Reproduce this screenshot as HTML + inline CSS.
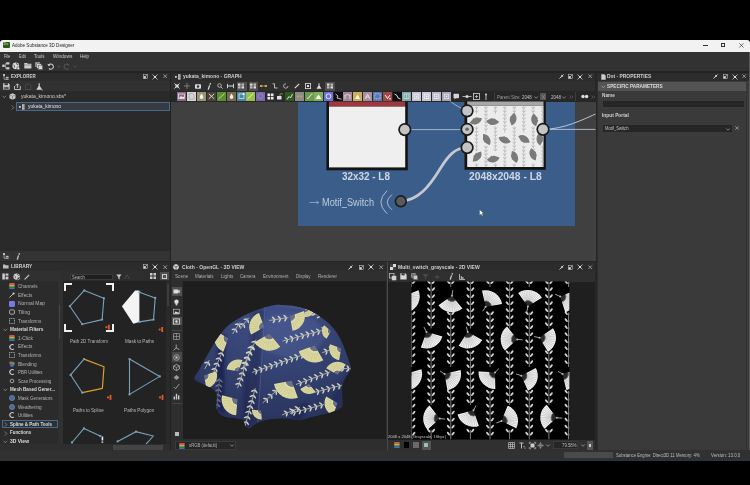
<!DOCTYPE html>
<html><head><meta charset="utf-8">
<style>
*{margin:0;padding:0;box-sizing:border-box}
html,body{width:750px;height:485px;overflow:hidden;background:#000;font-family:"Liberation Sans",sans-serif;color:#c8c8c8}
.a{position:absolute}
.t{position:absolute;white-space:nowrap;line-height:1;}
svg{position:absolute;overflow:visible}
</style></head><body>
<div class="a" style="left:0px;top:39.5px;width:750px;height:12px;background:#f2f2f2;border-radius:3px 3px 0 0"></div>
<div class="a" style="left:2.7px;top:42.2px;width:7.2px;height:6.2px;background:#2f5a1c;border-radius:1px"></div>
<div class="t" style="left:3.6px;top:43.4px;font-size:3.6px;color:#a8d890;font-weight:bold;">Ds</div>
<div class="t" style="left:11.7px;top:43.19px;font-size:5.8px;color:#1c1c1c;transform-origin:0 0;transform:scaleX(0.782);">Adobe Substance 3D Designer</div>
<div class="a" style="left:703px;top:45.3px;width:4.5px;height:0.6px;background:#333;"></div>
<div class="a" style="left:720.5px;top:43.2px;width:4.2px;height:4.2px;background:transparent;border:0.7px solid #333"></div>
<svg style="left:738.5px;top:43.2px" width="5" height="5"><path d="M0.3 0.3L4.5 4.5M4.5 0.3L0.3 4.5" stroke="#333" stroke-width="0.7"/></svg>
<div class="a" style="left:0px;top:51.5px;width:750px;height:409px;background:#2d2d2d;"></div>
<div class="a" style="left:0px;top:51.5px;width:750px;height:19.2px;background:#323232;"></div>
<div class="a" style="left:0px;top:70.7px;width:750px;height:2px;background:#232323;"></div>
<div class="t" style="left:4.3px;top:54.28px;font-size:5.6px;color:#cccccc;transform-origin:0 0;transform:scaleX(0.687);">File</div>
<div class="t" style="left:19.2px;top:54.28px;font-size:5.6px;color:#cccccc;transform-origin:0 0;transform:scaleX(0.705);">Edit</div>
<div class="t" style="left:34px;top:54.28px;font-size:5.6px;color:#cccccc;transform-origin:0 0;transform:scaleX(0.803);">Tools</div>
<div class="t" style="left:52.7px;top:54.28px;font-size:5.6px;color:#cccccc;transform-origin:0 0;transform:scaleX(0.850);">Windows</div>
<div class="t" style="left:79.7px;top:54.28px;font-size:5.6px;color:#cccccc;transform-origin:0 0;transform:scaleX(0.781);">Help</div>
<svg style="left:1.5px;top:62px" width="8" height="8"><rect x="0.3" y="2.6" width="2.4" height="2.4" fill="#d0d0d0"/><rect x="4.2" y="0.3" width="3.2" height="2.2" fill="#d0d0d0"/><rect x="4.2" y="5.2" width="3.2" height="2.2" fill="#d0d0d0"/><path d="M2.7 3.8 H3.6 V1.4 H4.2 M3.6 3.8 V6.3 H4.2" stroke="#d0d0d0" stroke-width="0.6" fill="none"/></svg>
<svg style="left:12px;top:61.8px" width="8" height="8"><circle cx="3.8" cy="3.8" r="3.4" fill="#d8d8d8"/><path d="M1.2 2.5 Q3 3.5 2.5 5.5 M4.5 0.8 Q4 2.5 6.5 3" stroke="#2d2d2d" stroke-width="0.7" fill="none"/><circle cx="6.2" cy="6.2" r="1.5" fill="#d8d8d8" stroke="#323232" stroke-width="0.5"/></svg>
<svg style="left:23.5px;top:62.2px" width="8" height="7"><path d="M0.3 1 H3 L3.8 1.8 H7.4 V6.4 H0.3Z" fill="#cfcfcf"/><path d="M0.3 3 H7.4" stroke="#555" stroke-width="0.5"/></svg>
<svg style="left:34.8px;top:61.8px" width="8" height="8"><rect x="0.3" y="0.3" width="4.6" height="4.6" fill="#bbb"/><rect x="1.8" y="1.8" width="4.6" height="4.6" fill="#ccc" stroke="#323232" stroke-width="0.4"/><rect x="3.2" y="3.2" width="4.4" height="4.4" fill="#d8d8d8" stroke="#323232" stroke-width="0.4"/></svg>
<svg style="left:47px;top:62.5px" width="8" height="7"><path d="M1.5 2.5 A2.6 2.6 0 1 1 2 5.5" fill="none" stroke="#c8c8c8" stroke-width="1.1"/><path d="M0.3 0.8 L1.6 3.2 L3.5 1.8Z" fill="#c8c8c8"/></svg>
<svg style="left:56.5px;top:64.8px" width="4" height="3"><path d="M0.3 0.5 L2 2.3 L3.7 0.5" stroke="#666" stroke-width="0.7" fill="none"/></svg>
<svg style="left:63px;top:62.5px" width="8" height="7"><path d="M6 2.5 A2.6 2.6 0 1 0 5.5 5.5" fill="none" stroke="#555" stroke-width="1.1"/></svg>
<svg style="left:72.5px;top:64.8px" width="4" height="3"><path d="M0.3 0.5 L2 2.3 L3.7 0.5" stroke="#555" stroke-width="0.7" fill="none"/></svg>
<div class="a" style="left:0px;top:72.7px;width:170px;height:8.3px;background:#2c2c2c;"></div>
<svg style="left:3px;top:73.5px" width="6" height="6"><rect x="0" y="0" width="2" height="2" fill="#bbb"/><rect x="2.8" y="2.8" width="2.8" height="1.4" fill="#bbb"/><rect x="2.8" y="4.6" width="2.8" height="1.2" fill="#bbb"/><path d="M1 2 V5.2 H2.8" stroke="#bbb" stroke-width="0.7" fill="none"/></svg>
<div class="t" style="left:11.3px;top:74.17px;font-size:5.4px;color:#cfcfcf;font-weight:bold;transform-origin:0 0;transform:scaleX(0.831);">EXPLORER</div>
<svg style="left:142.9px;top:74.1px" width="5" height="5"><rect x="0.4" y="0.4" width="4.2" height="4.2" fill="none" stroke="#bbb" stroke-width="0.6"/><rect x="0.6" y="2.2" width="2.2" height="2.2" fill="#ddd"/><path d="M2.5 2.5 L4.2 0.8" stroke="#ddd" stroke-width="0.6"/></svg>
<svg style="left:152.2px;top:73.6px" width="6" height="6"><path d="M0.5 0.5L5.5 5.5M5.5 0.5L0.5 5.5" stroke="#ccc" stroke-width="0.8"/><circle cx="3" cy="3" r="1.1" fill="#eee"/></svg>
<svg style="left:163.0px;top:74.39999999999999px" width="5" height="5"><path d="M0.4 0.4L4 4M4 0.4L0.4 4" stroke="#aaa" stroke-width="0.8"/></svg>
<div class="a" style="left:0px;top:81px;width:170px;height:10px;background:#313131;"></div>
<svg style="left:2.5px;top:83px" width="7" height="7"><path d="M0.2 0.2 H5.5 L6.6 1.3 V6.6 H0.2Z" fill="#d4d4d4"/><rect x="1.5" y="0.2" width="3.4" height="2" fill="#333"/><rect x="1.2" y="3.8" width="4.4" height="2.4" fill="#555"/></svg>
<svg style="left:13.5px;top:82.8px" width="7" height="7"><path d="M0.5 3 V6.5 H6.3 V3" stroke="#ccc" stroke-width="0.9" fill="none"/><path d="M3.4 5 V1 M1.8 2.5 L3.4 0.8 L5 2.5" stroke="#ccc" stroke-width="0.9" fill="none"/></svg>
<svg style="left:25.3px;top:83px" width="7" height="7"><path d="M0.5 6.5 V2 L3.2 0.5 L6 2 V6.5Z" fill="none" stroke="#4a4a4a" stroke-width="0.9"/></svg>
<svg style="left:36px;top:82.6px" width="7" height="8"><path d="M2.6 0.3 H3.8 V3 L6.3 6.8 H0.3 L2.6 3Z" fill="#d0d0d0"/><circle cx="6.2" cy="7" r="0.6" fill="#aaa"/></svg>
<div class="a" style="left:0px;top:91px;width:170px;height:159.5px;background:#2a2a2a;"></div>
<svg style="left:2px;top:94.5px" width="5" height="4"><path d="M0.5 0.8 L2.3 2.8 L4.1 0.8" stroke="#999" stroke-width="0.7" fill="none"/></svg>
<svg style="left:9px;top:93.3px" width="7" height="7"><path d="M3.5 0.3 L6.5 1.8 V5.2 L3.5 6.7 L0.5 5.2 V1.8Z" fill="#ccc"/><path d="M0.5 1.8 L3.5 3.3 L6.5 1.8 M3.5 3.3 V6.7" stroke="#555" stroke-width="0.5" fill="none"/></svg>
<div class="t" style="left:21px;top:94.41px;font-size:5.3px;color:#d0d0d0;transform-origin:0 0;transform:scaleX(0.949);">yukata_kimono.sbs*</div>
<div class="a" style="left:16.3px;top:102.2px;width:153.3px;height:9.3px;background:#373b41;border:0.8px solid #4a6a8c"></div>
<svg style="left:10.5px;top:104.5px" width="4" height="5"><path d="M0.8 0.5 L2.8 2.5 L0.8 4.5" stroke="#999" stroke-width="0.7" fill="none"/></svg>
<svg style="left:19px;top:104px" width="6" height="6"><rect x="0" y="2" width="1.8" height="1.8" fill="#ccc"/><rect x="3" y="0.3" width="2.6" height="1.5" fill="#ccc"/><rect x="3" y="2.2" width="2.6" height="1.5" fill="#ccc"/><rect x="3" y="4.1" width="2.6" height="1.5" fill="#ccc"/></svg>
<div class="t" style="left:28px;top:104.41px;font-size:5.3px;color:#e0e0e0;transform-origin:0 0;transform:scaleX(0.929);">yukata_kimono</div>
<div class="a" style="left:0px;top:250.5px;width:170px;height:10.8px;background:#333333;"></div>
<svg style="left:3px;top:252.7px" width="6" height="6"><rect x="0" y="0" width="2" height="2" fill="#bbb"/><rect x="2.8" y="2.8" width="2.8" height="1.4" fill="#bbb"/><rect x="2.8" y="4.6" width="2.8" height="1.2" fill="#bbb"/><path d="M1 2 V5.2 H2.8" stroke="#bbb" stroke-width="0.7" fill="none"/></svg>
<svg style="left:15.5px;top:252.5px" width="5" height="7"><circle cx="3.3" cy="0.9" r="0.8" fill="#ccc"/><path d="M2.6 2.4 L1.2 6.6" stroke="#ccc" stroke-width="1.3"/></svg>
<div class="a" style="left:0px;top:261.3px;width:750px;height:1px;background:#262626;"></div>
<div class="a" style="left:0px;top:262px;width:170px;height:9px;background:#2c2c2c;"></div>
<svg style="left:3px;top:264px" width="6" height="5"><path d="M0 0.5 H2.2 L2.8 1.2 H5.6 V4.6 H0Z" fill="#bbb"/></svg>
<div class="t" style="left:11.2px;top:264.27px;font-size:5.4px;color:#cfcfcf;font-weight:bold;transform-origin:0 0;transform:scaleX(0.895);">LIBRARY</div>
<svg style="left:142.9px;top:264.2px" width="5" height="5"><rect x="0.4" y="0.4" width="4.2" height="4.2" fill="none" stroke="#bbb" stroke-width="0.6"/><rect x="0.6" y="2.2" width="2.2" height="2.2" fill="#ddd"/><path d="M2.5 2.5 L4.2 0.8" stroke="#ddd" stroke-width="0.6"/></svg>
<svg style="left:152.2px;top:263.7px" width="6" height="6"><path d="M0.5 0.5L5.5 5.5M5.5 0.5L0.5 5.5" stroke="#ccc" stroke-width="0.8"/><circle cx="3" cy="3" r="1.1" fill="#eee"/></svg>
<svg style="left:163.0px;top:264.5px" width="5" height="5"><path d="M0.4 0.4L4 4M4 0.4L0.4 4" stroke="#aaa" stroke-width="0.8"/></svg>
<div class="a" style="left:0px;top:271px;width:170px;height:10px;background:#303030;"></div>
<svg style="left:2px;top:273px" width="7" height="7"><rect x="0.3" y="0.5" width="2.6" height="6" fill="#ccc"/><rect x="3.6" y="0.5" width="2.8" height="2.2" fill="#ccc"/><rect x="3.6" y="3.6" width="2.8" height="2.8" fill="#ccc"/></svg>
<svg style="left:12.5px;top:272.8px" width="8" height="8"><circle cx="3.6" cy="3.6" r="3.2" fill="#d0d0d0"/><path d="M1.2 2.4 Q3 3.4 2.4 5.2 M4.4 0.8 Q4 2.4 6.2 2.8" stroke="#303030" stroke-width="0.6" fill="none"/><rect x="4.6" y="4.6" width="3" height="3" fill="#303030"/><path d="M5 7.2 L7.2 5" stroke="#ccc" stroke-width="0.8"/></svg>
<svg style="left:24px;top:273.5px" width="6" height="6"><path d="M0.6 5.4 L5.2 0.8" stroke="#ccc" stroke-width="1.1"/></svg>
<div class="a" style="left:0px;top:281px;width:58px;height:163px;background:#2b2b2b;"></div>
<div class="a" style="left:58px;top:271px;width:4.5px;height:173px;background:#303030;"></div>
<div class="a" style="left:58.7px;top:305px;width:1.6px;height:34px;background:#454545;"></div>
<div class="a" style="left:62.5px;top:271px;width:107.5px;height:10px;background:#2e2e2e;"></div>
<div class="a" style="left:70.3px;top:273.8px;width:43px;height:6.1px;background:#1f1f1f;border:0.5px solid #3a3a3a"></div>
<div class="t" style="left:72px;top:274.55px;font-size:5px;color:#bdbdbd;transform-origin:0 0;transform:scaleX(0.808);">Search</div>
<svg style="left:115.5px;top:273.8px" width="7" height="6"><path d="M0.3 0.5 H5.5 L3.6 3 V5.5 L2.3 4.6 V3Z" fill="#cfcfcf"/></svg>
<svg style="left:123.5px;top:274px" width="6" height="6"><path d="M0.5 5 L3 0.8 L5.5 5" stroke="#4a4a4a" stroke-width="1" fill="none"/></svg>
<svg style="left:149.7px;top:273.4px" width="7" height="7"><rect x="0" y="0" width="2.5" height="2.5" fill="#ccc"/><rect x="3.5" y="0" width="2.5" height="2.5" fill="#ccc"/><rect x="0" y="3.5" width="2.5" height="2.5" fill="#ccc"/><rect x="3.5" y="3.5" width="2.5" height="2.5" fill="#ccc"/></svg>
<div class="a" style="left:159.6px;top:272.3px;width:9.6px;height:8.2px;background:#4e4e4e;"></div>
<div class="a" style="left:162.2px;top:274.4px;width:4.4px;height:4.2px;background:transparent;border:0.7px solid #ccc"></div>
<div class="a" style="left:62.5px;top:281px;width:107.5px;height:163px;background:#232323;"></div>
<div class="a" style="left:166px;top:281px;width:3.5px;height:163px;background:#2a2a2a;"></div>
<div class="a" style="left:166.5px;top:284px;width:2.3px;height:22px;background:#3c3c3c;"></div>
<div class="a" style="left:2px;top:420px;width:55.8px;height:8px;background:#2c3036;border:0.7px solid #4a6a8c"></div>
<svg style="left:9.3px;top:283.3px" width="6" height="6"><rect x="0.2" y="0" width="5.4" height="1.5" fill="#d85050" rx="0.6"/><rect x="0.2" y="1.5" width="5.4" height="1.5" fill="#e0a040"/><rect x="0.2" y="3" width="5.4" height="1.5" fill="#50a050"/><rect x="0.2" y="4.5" width="5.4" height="1.5" fill="#4070c0" rx="0.6"/></svg>
<div class="t" style="left:17.8px;top:284.05px;font-size:5px;color:#b4b4b4;transform-origin:0 0;transform:scaleX(0.923);">Channels</div>
<svg style="left:9.3px;top:292px" width="6" height="6"><path d="M0.5 5.5 L4 2" stroke="#ccc" stroke-width="0.9"/><circle cx="4.6" cy="1.4" r="1" fill="#ddd"/></svg>
<div class="t" style="left:17.8px;top:292.75px;font-size:5px;color:#b4b4b4;transform-origin:0 0;transform:scaleX(0.941);">Effects</div>
<svg style="left:9.3px;top:300.7px" width="6" height="6"><defs><linearGradient id="ng" x1="0" y1="0" x2="1" y2="1"><stop offset="0" stop-color="#a070e0"/><stop offset="1" stop-color="#5080f0"/></linearGradient></defs><rect x="0" y="0" width="6" height="6" rx="1.2" fill="url(#ng)"/></svg>
<div class="t" style="left:17.8px;top:301.45px;font-size:5px;color:#b4b4b4;transform-origin:0 0;transform:scaleX(0.992);">Normal Map</div>
<svg style="left:9.3px;top:309.3px" width="6" height="6"><rect x="0.6" y="0.9" width="4.8" height="4.2" rx="0.8" fill="none" stroke="#bbb" stroke-width="0.9"/></svg>
<div class="t" style="left:17.8px;top:310.05px;font-size:5px;color:#b4b4b4;transform-origin:0 0;transform:scaleX(1.029);">Tiling</div>
<svg style="left:9.3px;top:318px" width="6" height="6"><rect x="0.5" y="0.5" width="5" height="5" fill="none" stroke="#bbb" stroke-width="0.8" stroke-dasharray="1 0.6"/></svg>
<div class="t" style="left:17.8px;top:318.75px;font-size:5px;color:#b4b4b4;transform-origin:0 0;transform:scaleX(0.929);">Transforms</div>
<svg style="left:3px;top:328.1px" width="5" height="4"><path d="M0.5 0.8 L2.3 2.8 L4.1 0.8" stroke="#999" stroke-width="0.7" fill="none"/></svg>
<div class="t" style="left:9.8px;top:327.35px;font-size:5px;color:#dcdcdc;font-weight:bold;transform-origin:0 0;transform:scaleX(0.946);">Material Filters</div>
<svg style="left:9.3px;top:335.1px" width="6" height="6"><rect x="0.2" y="0" width="5.4" height="1.5" fill="#d85050" rx="0.6"/><rect x="0.2" y="1.5" width="5.4" height="1.5" fill="#e0a040"/><rect x="0.2" y="3" width="5.4" height="1.5" fill="#50a050"/><rect x="0.2" y="4.5" width="5.4" height="1.5" fill="#4070c0" rx="0.6"/></svg>
<div class="t" style="left:17.8px;top:335.85px;font-size:5px;color:#b4b4b4;transform-origin:0 0;transform:scaleX(0.975);">1-Click</div>
<svg style="left:9.3px;top:343.5px" width="6" height="6"><path d="M4.8 1.2 A2.4 2.4 0 1 0 4.8 4.8" fill="none" stroke="#ccc" stroke-width="1.1"/></svg>
<div class="t" style="left:17.8px;top:344.25px;font-size:5px;color:#b4b4b4;transform-origin:0 0;transform:scaleX(0.941);">Effects</div>
<svg style="left:9.3px;top:352px" width="6" height="6"><rect x="0.5" y="0.5" width="5" height="5" fill="none" stroke="#bbb" stroke-width="0.8" stroke-dasharray="1 0.6"/></svg>
<div class="t" style="left:17.8px;top:352.75px;font-size:5px;color:#b4b4b4;transform-origin:0 0;transform:scaleX(0.929);">Transforms</div>
<svg style="left:9.3px;top:360.8px" width="6" height="6"><circle cx="2" cy="2" r="1.8" fill="#d05050"/><circle cx="4" cy="2.5" r="1.8" fill="#50a050"/><circle cx="3" cy="4.2" r="1.8" fill="#4070d0"/></svg>
<div class="t" style="left:17.8px;top:361.55px;font-size:5px;color:#b4b4b4;transform-origin:0 0;transform:scaleX(0.956);">Blending</div>
<svg style="left:9.3px;top:369.2px" width="6" height="6"><path d="M4.8 1.2 A2.4 2.4 0 1 0 4.8 4.8" fill="none" stroke="#ccc" stroke-width="1.1"/></svg>
<div class="t" style="left:17.8px;top:369.95px;font-size:5px;color:#b4b4b4;transform-origin:0 0;transform:scaleX(0.882);">PBR Utilities</div>
<svg style="left:9.3px;top:377.8px" width="6" height="6"><circle cx="3" cy="3" r="1.8" fill="none" stroke="#bbb" stroke-width="0.8"/></svg>
<div class="t" style="left:17.8px;top:378.55px;font-size:5px;color:#b4b4b4;transform-origin:0 0;transform:scaleX(0.888);">Scan Processing</div>
<svg style="left:3px;top:388.0px" width="5" height="4"><path d="M0.5 0.8 L2.3 2.8 L4.1 0.8" stroke="#999" stroke-width="0.7" fill="none"/></svg>
<div class="t" style="left:9.8px;top:387.25px;font-size:5px;color:#dcdcdc;font-weight:bold;transform-origin:0 0;transform:scaleX(0.920);">Mesh Based Gener...</div>
<svg style="left:9.3px;top:395.2px" width="6" height="6"><circle cx="3" cy="3" r="2.6" fill="#4a6a9a" stroke="#8aa0c0" stroke-width="0.5"/></svg>
<div class="t" style="left:17.8px;top:395.95px;font-size:5px;color:#b4b4b4;transform-origin:0 0;transform:scaleX(0.900);">Mask Generators</div>
<svg style="left:9.3px;top:403.8px" width="6" height="6"><circle cx="3" cy="3" r="2.6" fill="#4a6a9a" stroke="#8aa0c0" stroke-width="0.5"/></svg>
<div class="t" style="left:17.8px;top:404.55px;font-size:5px;color:#b4b4b4;transform-origin:0 0;transform:scaleX(0.930);">Weathering</div>
<svg style="left:9.3px;top:412.3px" width="6" height="6"><path d="M4.8 1.2 A2.4 2.4 0 1 0 4.8 4.8" fill="none" stroke="#ccc" stroke-width="1.1"/></svg>
<div class="t" style="left:17.8px;top:413.05px;font-size:5px;color:#b4b4b4;transform-origin:0 0;transform:scaleX(0.925);">Utilities</div>
<svg style="left:3.5px;top:421.9px" width="4" height="5"><path d="M0.8 0.5 L2.8 2.5 L0.8 4.5" stroke="#999" stroke-width="0.7" fill="none"/></svg>
<div class="t" style="left:9.8px;top:421.65px;font-size:5px;color:#dcdcdc;font-weight:bold;transform-origin:0 0;transform:scaleX(0.904);">Spline &amp; Path Tools</div>
<svg style="left:3.5px;top:430.5px" width="4" height="5"><path d="M0.8 0.5 L2.8 2.5 L0.8 4.5" stroke="#999" stroke-width="0.7" fill="none"/></svg>
<div class="t" style="left:9.8px;top:430.25px;font-size:5px;color:#dcdcdc;font-weight:bold;transform-origin:0 0;transform:scaleX(0.883);">Functions</div>
<svg style="left:3px;top:439.5px" width="5" height="4"><path d="M0.5 0.8 L2.3 2.8 L4.1 0.8" stroke="#999" stroke-width="0.7" fill="none"/></svg>
<div class="t" style="left:9.8px;top:438.75px;font-size:5px;color:#dcdcdc;font-weight:bold;transform-origin:0 0;transform:scaleX(0.996);">3D View</div>
<div class="a" style="left:63.6px;top:282.5px;width:8px;height:2px;background:#f0f0f0;"></div>
<div class="a" style="left:63.6px;top:282.5px;width:2px;height:8px;background:#f0f0f0;"></div>
<div class="a" style="left:106px;top:282.5px;width:8px;height:2px;background:#f0f0f0;"></div>
<div class="a" style="left:112px;top:282.5px;width:2px;height:8px;background:#f0f0f0;"></div>
<div class="a" style="left:63.6px;top:330.4px;width:8px;height:2px;background:#f0f0f0;"></div>
<div class="a" style="left:63.6px;top:324.4px;width:2px;height:8px;background:#f0f0f0;"></div>
<div class="a" style="left:106px;top:330.4px;width:8px;height:2px;background:#f0f0f0;"></div>
<div class="a" style="left:112px;top:324.4px;width:2px;height:8px;background:#f0f0f0;"></div>
<svg style="left:0;top:0" width="750" height="485"><path d="M84.3 290.4 L103.9 298.3 L102.1 319.6 L82.2 324.2 L69.9 306.2 Z" fill="none" stroke="#7aa2ba" stroke-width="1.1" stroke-linejoin="round"/><circle cx="84.3" cy="290.4" r="1.15" fill="#7aa2ba"/><circle cx="103.9" cy="298.3" r="1.15" fill="#7aa2ba"/><circle cx="102.1" cy="319.6" r="1.15" fill="#7aa2ba"/><circle cx="82.2" cy="324.2" r="1.15" fill="#7aa2ba"/><circle cx="69.9" cy="306.2" r="1.15" fill="#7aa2ba"/><path d="M135.1 290.4 L139.4 290.4 L139.4 321.9 L133.3 323.7 L121.9 306.2Z" fill="#f4f4f4"/><path d="M139.4 292.2 L155.2 297.9 L153.5 319.6 L139.4 321.9" fill="none" stroke="#7aa2ba" stroke-width="1.1" stroke-linejoin="round"/><circle cx="139.4" cy="292.2" r="1.15" fill="#7aa2ba"/><circle cx="155.2" cy="297.9" r="1.15" fill="#7aa2ba"/><circle cx="153.5" cy="319.6" r="1.15" fill="#7aa2ba"/><circle cx="139.4" cy="321.9" r="1.15" fill="#7aa2ba"/><path d="M84 359.1 L70.6 374.9 L82.3 392.7" fill="none" stroke="#7aa2ba" stroke-width="1.1"/><path d="M84 359.1 L104 366.7 L102.4 388.3 L82.3 392.7" fill="none" stroke="#d9a02e" stroke-width="1.2" stroke-linejoin="round"/><circle cx="84" cy="359.1" r="1.15" fill="#7aa2ba"/><circle cx="70.6" cy="374.9" r="1.15" fill="#7aa2ba"/><circle cx="82.3" cy="392.7" r="1.15" fill="#7aa2ba"/><path d="M129.5 359.1 L159.8 376.4 L129.5 394.4 Z" fill="none" stroke="#7aa2ba" stroke-width="1.1" stroke-linejoin="round"/><circle cx="129.5" cy="359.1" r="1.15" fill="#7aa2ba"/><circle cx="159.8" cy="376.4" r="1.15" fill="#7aa2ba"/><circle cx="129.5" cy="394.4" r="1.15" fill="#7aa2ba"/><path d="M72 442.5 L84 428.4 L100.3 436" fill="none" stroke="#7aa2ba" stroke-width="1.1" stroke-linejoin="round"/><circle cx="72" cy="442.5" r="1.15" fill="#7aa2ba"/><circle cx="84" cy="428.4" r="1.15" fill="#7aa2ba"/><circle cx="100.3" cy="436" r="1.15" fill="#7aa2ba"/><path d="M117.6 441.4 L136 431.7 L153.3 436 Q150 440 146 444" fill="none" stroke="#7aa2ba" stroke-width="1.1"/><circle cx="117.6" cy="441.4" r="1.15" fill="#7aa2ba"/><circle cx="136" cy="431.7" r="1.15" fill="#7aa2ba"/><rect x="101.6" y="436.5" width="1.6" height="4" fill="#eee"/><rect x="101.6" y="441.5" width="1.6" height="1.3" fill="#eee"/><circle cx="106.4" cy="327.2" r="1.1" fill="#e05a2a"/><rect x="108" y="324.7" width="1.8" height="5" fill="#e05a2a"/><circle cx="159.70000000000002" cy="329.5" r="1.1" fill="#e05a2a"/><rect x="161.3" y="327.0" width="1.8" height="5" fill="#e05a2a"/><circle cx="108.0" cy="397.4" r="1.1" fill="#e05a2a"/><rect x="109.6" y="394.9" width="1.8" height="5" fill="#e05a2a"/><circle cx="160.0" cy="397.4" r="1.1" fill="#e05a2a"/><rect x="161.6" y="394.9" width="1.8" height="5" fill="#e05a2a"/></svg>
<div class="t" style="left:69.9px;top:339.45px;font-size:5px;color:#b8b8b8;transform-origin:0 0;transform:scaleX(0.906);">Path 2D Transform</div>
<div class="t" style="left:124.9px;top:339.45px;font-size:5px;color:#b8b8b8;transform-origin:0 0;transform:scaleX(0.919);">Mask to Paths</div>
<div class="t" style="left:73.2px;top:408.15px;font-size:5px;color:#b8b8b8;transform-origin:0 0;transform:scaleX(0.913);">Paths to Spline</div>
<div class="t" style="left:124.1px;top:408.15px;font-size:5px;color:#b8b8b8;transform-origin:0 0;transform:scaleX(0.940);">Paths Polygon</div>
<div class="a" style="left:0px;top:444px;width:170px;height:6.5px;background:#2e2e2e;"></div>
<div class="a" style="left:113.3px;top:444.5px;width:49.7px;height:5.5px;background:#444;"></div>
<div class="a" style="left:170px;top:72.7px;width:1px;height:378px;background:#222;"></div>
<div class="a" style="left:171px;top:72.7px;width:424.5px;height:8.3px;background:#2c2c2c;"></div>
<svg style="left:174.5px;top:74.2px" width="6" height="6"><rect x="0" y="2" width="1.8" height="1.8" fill="#ccc"/><rect x="3" y="0.3" width="2.6" height="1.5" fill="#ccc"/><rect x="3" y="2.2" width="2.6" height="1.5" fill="#ccc"/><rect x="3" y="4.1" width="2.6" height="1.5" fill="#ccc"/></svg>
<div class="t" style="left:182.7px;top:74.31px;font-size:5.3px;color:#cfcfcf;font-weight:bold;transform-origin:0 0;transform:scaleX(0.939);">yukata_kimono - GRAPH</div>
<svg style="left:558.5px;top:74.1px" width="5" height="5"><path d="M4.5 0.5 L2 3 L0.5 4.5" stroke="#ccc" stroke-width="1"/><path d="M2.5 0.8 L4.2 2.5 L2.5 3.2 L1.8 2.5Z" fill="#ccc"/></svg>
<svg style="left:568.0px;top:74.1px" width="5" height="5"><rect x="0.4" y="0.4" width="4.2" height="4.2" fill="none" stroke="#bbb" stroke-width="0.6"/><rect x="0.6" y="2.2" width="2.2" height="2.2" fill="#ddd"/><path d="M2.5 2.5 L4.2 0.8" stroke="#ddd" stroke-width="0.6"/></svg>
<svg style="left:577px;top:73.6px" width="6" height="6"><path d="M0.5 0.5L5.5 5.5M5.5 0.5L0.5 5.5" stroke="#ccc" stroke-width="0.8"/><circle cx="3" cy="3" r="1.1" fill="#eee"/></svg>
<svg style="left:587.8px;top:74.39999999999999px" width="5" height="5"><path d="M0.4 0.4L4 4M4 0.4L0.4 4" stroke="#aaa" stroke-width="0.8"/></svg>
<div class="a" style="left:171px;top:81px;width:424.5px;height:10.2px;background:#2f2f2f;"></div>
<div class="a" style="left:171px;top:91.2px;width:424.5px;height:10.4px;background:#272727;"></div>
<div class="a" style="left:237.2px;top:82px;width:9.6px;height:8.6px;background:#505050;"></div>
<div class="a" style="left:248.6px;top:82px;width:9px;height:8.6px;background:#505050;"></div>
<div class="a" style="left:325.2px;top:82px;width:10.2px;height:8.6px;background:#505050;"></div>
<svg style="left:173.6px;top:83.4px" width="6" height="6"><path d="M0.5 0.5 L2 2 M5.5 0.5 L4 2 M0.5 5.5 L2 4 M5.5 5.5 L4 4" stroke="#ddd" stroke-width="1"/><rect x="1.5" y="1.5" width="3" height="3" fill="#ddd"/></svg>
<svg style="left:183.8px;top:83.4px" width="6" height="6"><path d="M3 0 V6 M0 3 H6" stroke="#999" stroke-width="0.7"/></svg>
<svg style="left:195.2px;top:83.4px" width="6" height="6"><rect x="0" y="1.2" width="6" height="4.5" rx="0.8" fill="#ddd"/><circle cx="3" cy="3.5" r="1.3" fill="#333"/></svg>
<svg style="left:206.5px;top:82.9px" width="5" height="7"><circle cx="3.3" cy="0.9" r="0.8" fill="#ddd"/><path d="M2.6 2.4 L1.2 6.6" stroke="#ddd" stroke-width="1.3"/></svg>
<svg style="left:216.8px;top:83.4px" width="6" height="6"><circle cx="2.5" cy="2.5" r="1.8" fill="none" stroke="#ccc" stroke-width="0.8"/><path d="M3.8 3.8 L5.6 5.6" stroke="#ccc" stroke-width="0.9"/></svg>
<svg style="left:227.1px;top:83.4px" width="7" height="6"><path d="M0.5 3 H6.5" stroke="#ddd" stroke-width="1"/><path d="M0.5 0.8 V5.2 M6.5 0.8 V5.2" stroke="#ddd" stroke-width="0.9"/></svg>
<svg style="left:238.4px;top:83.4px" width="6" height="6"><rect x="0" y="0.5" width="2.5" height="2.2" fill="#ddd"/><rect x="3.5" y="0.5" width="2.5" height="2.2" fill="#bbb"/><rect x="0" y="3.3" width="2.5" height="2.2" fill="#bbb"/><rect x="3.5" y="3.3" width="2.5" height="2.2" fill="#ddd"/></svg>
<svg style="left:249.8px;top:83.4px" width="6" height="6"><rect x="0" y="0.5" width="2.5" height="2.2" fill="#ddd"/><rect x="3.5" y="0.5" width="2.5" height="2.2" fill="#bbb"/><rect x="0" y="3.3" width="2.5" height="2.2" fill="#bbb"/><rect x="3.5" y="3.3" width="2.5" height="2.2" fill="#ddd"/></svg>
<svg style="left:259.9px;top:84.4px" width="7" height="4"><rect x="0" y="1" width="2.5" height="2" fill="#d9a030"/><rect x="4.5" y="1" width="2.5" height="2" fill="#d9a030"/><path d="M2.5 2 H4.5" stroke="#aaa" stroke-width="0.5"/></svg>
<svg style="left:272.4px;top:83.4px" width="6" height="6"><path d="M0.5 0.8 H2.5 V5 H5.5" fill="none" stroke="#ccc" stroke-width="0.9"/></svg>
<svg style="left:283.2px;top:83.4px" width="6" height="6"><path d="M5 3 A2.2 2.2 0 1 1 3 0.8" fill="none" stroke="#bbb" stroke-width="0.9"/></svg>
<svg style="left:294px;top:83.4px" width="6" height="6"><path d="M0.8 5.2 L5.2 0.8" stroke="#ddd" stroke-width="1.2"/></svg>
<svg style="left:304.8px;top:83.4px" width="6" height="6"><rect x="0.4" y="0.4" width="5.2" height="5.2" fill="none" stroke="#ddd" stroke-width="0.8"/><rect x="2" y="2" width="2" height="2" fill="#ddd"/></svg>
<svg style="left:315.6px;top:83.4px" width="6" height="6"><path d="M2.5 0.3 H3.5 V2.5 L5.5 5.7 H0.5 L2.5 2.5Z" fill="#ddd"/></svg>
<svg style="left:327px;top:83.4px" width="6" height="6"><rect x="0" y="0.5" width="2.5" height="2.2" fill="#ddd"/><rect x="3.5" y="0.5" width="2.5" height="2.2" fill="#bbb"/><rect x="0" y="3.3" width="2.5" height="2.2" fill="#bbb"/><rect x="3.5" y="3.3" width="2.5" height="2.2" fill="#ddd"/></svg>
<div class="a" style="left:177.2px;top:92px;width:9px;height:8.6px;background:#8c6a88;"></div>
<div class="a" style="left:187.3px;top:92px;width:9px;height:8.6px;background:#d6d6d6;"></div>
<div class="a" style="left:197px;top:92px;width:9px;height:8.6px;background:#9a9478;"></div>
<div class="a" style="left:207.2px;top:92px;width:9px;height:8.6px;background:#4a4238;"></div>
<div class="a" style="left:217.4px;top:92px;width:9px;height:8.6px;background:#5a9030;"></div>
<div class="a" style="left:227px;top:92px;width:9px;height:8.6px;background:#7a6a50;"></div>
<div class="a" style="left:236.6px;top:92px;width:9px;height:8.6px;background:#4a88a0;"></div>
<div class="a" style="left:246.2px;top:92px;width:9px;height:8.6px;background:#98c050;"></div>
<div class="a" style="left:256px;top:92px;width:9px;height:8.6px;background:#7a68a8;"></div>
<div class="a" style="left:266.4px;top:92px;width:9px;height:8.6px;background:#2a2a2a;"></div>
<div class="a" style="left:275.4px;top:92px;width:9px;height:8.6px;background:#2a2a2a;"></div>
<div class="a" style="left:285px;top:92px;width:9px;height:8.6px;background:#2d5a20;"></div>
<div class="a" style="left:295.2px;top:92px;width:9px;height:8.6px;background:#8a8a8a;"></div>
<div class="a" style="left:304.8px;top:92px;width:9px;height:8.6px;background:#6a9a50;"></div>
<div class="a" style="left:314.4px;top:92px;width:9px;height:8.6px;background:#80b060;"></div>
<div class="a" style="left:324px;top:92px;width:9px;height:8.6px;background:#6a70e0;"></div>
<div class="a" style="left:334.2px;top:92px;width:9px;height:8.6px;background:#0e0e0e;"></div>
<div class="a" style="left:343px;top:92px;width:9px;height:8.6px;background:#a08898;"></div>
<div class="a" style="left:353.2px;top:92px;width:9px;height:8.6px;background:#c8b060;"></div>
<div class="a" style="left:362.8px;top:92px;width:9px;height:8.6px;background:#a890a0;"></div>
<div class="a" style="left:373px;top:92px;width:9px;height:8.6px;background:#5878b0;"></div>
<div class="a" style="left:382.6px;top:92px;width:9px;height:8.6px;background:#a04848;"></div>
<div class="a" style="left:392.8px;top:92px;width:9px;height:8.6px;background:#101010;"></div>
<div class="a" style="left:401.8px;top:92px;width:9px;height:8.6px;background:#80a8a8;"></div>
<div class="a" style="left:412px;top:92px;width:9px;height:8.6px;background:#c4c4d4;"></div>
<div class="a" style="left:422.4px;top:92px;width:9px;height:8.6px;background:#c8c8d8;"></div>
<div class="a" style="left:432px;top:92px;width:9px;height:8.6px;background:#b8b8c8;"></div>
<div class="a" style="left:441.6px;top:92px;width:9px;height:8.6px;background:#a4a4bc;"></div>
<svg style="left:177.2px;top:92px" width="9" height="8.6"><rect x="1.6" y="2" width="5.8" height="4.6" fill="none" stroke="#f0f0f0" stroke-width="0.7"/><path d="M2 6.3 L4 4 L5.5 5.3 L7 4.5 V6.3Z" fill="#f0f0f0"/></svg>
<svg style="left:187.3px;top:92px" width="9" height="8.6"><path d="M2.2 1.5 H5.5 L7 3 V7.2 H2.2Z" fill="none" stroke="#999" stroke-width="0.6"/></svg>
<svg style="left:197px;top:92px" width="9" height="8.6"><path d="M4.5 1.5 Q7 5 6 6.3 Q4.5 7.8 3 6.3 Q2 5 4.5 1.5Z" fill="#f4f4e0"/></svg>
<svg style="left:207.2px;top:92px" width="9" height="8.6"><path d="M1.8 1.8 L7.2 6.8 M7.2 1.8 L1.8 6.8" stroke="#e8e8e8" stroke-width="0.9"/></svg>
<svg style="left:217.4px;top:92px" width="9" height="8.6"><path d="M1.5 7 L7.5 1.5" stroke="#d8f0b0" stroke-width="0.8"/></svg>
<svg style="left:227px;top:92px" width="9" height="8.6"><path d="M4.5 1.5 Q7 5 6 6.3 Q4.5 7.8 3 6.3 Q2 5 4.5 1.5Z" fill="#f4f0e0"/></svg>
<svg style="left:236.6px;top:92px" width="9" height="8.6"><rect x="2" y="2" width="5" height="4.6" fill="none" stroke="#e0f0f8" stroke-width="0.7"/><circle cx="6.5" cy="2" r="1" fill="#fff"/></svg>
<svg style="left:246.2px;top:92px" width="9" height="8.6"><path d="M1.5 7 L7.5 1.5" stroke="#f0ffe0" stroke-width="0.8"/></svg>
<svg style="left:256px;top:92px" width="9" height="8.6"><circle cx="4.5" cy="4.3" r="2.5" fill="none" stroke="#9a90d0" stroke-width="0.8"/></svg>
<svg style="left:266.4px;top:92px" width="9" height="8.6"><rect x="1.5" y="1.5" width="2.6" height="2.6" fill="#eee"/><rect x="4.9" y="1.5" width="2.6" height="2.6" fill="#eee"/><rect x="1.5" y="4.9" width="2.6" height="2.6" fill="#eee"/><rect x="4.9" y="4.9" width="2.6" height="2.6" fill="#eee"/></svg>
<svg style="left:275.4px;top:92px" width="9" height="8.6"><rect x="2" y="4" width="4.5" height="3.5" fill="#e0e0e0"/><path d="M5 4 V2.5 A1.3 1.3 0 0 1 7.5 2.5" stroke="#8c6" stroke-width="0.7" fill="none"/></svg>
<svg style="left:285px;top:92px" width="9" height="8.6"><path d="M2 7.5 L4 4.5 L5.5 6 L7.5 2" stroke="#e0f0d0" stroke-width="0.9" fill="none"/></svg>
<svg style="left:295.2px;top:92px" width="9" height="8.6"><circle cx="3" cy="4.3" r="1" fill="#e8a040"/><circle cx="6" cy="4.3" r="1" fill="#e8a040"/></svg>
<svg style="left:304.8px;top:92px" width="9" height="8.6"><path d="M2 6.5 Q4 6.5 5 4 Q6 2 7.5 2" stroke="#f0f8e8" stroke-width="0.9" fill="none"/></svg>
<svg style="left:314.4px;top:92px" width="9" height="8.6"><path d="M1.5 7 L4.5 2.5 L7.5 7Z" fill="#f0f8e8"/></svg>
<svg style="left:324px;top:92px" width="9" height="8.6"><circle cx="4.5" cy="4.3" r="2.4" fill="none" stroke="#f0e8ff" stroke-width="1"/></svg>
<svg style="left:334.2px;top:92px" width="9" height="8.6"><path d="M1.5 2 L4 4 L3 6 L7.5 7.2" stroke="#eee" stroke-width="0.8" fill="none"/></svg>
<svg style="left:343px;top:92px" width="9" height="8.6"><path d="M1.5 3.5 Q4.5 1.5 7.5 3.5 M2 3.5 V7 M7 3.5 V7" stroke="#f4f4f4" stroke-width="0.7" fill="none"/></svg>
<svg style="left:353.2px;top:92px" width="9" height="8.6"><path d="M2 7 L4.5 2.5 L7 7Z" fill="#fff8e0"/></svg>
<svg style="left:362.8px;top:92px" width="9" height="8.6"><path d="M2 7 L4.5 2 L7 7 M3.2 5 H5.8" stroke="#f8f0f8" stroke-width="0.8" fill="none"/></svg>
<svg style="left:373px;top:92px" width="9" height="8.6"><rect x="1.8" y="1.8" width="5.4" height="5" fill="none" stroke="#e0e8ff" stroke-width="0.7" stroke-dasharray="1 0.7"/></svg>
<svg style="left:382.6px;top:92px" width="9" height="8.6"><path d="M2 3 L4.5 6.5 L7 3" stroke="#fff" stroke-width="1" fill="none"/><circle cx="7" cy="6.8" r="0.8" fill="#fff"/></svg>
<svg style="left:392.8px;top:92px" width="9" height="8.6"><path d="M1.5 2 L4 3.5 L5 6 L7.5 7" stroke="#eee" stroke-width="0.9" fill="none"/></svg>
<svg style="left:401.8px;top:92px" width="9" height="8.6"><rect x="2" y="2" width="5" height="4.6" fill="none" stroke="#e0f0f0" stroke-width="0.6"/><path d="M4.5 2 V6.6" stroke="#e0f0f0" stroke-width="0.5"/></svg>
<svg style="left:412px;top:92px" width="9" height="8.6"><rect x="2.2" y="2.2" width="4.6" height="4.2" fill="none" stroke="#f4f4f4" stroke-width="0.7"/><circle cx="4.5" cy="4.3" r="0.9" fill="#f4f4f4"/></svg>
<svg style="left:422.4px;top:92px" width="9" height="8.6"><rect x="2.2" y="2.2" width="4.6" height="4.2" fill="none" stroke="#f4f4f4" stroke-width="0.7"/><circle cx="4.5" cy="4.3" r="0.9" fill="#f4f4f4"/></svg>
<svg style="left:432px;top:92px" width="9" height="8.6"><rect x="2.2" y="2.2" width="4.6" height="4.2" fill="none" stroke="#f4f4f4" stroke-width="0.7"/><circle cx="4.5" cy="4.3" r="0.9" fill="#f4f4f4"/></svg>
<svg style="left:441.6px;top:92px" width="9" height="8.6"><rect x="2.2" y="2.2" width="4.6" height="4.2" fill="none" stroke="#f4f4f4" stroke-width="0.7"/><circle cx="4.5" cy="4.3" r="0.9" fill="#f4f4f4"/></svg>
<svg style="left:452.5px;top:92.8px" width="7" height="7"><rect x="0.5" y="0.8" width="5.5" height="4.4" rx="0.6" fill="#d4d4d4"/><path d="M1.5 5.2 L1.5 6.5 L3 5.2" fill="#d4d4d4"/></svg>
<svg style="left:461.5px;top:93px" width="10" height="7"><path d="M0.5 3.5 H9.5" stroke="#d4d4d4" stroke-width="0.8"/><circle cx="5" cy="3.5" r="1.6" fill="#d4d4d4"/></svg>
<svg style="left:472.5px;top:92.8px" width="7" height="7"><rect x="0.5" y="0.5" width="6" height="6" fill="none" stroke="#d4d4d4" stroke-width="0.8"/><path d="M2 3.5 H5 M3.5 2 V5" stroke="#d4d4d4" stroke-width="0.7"/></svg>
<svg style="left:483.5px;top:92.5px" width="4" height="8"><path d="M2 0.8 V7" stroke="#c8c8c8" stroke-width="0.9"/><circle cx="2" cy="1.5" r="1" fill="#c8c8c8"/></svg>
<div class="a" style="left:493.8px;top:92px;width:0.8px;height:8.6px;background:#3c3c3c;"></div>
<div class="t" style="left:496.5px;top:94.55px;font-size:5px;color:#9c9c9c;transform-origin:0 0;transform:scaleX(0.863);">Parent Size:</div>
<div class="t" style="left:522px;top:94.55px;font-size:5px;color:#c4c4c4;transform-origin:0 0;transform:scaleX(0.872);">2048</div>
<svg style="left:533.5px;top:95.6px" width="4" height="3"><path d="M0.3 0.5 L2 2.3 L3.7 0.5" stroke="#aaa" stroke-width="0.7" fill="none"/></svg>
<div class="a" style="left:539.8px;top:92.5px;width:6.3px;height:7.6px;background:#555;"></div>
<svg style="left:540.5px;top:93.5px" width="5" height="6"><path d="M1 1 L4 5 M4 1 L1 5" stroke="#999" stroke-width="0.6"/></svg>
<div class="t" style="left:550.5px;top:94.55px;font-size:5px;color:#c4c4c4;transform-origin:0 0;transform:scaleX(0.899);">2048</div>
<svg style="left:562px;top:95.6px" width="4" height="3"><path d="M0.3 0.5 L2 2.3 L3.7 0.5" stroke="#aaa" stroke-width="0.7" fill="none"/></svg>
<svg style="left:568.5px;top:95px" width="5" height="4"><path d="M0.5 0.5 L2 2 L0.5 3.5 M2.5 0.5 L4 2 L2.5 3.5" stroke="#666" stroke-width="0.6" fill="none"/></svg>
<div class="a" style="left:575.3px;top:92px;width:0.8px;height:8.6px;background:#3c3c3c;"></div>
<svg style="left:580.5px;top:93.5px" width="8" height="5"><circle cx="2" cy="2.5" r="1.7" fill="#ddd"/><circle cx="5.6" cy="2.5" r="1.7" fill="#ddd"/></svg>
<svg style="left:590.5px;top:95px" width="5" height="4"><path d="M0.5 0.5 L2 2 L0.5 3.5 M2.5 0.5 L4 2 L2.5 3.5" stroke="#666" stroke-width="0.6" fill="none"/></svg>
<div class="a" style="left:595px;top:72.7px;width:2px;height:378px;background:#262626;"></div>
<div class="a" style="left:171px;top:101.6px;width:424.5px;height:159.7px;background:#404040;"></div>
<div class="a" style="left:297.5px;top:101.6px;width:277px;height:124.5px;background:#3a5d8a;"></div>
<svg style="left:0;top:0" width="750" height="485"><defs><clipPath id="gclip"><rect x="171" y="101.6" width="424.5" height="159.7"/></clipPath></defs><g clip-path="url(#gclip)"><rect x="326.4" y="96" width="81.4" height="74.3" fill="#141414"/><rect x="329" y="106.4" width="76.2" height="61" fill="#efefef"/><rect x="329" y="98" width="76.2" height="8.4" fill="#9a3a40"/><rect x="464.5" y="96" width="81.3" height="73.8" fill="#141414"/><rect x="467.2" y="105.5" width="76.3" height="61.5" fill="#ececec"/><rect x="467.2" y="98" width="76.3" height="7.5" fill="#a8a8a8"/><clipPath id="nclip"><rect x="467.2" y="105.5" width="76.3" height="61.5"/></clipPath><g clip-path="url(#nclip)"><line x1="476.5" y1="105.5" x2="476.5" y2="114" stroke="#b4b4b4" stroke-width="0.6"/><path d="M474.70 107.00 L476.5 108.50 L478.30 107.00" stroke="#a8a8a8" stroke-width="0.7" fill="none"/><path d="M474.70 110.60 L476.5 112.10 L478.30 110.60" stroke="#a8a8a8" stroke-width="0.7" fill="none"/><line x1="476.5" y1="126" x2="476.5" y2="151" stroke="#b4b4b4" stroke-width="0.6"/><path d="M474.70 127.50 L476.5 129.00 L478.30 127.50" stroke="#a8a8a8" stroke-width="0.7" fill="none"/><path d="M474.70 131.10 L476.5 132.60 L478.30 131.10" stroke="#a8a8a8" stroke-width="0.7" fill="none"/><path d="M474.70 134.70 L476.5 136.20 L478.30 134.70" stroke="#a8a8a8" stroke-width="0.7" fill="none"/><path d="M474.70 138.30 L476.5 139.80 L478.30 138.30" stroke="#a8a8a8" stroke-width="0.7" fill="none"/><path d="M474.70 141.90 L476.5 143.40 L478.30 141.90" stroke="#a8a8a8" stroke-width="0.7" fill="none"/><path d="M474.70 145.50 L476.5 147.00 L478.30 145.50" stroke="#a8a8a8" stroke-width="0.7" fill="none"/><path d="M474.70 149.10 L476.5 150.60 L478.30 149.10" stroke="#a8a8a8" stroke-width="0.7" fill="none"/><line x1="476.5" y1="163" x2="476.5" y2="167" stroke="#b4b4b4" stroke-width="0.6"/><path d="M474.70 164.50 L476.5 166.00 L478.30 164.50" stroke="#a8a8a8" stroke-width="0.7" fill="none"/><line x1="485.95" y1="105.5" x2="485.95" y2="133" stroke="#b4b4b4" stroke-width="0.6"/><path d="M484.15 107.00 L485.95 108.50 L487.75 107.00" stroke="#a8a8a8" stroke-width="0.7" fill="none"/><path d="M484.15 110.60 L485.95 112.10 L487.75 110.60" stroke="#a8a8a8" stroke-width="0.7" fill="none"/><path d="M484.15 114.20 L485.95 115.70 L487.75 114.20" stroke="#a8a8a8" stroke-width="0.7" fill="none"/><path d="M484.15 117.80 L485.95 119.30 L487.75 117.80" stroke="#a8a8a8" stroke-width="0.7" fill="none"/><path d="M484.15 121.40 L485.95 122.90 L487.75 121.40" stroke="#a8a8a8" stroke-width="0.7" fill="none"/><path d="M484.15 125.00 L485.95 126.50 L487.75 125.00" stroke="#a8a8a8" stroke-width="0.7" fill="none"/><path d="M484.15 128.60 L485.95 130.10 L487.75 128.60" stroke="#a8a8a8" stroke-width="0.7" fill="none"/><line x1="485.95" y1="145" x2="485.95" y2="167" stroke="#b4b4b4" stroke-width="0.6"/><path d="M484.15 146.50 L485.95 148.00 L487.75 146.50" stroke="#a8a8a8" stroke-width="0.7" fill="none"/><path d="M484.15 150.10 L485.95 151.60 L487.75 150.10" stroke="#a8a8a8" stroke-width="0.7" fill="none"/><path d="M484.15 153.70 L485.95 155.20 L487.75 153.70" stroke="#a8a8a8" stroke-width="0.7" fill="none"/><path d="M484.15 157.30 L485.95 158.80 L487.75 157.30" stroke="#a8a8a8" stroke-width="0.7" fill="none"/><path d="M484.15 160.90 L485.95 162.40 L487.75 160.90" stroke="#a8a8a8" stroke-width="0.7" fill="none"/><path d="M484.15 164.50 L485.95 166.00 L487.75 164.50" stroke="#a8a8a8" stroke-width="0.7" fill="none"/><line x1="495.4" y1="105.5" x2="495.4" y2="114" stroke="#b4b4b4" stroke-width="0.6"/><path d="M493.60 107.00 L495.4 108.50 L497.20 107.00" stroke="#a8a8a8" stroke-width="0.7" fill="none"/><path d="M493.60 110.60 L495.4 112.10 L497.20 110.60" stroke="#a8a8a8" stroke-width="0.7" fill="none"/><line x1="495.4" y1="126" x2="495.4" y2="151" stroke="#b4b4b4" stroke-width="0.6"/><path d="M493.60 127.50 L495.4 129.00 L497.20 127.50" stroke="#a8a8a8" stroke-width="0.7" fill="none"/><path d="M493.60 131.10 L495.4 132.60 L497.20 131.10" stroke="#a8a8a8" stroke-width="0.7" fill="none"/><path d="M493.60 134.70 L495.4 136.20 L497.20 134.70" stroke="#a8a8a8" stroke-width="0.7" fill="none"/><path d="M493.60 138.30 L495.4 139.80 L497.20 138.30" stroke="#a8a8a8" stroke-width="0.7" fill="none"/><path d="M493.60 141.90 L495.4 143.40 L497.20 141.90" stroke="#a8a8a8" stroke-width="0.7" fill="none"/><path d="M493.60 145.50 L495.4 147.00 L497.20 145.50" stroke="#a8a8a8" stroke-width="0.7" fill="none"/><path d="M493.60 149.10 L495.4 150.60 L497.20 149.10" stroke="#a8a8a8" stroke-width="0.7" fill="none"/><line x1="495.4" y1="163" x2="495.4" y2="167" stroke="#b4b4b4" stroke-width="0.6"/><path d="M493.60 164.50 L495.4 166.00 L497.20 164.50" stroke="#a8a8a8" stroke-width="0.7" fill="none"/><line x1="504.85" y1="105.5" x2="504.85" y2="133" stroke="#b4b4b4" stroke-width="0.6"/><path d="M503.05 107.00 L504.85 108.50 L506.65 107.00" stroke="#a8a8a8" stroke-width="0.7" fill="none"/><path d="M503.05 110.60 L504.85 112.10 L506.65 110.60" stroke="#a8a8a8" stroke-width="0.7" fill="none"/><path d="M503.05 114.20 L504.85 115.70 L506.65 114.20" stroke="#a8a8a8" stroke-width="0.7" fill="none"/><path d="M503.05 117.80 L504.85 119.30 L506.65 117.80" stroke="#a8a8a8" stroke-width="0.7" fill="none"/><path d="M503.05 121.40 L504.85 122.90 L506.65 121.40" stroke="#a8a8a8" stroke-width="0.7" fill="none"/><path d="M503.05 125.00 L504.85 126.50 L506.65 125.00" stroke="#a8a8a8" stroke-width="0.7" fill="none"/><path d="M503.05 128.60 L504.85 130.10 L506.65 128.60" stroke="#a8a8a8" stroke-width="0.7" fill="none"/><line x1="504.85" y1="145" x2="504.85" y2="167" stroke="#b4b4b4" stroke-width="0.6"/><path d="M503.05 146.50 L504.85 148.00 L506.65 146.50" stroke="#a8a8a8" stroke-width="0.7" fill="none"/><path d="M503.05 150.10 L504.85 151.60 L506.65 150.10" stroke="#a8a8a8" stroke-width="0.7" fill="none"/><path d="M503.05 153.70 L504.85 155.20 L506.65 153.70" stroke="#a8a8a8" stroke-width="0.7" fill="none"/><path d="M503.05 157.30 L504.85 158.80 L506.65 157.30" stroke="#a8a8a8" stroke-width="0.7" fill="none"/><path d="M503.05 160.90 L504.85 162.40 L506.65 160.90" stroke="#a8a8a8" stroke-width="0.7" fill="none"/><path d="M503.05 164.50 L504.85 166.00 L506.65 164.50" stroke="#a8a8a8" stroke-width="0.7" fill="none"/><line x1="514.3" y1="105.5" x2="514.3" y2="114" stroke="#b4b4b4" stroke-width="0.6"/><path d="M512.50 107.00 L514.3 108.50 L516.10 107.00" stroke="#a8a8a8" stroke-width="0.7" fill="none"/><path d="M512.50 110.60 L514.3 112.10 L516.10 110.60" stroke="#a8a8a8" stroke-width="0.7" fill="none"/><line x1="514.3" y1="126" x2="514.3" y2="151" stroke="#b4b4b4" stroke-width="0.6"/><path d="M512.50 127.50 L514.3 129.00 L516.10 127.50" stroke="#a8a8a8" stroke-width="0.7" fill="none"/><path d="M512.50 131.10 L514.3 132.60 L516.10 131.10" stroke="#a8a8a8" stroke-width="0.7" fill="none"/><path d="M512.50 134.70 L514.3 136.20 L516.10 134.70" stroke="#a8a8a8" stroke-width="0.7" fill="none"/><path d="M512.50 138.30 L514.3 139.80 L516.10 138.30" stroke="#a8a8a8" stroke-width="0.7" fill="none"/><path d="M512.50 141.90 L514.3 143.40 L516.10 141.90" stroke="#a8a8a8" stroke-width="0.7" fill="none"/><path d="M512.50 145.50 L514.3 147.00 L516.10 145.50" stroke="#a8a8a8" stroke-width="0.7" fill="none"/><path d="M512.50 149.10 L514.3 150.60 L516.10 149.10" stroke="#a8a8a8" stroke-width="0.7" fill="none"/><line x1="514.3" y1="163" x2="514.3" y2="167" stroke="#b4b4b4" stroke-width="0.6"/><path d="M512.50 164.50 L514.3 166.00 L516.10 164.50" stroke="#a8a8a8" stroke-width="0.7" fill="none"/><line x1="523.75" y1="105.5" x2="523.75" y2="133" stroke="#b4b4b4" stroke-width="0.6"/><path d="M521.95 107.00 L523.75 108.50 L525.55 107.00" stroke="#a8a8a8" stroke-width="0.7" fill="none"/><path d="M521.95 110.60 L523.75 112.10 L525.55 110.60" stroke="#a8a8a8" stroke-width="0.7" fill="none"/><path d="M521.95 114.20 L523.75 115.70 L525.55 114.20" stroke="#a8a8a8" stroke-width="0.7" fill="none"/><path d="M521.95 117.80 L523.75 119.30 L525.55 117.80" stroke="#a8a8a8" stroke-width="0.7" fill="none"/><path d="M521.95 121.40 L523.75 122.90 L525.55 121.40" stroke="#a8a8a8" stroke-width="0.7" fill="none"/><path d="M521.95 125.00 L523.75 126.50 L525.55 125.00" stroke="#a8a8a8" stroke-width="0.7" fill="none"/><path d="M521.95 128.60 L523.75 130.10 L525.55 128.60" stroke="#a8a8a8" stroke-width="0.7" fill="none"/><line x1="523.75" y1="145" x2="523.75" y2="167" stroke="#b4b4b4" stroke-width="0.6"/><path d="M521.95 146.50 L523.75 148.00 L525.55 146.50" stroke="#a8a8a8" stroke-width="0.7" fill="none"/><path d="M521.95 150.10 L523.75 151.60 L525.55 150.10" stroke="#a8a8a8" stroke-width="0.7" fill="none"/><path d="M521.95 153.70 L523.75 155.20 L525.55 153.70" stroke="#a8a8a8" stroke-width="0.7" fill="none"/><path d="M521.95 157.30 L523.75 158.80 L525.55 157.30" stroke="#a8a8a8" stroke-width="0.7" fill="none"/><path d="M521.95 160.90 L523.75 162.40 L525.55 160.90" stroke="#a8a8a8" stroke-width="0.7" fill="none"/><path d="M521.95 164.50 L523.75 166.00 L525.55 164.50" stroke="#a8a8a8" stroke-width="0.7" fill="none"/><line x1="533.2" y1="105.5" x2="533.2" y2="114" stroke="#b4b4b4" stroke-width="0.6"/><path d="M531.40 107.00 L533.2 108.50 L535.00 107.00" stroke="#a8a8a8" stroke-width="0.7" fill="none"/><path d="M531.40 110.60 L533.2 112.10 L535.00 110.60" stroke="#a8a8a8" stroke-width="0.7" fill="none"/><line x1="533.2" y1="126" x2="533.2" y2="151" stroke="#b4b4b4" stroke-width="0.6"/><path d="M531.40 127.50 L533.2 129.00 L535.00 127.50" stroke="#a8a8a8" stroke-width="0.7" fill="none"/><path d="M531.40 131.10 L533.2 132.60 L535.00 131.10" stroke="#a8a8a8" stroke-width="0.7" fill="none"/><path d="M531.40 134.70 L533.2 136.20 L535.00 134.70" stroke="#a8a8a8" stroke-width="0.7" fill="none"/><path d="M531.40 138.30 L533.2 139.80 L535.00 138.30" stroke="#a8a8a8" stroke-width="0.7" fill="none"/><path d="M531.40 141.90 L533.2 143.40 L535.00 141.90" stroke="#a8a8a8" stroke-width="0.7" fill="none"/><path d="M531.40 145.50 L533.2 147.00 L535.00 145.50" stroke="#a8a8a8" stroke-width="0.7" fill="none"/><path d="M531.40 149.10 L533.2 150.60 L535.00 149.10" stroke="#a8a8a8" stroke-width="0.7" fill="none"/><line x1="533.2" y1="163" x2="533.2" y2="167" stroke="#b4b4b4" stroke-width="0.6"/><path d="M531.40 164.50 L533.2 166.00 L535.00 164.50" stroke="#a8a8a8" stroke-width="0.7" fill="none"/><line x1="542.65" y1="105.5" x2="542.65" y2="133" stroke="#b4b4b4" stroke-width="0.6"/><path d="M540.85 107.00 L542.65 108.50 L544.45 107.00" stroke="#a8a8a8" stroke-width="0.7" fill="none"/><path d="M540.85 110.60 L542.65 112.10 L544.45 110.60" stroke="#a8a8a8" stroke-width="0.7" fill="none"/><path d="M540.85 114.20 L542.65 115.70 L544.45 114.20" stroke="#a8a8a8" stroke-width="0.7" fill="none"/><path d="M540.85 117.80 L542.65 119.30 L544.45 117.80" stroke="#a8a8a8" stroke-width="0.7" fill="none"/><path d="M540.85 121.40 L542.65 122.90 L544.45 121.40" stroke="#a8a8a8" stroke-width="0.7" fill="none"/><path d="M540.85 125.00 L542.65 126.50 L544.45 125.00" stroke="#a8a8a8" stroke-width="0.7" fill="none"/><path d="M540.85 128.60 L542.65 130.10 L544.45 128.60" stroke="#a8a8a8" stroke-width="0.7" fill="none"/><line x1="542.65" y1="145" x2="542.65" y2="167" stroke="#b4b4b4" stroke-width="0.6"/><path d="M540.85 146.50 L542.65 148.00 L544.45 146.50" stroke="#a8a8a8" stroke-width="0.7" fill="none"/><path d="M540.85 150.10 L542.65 151.60 L544.45 150.10" stroke="#a8a8a8" stroke-width="0.7" fill="none"/><path d="M540.85 153.70 L542.65 155.20 L544.45 153.70" stroke="#a8a8a8" stroke-width="0.7" fill="none"/><path d="M540.85 157.30 L542.65 158.80 L544.45 157.30" stroke="#a8a8a8" stroke-width="0.7" fill="none"/><path d="M540.85 160.90 L542.65 162.40 L544.45 160.90" stroke="#a8a8a8" stroke-width="0.7" fill="none"/><path d="M540.85 164.50 L542.65 166.00 L544.45 164.50" stroke="#a8a8a8" stroke-width="0.7" fill="none"/><path d="M475.68 117.21 L481.89 118.30 A7.5 7.5 0 0 1 469.68 122.75 L473.73 117.92 A1.2 1.2 0 0 0 475.68 117.21Z" fill="#7a7a7a"/><path d="M493.98 118.19 L499.14 121.80 A7.5 7.5 0 0 1 486.20 120.67 L491.91 118.01 A1.2 1.2 0 0 0 493.98 118.19Z" fill="#7a7a7a"/><path d="M509.77 117.58 L513.82 112.75 A7.5 7.5 0 0 1 511.57 125.55 L509.41 119.63 A1.2 1.2 0 0 0 509.77 117.58Z" fill="#7a7a7a"/><path d="M538.29 120.33 L536.13 126.25 A7.5 7.5 0 0 1 533.88 113.45 L537.93 118.28 A1.2 1.2 0 0 0 538.29 120.33Z" fill="#7a7a7a"/><path d="M483.00 140.30 L483.00 134.00 A7.5 7.5 0 0 1 489.50 145.25 L484.04 142.10 A1.2 1.2 0 0 0 483.00 140.30Z" fill="#7a7a7a"/><path d="M506.77 136.92 L510.82 141.75 A7.5 7.5 0 0 1 498.61 137.30 L504.82 136.21 A1.2 1.2 0 0 0 506.77 136.92Z" fill="#7a7a7a"/><path d="M521.40 141.66 L518.25 136.20 A7.5 7.5 0 0 1 529.50 142.70 L523.20 142.70 A1.2 1.2 0 0 0 521.40 141.66Z" fill="#7a7a7a"/><path d="M543.40 140.04 L540.25 145.50 A7.5 7.5 0 0 1 540.25 132.50 L543.40 137.96 A1.2 1.2 0 0 0 543.40 140.04Z" fill="#7a7a7a"/><path d="M475.13 153.59 L481.05 151.43 A7.5 7.5 0 0 1 472.70 161.39 L473.79 155.18 A1.2 1.2 0 0 0 475.13 153.59Z" fill="#7a7a7a"/><path d="M493.63 155.41 L499.55 157.57 A7.5 7.5 0 0 1 486.75 159.82 L491.58 155.77 A1.2 1.2 0 0 0 493.63 155.41Z" fill="#7a7a7a"/><path d="M510.81 157.12 L511.90 150.91 A7.5 7.5 0 0 1 516.35 163.12 L511.52 159.07 A1.2 1.2 0 0 0 510.81 157.12Z" fill="#7a7a7a"/><path d="M536.79 154.18 L535.70 160.39 A7.5 7.5 0 0 1 531.25 148.18 L536.08 152.23 A1.2 1.2 0 0 0 536.79 154.18Z" fill="#7a7a7a"/></g><path d="M405 129.6 L467.1 129.6" stroke="#a8bcd4" stroke-width="0.9"/><path d="M467.1 110.8 C455 106 448 100 440 92" stroke="#a8bcd4" stroke-width="0.9" fill="none"/><path d="M543 129.6 C565 128.5 580 121 600 112" stroke="#c8d4e0" stroke-width="0.9" fill="none"/><path d="M543 129.4 L600 129.4" stroke="#c8d4e0" stroke-width="0.8"/><path d="M400.8 201.3 C418 200.5 429 187 440 169 C448 156 455 147.5 467.1 147.5" stroke="#c4c8d0" stroke-width="2.7" fill="none"/><circle cx="404.8" cy="129.6" r="6.6" fill="#1a1a1a"/><circle cx="404.8" cy="129.6" r="4.9" fill="#c4c4c4"/><circle cx="467.1" cy="110.8" r="6.6" fill="#1a1a1a"/><circle cx="467.1" cy="110.8" r="4.9" fill="#c4c4c4"/><circle cx="467.1" cy="129.3" r="6.6" fill="#1a1a1a"/><circle cx="467.1" cy="129.3" r="4.9" fill="#c4c4c4"/><circle cx="467.1" cy="129.3" r="1.8" fill="#6a6a6a"/><circle cx="467.1" cy="147.5" r="6.6" fill="#1a1a1a"/><circle cx="467.1" cy="147.5" r="4.9" fill="#c4c4c4"/><circle cx="543" cy="129.3" r="6.6" fill="#1a1a1a"/><circle cx="543" cy="129.3" r="4.9" fill="#c4c4c4"/><circle cx="400.8" cy="201.3" r="6.2" fill="#1c1c1c"/><circle cx="400.8" cy="201.3" r="4.5" fill="#5a5a5a"/><path d="M387.2 190.6 Q374.5 202.2 387.2 213.8" stroke="#c8d0dc" stroke-width="0.8" fill="none"/><path d="M392 194.6 Q382.5 202.2 392 209.8" stroke="#c8d0dc" stroke-width="0.8" fill="none"/><path d="M479.5 209.5 L479.5 215.5 L481 214 L482.3 216.5 L483 216 L482 213.5 L484 213.5Z" fill="#fff" stroke="#222" stroke-width="0.3"/></g></svg>
<div class="t" style="left:342.4px;top:172.32px;font-size:10.4px;color:#ccd6e4;font-weight:bold;transform-origin:0 0;transform:scaleX(0.954);">32x32 - L8</div>
<div class="t" style="left:469px;top:172.32px;font-size:10.4px;color:#ccd6e4;font-weight:bold;transform-origin:0 0;transform:scaleX(0.991);">2048x2048 - L8</div>
<svg style="left:309px;top:199.5px" width="11" height="5"><path d="M0.5 2.5 H9.5 M7.5 1 L9.6 2.5 L7.5 4" stroke="#b8c6d8" stroke-width="0.6" fill="none"/></svg>
<div class="t" style="left:321.6px;top:197.50px;font-size:10px;color:#c0ccdc;transform-origin:0 0;transform:scaleX(0.917);">Motif_Switch</div>
<div class="a" style="left:171px;top:262px;width:216px;height:9px;background:#2c2c2c;"></div>
<svg style="left:173px;top:264.2px" width="6" height="6"><circle cx="3" cy="3" r="2.8" fill="#ddd"/><path d="M3 3 L3 5.8 M3 3 L0.6 1.6 M3 3 L5.4 1.6" stroke="#2c2c2c" stroke-width="0.7"/></svg>
<div class="t" style="left:182px;top:265.17px;font-size:5.4px;color:#cfcfcf;font-weight:bold;transform-origin:0 0;transform:scaleX(0.934);">Cloth - OpenGL - 3D VIEW</div>
<svg style="left:348.1px;top:264.5px" width="5" height="5"><path d="M4.5 0.5 L2 3 L0.5 4.5" stroke="#ccc" stroke-width="1"/><path d="M2.5 0.8 L4.2 2.5 L2.5 3.2 L1.8 2.5Z" fill="#ccc"/></svg>
<svg style="left:358.5px;top:264.5px" width="5" height="5"><rect x="0.4" y="0.4" width="4.2" height="4.2" fill="none" stroke="#bbb" stroke-width="0.6"/><rect x="0.6" y="2.2" width="2.2" height="2.2" fill="#ddd"/><path d="M2.5 2.5 L4.2 0.8" stroke="#ddd" stroke-width="0.6"/></svg>
<svg style="left:367.7px;top:264px" width="6" height="6"><path d="M0.5 0.5L5.5 5.5M5.5 0.5L0.5 5.5" stroke="#ccc" stroke-width="0.8"/><circle cx="3" cy="3" r="1.1" fill="#eee"/></svg>
<svg style="left:378.6px;top:264.8px" width="5" height="5"><path d="M0.4 0.4L4 4M4 0.4L0.4 4" stroke="#aaa" stroke-width="0.8"/></svg>
<div class="a" style="left:171px;top:271px;width:216px;height:10px;background:#2f2f2f;"></div>
<div class="t" style="left:175.3px;top:274.25px;font-size:5px;color:#b0b0b0;transform-origin:0 0;transform:scaleX(0.931);">Scene</div>
<div class="t" style="left:194.7px;top:274.25px;font-size:5px;color:#b0b0b0;transform-origin:0 0;transform:scaleX(0.912);">Materials</div>
<div class="t" style="left:220.6px;top:274.25px;font-size:5px;color:#b0b0b0;transform-origin:0 0;transform:scaleX(0.929);">Lights</div>
<div class="t" style="left:240.4px;top:274.25px;font-size:5px;color:#b0b0b0;transform-origin:0 0;transform:scaleX(0.860);">Camera</div>
<div class="t" style="left:263.1px;top:274.25px;font-size:5px;color:#b0b0b0;transform-origin:0 0;transform:scaleX(0.912);">Environment</div>
<div class="t" style="left:296px;top:274.25px;font-size:5px;color:#b0b0b0;transform-origin:0 0;transform:scaleX(0.884);">Display</div>
<div class="t" style="left:318.3px;top:274.25px;font-size:5px;color:#b0b0b0;transform-origin:0 0;transform:scaleX(0.912);">Renderer</div>
<div class="a" style="left:171px;top:281px;width:216px;height:169.5px;background:#2e2e2e;"></div>
<div class="a" style="left:182.7px;top:281.2px;width:203px;height:158px;background:#1e1e1e;"></div>
<div class="a" style="left:171.5px;top:287.2px;width:10.5px;height:9.2px;background:#505050;"></div>
<div class="a" style="left:171.5px;top:316.7px;width:10.5px;height:8.3px;background:#505050;"></div>
<div class="a" style="left:171.5px;top:352.2px;width:10.5px;height:9.9px;background:#474747;"></div>
<div class="a" style="left:172px;top:330px;width:10px;height:0.6px;background:#444;"></div>
<div class="a" style="left:172px;top:402.6px;width:10px;height:0.6px;background:#444;"></div>
<svg style="left:173.3px;top:288.3px" width="7" height="7"><rect x="0.5" y="1.5" width="4.5" height="4" fill="#ddd"/><path d="M5 2.8 L6.7 1.8 V5.2 L5 4.2Z" fill="#ddd"/></svg>
<svg style="left:173.3px;top:298.5px" width="7" height="7"><circle cx="3.5" cy="2.8" r="2.2" fill="#ddd"/><rect x="2.6" y="4.6" width="1.8" height="1.8" fill="#ccc"/></svg>
<svg style="left:173.3px;top:307.5px" width="7" height="7"><rect x="0.5" y="1.2" width="6" height="4.8" fill="none" stroke="#ccc" stroke-width="0.6"/><path d="M0.8 5.8 L2.8 3.2 L4.3 4.6 L5.2 3.8 L6.3 5.8Z" fill="#ddd"/></svg>
<svg style="left:173.3px;top:317.5px" width="7" height="7"><rect x="0.6" y="0.9" width="5.8" height="5.2" fill="none" stroke="#ddd" stroke-width="0.8"/><circle cx="3.5" cy="3.5" r="1.2" fill="#ddd"/></svg>
<svg style="left:173.3px;top:333.0px" width="7" height="7"><rect x="0.7" y="0.7" width="5.6" height="5.6" fill="none" stroke="#bbb" stroke-width="0.6"/><path d="M3.5 0.7 V6.3 M0.7 3.5 H6.3" stroke="#bbb" stroke-width="0.5"/></svg>
<svg style="left:173.3px;top:343.8px" width="7" height="7"><path d="M3.2 0.5 V4 L0.6 6.2 M3.2 4 L6.4 5.6" stroke="#bbb" stroke-width="0.8" fill="none"/></svg>
<svg style="left:173.3px;top:353.7px" width="7" height="7"><circle cx="3.5" cy="3.5" r="2.8" fill="none" stroke="#bbb" stroke-width="0.7"/><circle cx="3.5" cy="3.5" r="1.2" fill="#bbb"/></svg>
<svg style="left:173.3px;top:363.5px" width="7" height="7"><path d="M3.5 0.4 L6.4 2 V5 L3.5 6.6 L0.6 5 V2Z" fill="none" stroke="#ccc" stroke-width="0.7"/><path d="M0.6 2 L3.5 3.6 L6.4 2 M3.5 3.6 V6.6" stroke="#ccc" stroke-width="0.5" fill="none"/></svg>
<svg style="left:173.3px;top:374.3px" width="7" height="7"><path d="M3.5 1 L6.5 3.5 L3.5 6 L0.5 3.5Z" fill="#999"/></svg>
<svg style="left:173.3px;top:383.4px" width="7" height="7"><path d="M0.8 4 L2.6 5.8 L6.2 1" stroke="#aaa" stroke-width="0.8" fill="none"/></svg>
<svg style="left:173.3px;top:393.3px" width="7" height="7"><rect x="0.6" y="3.5" width="1.4" height="3" fill="#ccc"/><rect x="2.8" y="0.8" width="1.4" height="5.7" fill="#ccc"/><rect x="5" y="2.4" width="1.4" height="4.1" fill="#ccc"/></svg>
<div class="a" style="left:174.5px;top:432px;width:4px;height:4px;background:#bbb;"></div>
<div class="a" style="left:175.4px;top:441.3px;width:60.6px;height:8.3px;background:#262626;border:0.5px solid #3a3a3a"></div>
<svg style="left:178.5px;top:442.8px" width="6" height="6"><rect x="0.2" y="0" width="5.4" height="1.5" fill="#d85050"/><rect x="0.2" y="1.5" width="5.4" height="1.5" fill="#e0a040"/><rect x="0.2" y="3" width="5.4" height="1.5" fill="#50a050"/><rect x="0.2" y="4.5" width="5.4" height="1.5" fill="#4070c0"/></svg>
<div class="t" style="left:188.7px;top:442.75px;font-size:5px;color:#b4b4b4;transform-origin:0 0;transform:scaleX(0.850);">sRGB (default)</div>
<svg style="left:229.8px;top:444.3px" width="4" height="3"><path d="M0.3 0.5 L2 2.3 L3.7 0.5" stroke="#aaa" stroke-width="0.7" fill="none"/></svg>
<div class="a" style="left:387px;top:262px;width:1.2px;height:188.5px;background:#4a4a4a;"></div>
<svg style="left:0;top:0" width="750" height="485"><defs>
<radialGradient id="cg" cx="0.5" cy="0.15" r="0.95"><stop offset="0" stop-color="#40508a"/><stop offset="0.5" stop-color="#323f6c"/><stop offset="1" stop-color="#242d55"/></radialGradient>
<clipPath id="cloth"><path d="M275 305.1 C278.10 304.62 278.00 304.87 281.5 305.1 C285.00 305.33 291.18 305.53 296 306.5 C300.82 307.47 306.08 308.97 310.4 310.9 C314.72 312.83 318.30 315.47 321.9 318.1 C325.50 320.73 329.12 323.58 332 326.7 C334.88 329.82 337.03 332.95 339.2 336.8 C341.37 340.65 343.32 345.60 345 349.8 C346.68 354.00 348.33 358.80 349.3 362 C350.27 365.20 351.35 366.50 350.8 369 C350.25 371.50 347.37 374.42 346 377 C344.63 379.58 343.28 381.90 342.6 384.5 C341.92 387.10 341.90 389.27 341.9 392.6 C341.90 395.93 343.08 401.78 342.6 404.5 C342.12 407.22 341.60 407.42 339 408.9 C336.40 410.38 331.22 412.15 327 413.4 C322.78 414.65 318.20 415.30 313.7 416.4 C309.20 417.50 304.62 419.65 300 420 C295.38 420.35 290.67 418.67 286 418.5 C281.33 418.33 276.62 418.35 272 419 C267.38 419.65 262.07 420.85 258.3 422.4 C254.53 423.95 251.63 427.82 249.4 428.3 C247.17 428.78 246.13 426.78 244.9 425.3 C243.67 423.82 245.47 420.88 242 419.4 C238.53 417.92 228.32 418.13 224.1 416.4 C219.88 414.67 218.02 412.98 216.7 409 C215.38 405.02 218.15 396.50 216.2 392.5 C214.25 388.50 208.62 387.20 205 385 C201.38 382.80 195.50 381.80 194.5 379.3 C193.50 376.80 197.33 373.22 199 370 C200.67 366.78 202.67 363.25 204.5 360 C206.33 356.75 207.97 353.92 210 350.5 C212.03 347.08 214.13 343.22 216.7 339.5 C219.27 335.78 222.03 331.53 225.4 328.2 C228.77 324.87 232.58 322.15 236.9 319.5 C241.22 316.85 246.97 314.22 251.3 312.3 C255.63 310.38 258.95 309.20 262.9 308 C266.85 306.80 271.90 305.58 275 305.1Z"/></clipPath>
<filter id="bl" x="-20%" y="-20%" width="140%" height="140%"><feGaussianBlur stdDeviation="1.8"/></filter>
</defs><g clip-path="url(#cloth)"><rect x="190" y="300" width="170" height="135" fill="url(#cg)"/><g filter="url(#bl)"><path d="M192 378 L218 392 L216 412 L226 420 L240 422 L200 430Z" fill="#1c2450" opacity="0.6"/><path d="M218 336 C217 360 216 385 217 410 L225 414 C224 388 224 360 226 334Z" fill="#1a2250" opacity="0.85"/><path d="M244 372 C242 395 242 410 244 424 L250 428 C249 410 249 390 250 370Z" fill="#1c2450" opacity="0.6"/><path d="M350 370 L343 386 L342 405 L336 410 L330 405 L338 385Z" fill="#1a2250" opacity="0.45"/><path d="M300 404 C296 410 292 416 290 422 L300 423 C303 415 306 410 309 402Z" fill="#1c2450" opacity="0.7"/><path d="M200 310 C240 300 300 300 330 320 L320 312 C290 300 240 300 205 315Z" fill="#8a96b8" opacity="0.5"/><ellipse cx="290" cy="335" rx="34" ry="22" fill="#4e5e94" opacity="0.45"/></g><g filter="url(#bl)"><path d="M252 312 C250 350 248 390 246 424 L258 422 C259 390 261 350 264 309Z" fill="#1e2650" opacity="0.55"/></g><path d="M265 307 C263 345 260 385 258 422" stroke="#56669a" stroke-width="0.9" fill="none" opacity="0.7"/><line x1="282.5" y1="341.1" x2="326.5" y2="329.3" stroke="#b4b6a6" stroke-width="0.9"/><ellipse cx="286.87" cy="341.67" rx="2.1" ry="0.8" transform="rotate(115.0 286.87 341.67)" fill="#d0d2c2"/><ellipse cx="286.00" cy="338.42" rx="2.1" ry="0.8" transform="rotate(215.0 286.00 338.42)" fill="#d0d2c2"/><ellipse cx="292.17" cy="340.25" rx="2.1" ry="0.8" transform="rotate(115.0 292.17 340.25)" fill="#d0d2c2"/><ellipse cx="291.30" cy="337.00" rx="2.1" ry="0.8" transform="rotate(215.0 291.30 337.00)" fill="#d0d2c2"/><ellipse cx="297.47" cy="338.83" rx="2.1" ry="0.8" transform="rotate(115.0 297.47 338.83)" fill="#d0d2c2"/><ellipse cx="296.60" cy="335.57" rx="2.1" ry="0.8" transform="rotate(215.0 296.60 335.57)" fill="#d0d2c2"/><ellipse cx="302.78" cy="337.41" rx="2.1" ry="0.8" transform="rotate(115.0 302.78 337.41)" fill="#d0d2c2"/><ellipse cx="301.90" cy="334.15" rx="2.1" ry="0.8" transform="rotate(215.0 301.90 334.15)" fill="#d0d2c2"/><ellipse cx="308.08" cy="335.99" rx="2.1" ry="0.8" transform="rotate(115.0 308.08 335.99)" fill="#d0d2c2"/><ellipse cx="307.20" cy="332.73" rx="2.1" ry="0.8" transform="rotate(215.0 307.20 332.73)" fill="#d0d2c2"/><ellipse cx="313.38" cy="334.56" rx="2.1" ry="0.8" transform="rotate(115.0 313.38 334.56)" fill="#d0d2c2"/><ellipse cx="312.50" cy="331.31" rx="2.1" ry="0.8" transform="rotate(215.0 312.50 331.31)" fill="#d0d2c2"/><ellipse cx="318.68" cy="333.14" rx="2.1" ry="0.8" transform="rotate(115.0 318.68 333.14)" fill="#d0d2c2"/><ellipse cx="317.81" cy="329.89" rx="2.1" ry="0.8" transform="rotate(215.0 317.81 329.89)" fill="#d0d2c2"/><ellipse cx="323.98" cy="331.72" rx="2.1" ry="0.8" transform="rotate(115.0 323.98 331.72)" fill="#d0d2c2"/><ellipse cx="323.11" cy="328.47" rx="2.1" ry="0.8" transform="rotate(215.0 323.11 328.47)" fill="#d0d2c2"/><line x1="269.3" y1="320.5" x2="288.4" y2="317.6" stroke="#b4b6a6" stroke-width="0.9"/><ellipse cx="273.94" cy="321.50" rx="2.1" ry="0.8" transform="rotate(121.4 273.94 321.50)" fill="#d0d2c2"/><ellipse cx="273.44" cy="318.17" rx="2.1" ry="0.8" transform="rotate(221.4 273.44 318.17)" fill="#d0d2c2"/><ellipse cx="279.73" cy="320.62" rx="2.1" ry="0.8" transform="rotate(121.4 279.73 320.62)" fill="#d0d2c2"/><ellipse cx="279.22" cy="317.29" rx="2.1" ry="0.8" transform="rotate(221.4 279.22 317.29)" fill="#d0d2c2"/><ellipse cx="285.52" cy="319.74" rx="2.1" ry="0.8" transform="rotate(121.4 285.52 319.74)" fill="#d0d2c2"/><ellipse cx="285.01" cy="316.41" rx="2.1" ry="0.8" transform="rotate(221.4 285.01 316.41)" fill="#d0d2c2"/><line x1="252" y1="372.5" x2="304.5" y2="354.3" stroke="#b4b6a6" stroke-width="0.9"/><ellipse cx="256.31" cy="372.79" rx="2.1" ry="0.8" transform="rotate(110.9 256.31 372.79)" fill="#d0d2c2"/><ellipse cx="255.21" cy="369.60" rx="2.1" ry="0.8" transform="rotate(210.9 255.21 369.60)" fill="#d0d2c2"/><ellipse cx="261.41" cy="371.02" rx="2.1" ry="0.8" transform="rotate(110.9 261.41 371.02)" fill="#d0d2c2"/><ellipse cx="260.31" cy="367.84" rx="2.1" ry="0.8" transform="rotate(210.9 260.31 367.84)" fill="#d0d2c2"/><ellipse cx="266.51" cy="369.25" rx="2.1" ry="0.8" transform="rotate(110.9 266.51 369.25)" fill="#d0d2c2"/><ellipse cx="265.40" cy="366.07" rx="2.1" ry="0.8" transform="rotate(210.9 265.40 366.07)" fill="#d0d2c2"/><ellipse cx="271.60" cy="367.49" rx="2.1" ry="0.8" transform="rotate(110.9 271.60 367.49)" fill="#d0d2c2"/><ellipse cx="270.50" cy="364.30" rx="2.1" ry="0.8" transform="rotate(210.9 270.50 364.30)" fill="#d0d2c2"/><ellipse cx="276.70" cy="365.72" rx="2.1" ry="0.8" transform="rotate(110.9 276.70 365.72)" fill="#d0d2c2"/><ellipse cx="275.60" cy="362.54" rx="2.1" ry="0.8" transform="rotate(210.9 275.60 362.54)" fill="#d0d2c2"/><ellipse cx="281.80" cy="363.95" rx="2.1" ry="0.8" transform="rotate(110.9 281.80 363.95)" fill="#d0d2c2"/><ellipse cx="280.69" cy="360.77" rx="2.1" ry="0.8" transform="rotate(210.9 280.69 360.77)" fill="#d0d2c2"/><ellipse cx="286.90" cy="362.19" rx="2.1" ry="0.8" transform="rotate(110.9 286.90 362.19)" fill="#d0d2c2"/><ellipse cx="285.79" cy="359.00" rx="2.1" ry="0.8" transform="rotate(210.9 285.79 359.00)" fill="#d0d2c2"/><ellipse cx="291.99" cy="360.42" rx="2.1" ry="0.8" transform="rotate(110.9 291.99 360.42)" fill="#d0d2c2"/><ellipse cx="290.89" cy="357.23" rx="2.1" ry="0.8" transform="rotate(210.9 290.89 357.23)" fill="#d0d2c2"/><ellipse cx="297.09" cy="358.65" rx="2.1" ry="0.8" transform="rotate(110.9 297.09 358.65)" fill="#d0d2c2"/><ellipse cx="295.99" cy="355.47" rx="2.1" ry="0.8" transform="rotate(210.9 295.99 355.47)" fill="#d0d2c2"/><ellipse cx="302.19" cy="356.89" rx="2.1" ry="0.8" transform="rotate(110.9 302.19 356.89)" fill="#d0d2c2"/><ellipse cx="301.08" cy="353.70" rx="2.1" ry="0.8" transform="rotate(210.9 301.08 353.70)" fill="#d0d2c2"/><line x1="242.9" y1="367.5" x2="256.1" y2="339.6" stroke="#b4b6a6" stroke-width="0.9"/><ellipse cx="246.31" cy="364.23" rx="2.1" ry="0.8" transform="rotate(65.3 246.31 364.23)" fill="#d0d2c2"/><ellipse cx="243.26" cy="362.79" rx="2.1" ry="0.8" transform="rotate(165.3 243.26 362.79)" fill="#d0d2c2"/><ellipse cx="248.80" cy="358.97" rx="2.1" ry="0.8" transform="rotate(65.3 248.80 358.97)" fill="#d0d2c2"/><ellipse cx="245.75" cy="357.53" rx="2.1" ry="0.8" transform="rotate(165.3 245.75 357.53)" fill="#d0d2c2"/><ellipse cx="251.29" cy="353.71" rx="2.1" ry="0.8" transform="rotate(65.3 251.29 353.71)" fill="#d0d2c2"/><ellipse cx="248.24" cy="352.27" rx="2.1" ry="0.8" transform="rotate(165.3 248.24 352.27)" fill="#d0d2c2"/><ellipse cx="253.78" cy="348.44" rx="2.1" ry="0.8" transform="rotate(65.3 253.78 348.44)" fill="#d0d2c2"/><ellipse cx="250.73" cy="347.00" rx="2.1" ry="0.8" transform="rotate(165.3 250.73 347.00)" fill="#d0d2c2"/><ellipse cx="256.27" cy="343.18" rx="2.1" ry="0.8" transform="rotate(65.3 256.27 343.18)" fill="#d0d2c2"/><ellipse cx="253.22" cy="341.74" rx="2.1" ry="0.8" transform="rotate(165.3 253.22 341.74)" fill="#d0d2c2"/><line x1="322.1" y1="352.8" x2="333.9" y2="348.4" stroke="#b4b6a6" stroke-width="0.9"/><ellipse cx="326.49" cy="352.96" rx="2.1" ry="0.8" transform="rotate(109.6 326.49 352.96)" fill="#d0d2c2"/><ellipse cx="325.32" cy="349.80" rx="2.1" ry="0.8" transform="rotate(209.6 325.32 349.80)" fill="#d0d2c2"/><ellipse cx="331.62" cy="351.05" rx="2.1" ry="0.8" transform="rotate(109.6 331.62 351.05)" fill="#d0d2c2"/><ellipse cx="330.45" cy="347.89" rx="2.1" ry="0.8" transform="rotate(209.6 330.45 347.89)" fill="#d0d2c2"/><line x1="240" y1="329" x2="248.8" y2="317.6" stroke="#b4b6a6" stroke-width="0.9"/><ellipse cx="244.30" cy="326.19" rx="2.1" ry="0.8" transform="rotate(77.7 244.30 326.19)" fill="#d0d2c2"/><ellipse cx="241.63" cy="324.13" rx="2.1" ry="0.8" transform="rotate(177.7 241.63 324.13)" fill="#d0d2c2"/><ellipse cx="248.12" cy="321.24" rx="2.1" ry="0.8" transform="rotate(77.7 248.12 321.24)" fill="#d0d2c2"/><ellipse cx="245.45" cy="319.18" rx="2.1" ry="0.8" transform="rotate(177.7 245.45 319.18)" fill="#d0d2c2"/><line x1="237.5" y1="388.2" x2="252" y2="345" stroke="#b4b6a6" stroke-width="0.9"/><ellipse cx="240.39" cy="384.87" rx="2.1" ry="0.8" transform="rotate(58.6 240.39 384.87)" fill="#d0d2c2"/><ellipse cx="237.20" cy="383.80" rx="2.1" ry="0.8" transform="rotate(158.6 237.20 383.80)" fill="#d0d2c2"/><ellipse cx="242.14" cy="379.67" rx="2.1" ry="0.8" transform="rotate(58.6 242.14 379.67)" fill="#d0d2c2"/><ellipse cx="238.95" cy="378.59" rx="2.1" ry="0.8" transform="rotate(158.6 238.95 378.59)" fill="#d0d2c2"/><ellipse cx="243.89" cy="374.46" rx="2.1" ry="0.8" transform="rotate(58.6 243.89 374.46)" fill="#d0d2c2"/><ellipse cx="240.69" cy="373.39" rx="2.1" ry="0.8" transform="rotate(158.6 240.69 373.39)" fill="#d0d2c2"/><ellipse cx="245.64" cy="369.26" rx="2.1" ry="0.8" transform="rotate(58.6 245.64 369.26)" fill="#d0d2c2"/><ellipse cx="242.44" cy="368.19" rx="2.1" ry="0.8" transform="rotate(158.6 242.44 368.19)" fill="#d0d2c2"/><ellipse cx="247.38" cy="364.05" rx="2.1" ry="0.8" transform="rotate(58.6 247.38 364.05)" fill="#d0d2c2"/><ellipse cx="244.19" cy="362.98" rx="2.1" ry="0.8" transform="rotate(158.6 244.19 362.98)" fill="#d0d2c2"/><ellipse cx="249.13" cy="358.85" rx="2.1" ry="0.8" transform="rotate(58.6 249.13 358.85)" fill="#d0d2c2"/><ellipse cx="245.93" cy="357.78" rx="2.1" ry="0.8" transform="rotate(158.6 245.93 357.78)" fill="#d0d2c2"/><ellipse cx="250.88" cy="353.64" rx="2.1" ry="0.8" transform="rotate(58.6 250.88 353.64)" fill="#d0d2c2"/><ellipse cx="247.68" cy="352.57" rx="2.1" ry="0.8" transform="rotate(158.6 247.68 352.57)" fill="#d0d2c2"/><ellipse cx="252.62" cy="348.44" rx="2.1" ry="0.8" transform="rotate(58.6 252.62 348.44)" fill="#d0d2c2"/><ellipse cx="249.43" cy="347.37" rx="2.1" ry="0.8" transform="rotate(158.6 249.43 347.37)" fill="#d0d2c2"/><line x1="244.9" y1="426.8" x2="255.3" y2="388.2" stroke="#b4b6a6" stroke-width="0.9"/><ellipse cx="247.58" cy="423.32" rx="2.1" ry="0.8" transform="rotate(55.1 247.58 423.32)" fill="#d0d2c2"/><ellipse cx="244.33" cy="422.44" rx="2.1" ry="0.8" transform="rotate(155.1 244.33 422.44)" fill="#d0d2c2"/><ellipse cx="249.01" cy="418.03" rx="2.1" ry="0.8" transform="rotate(55.1 249.01 418.03)" fill="#d0d2c2"/><ellipse cx="245.75" cy="417.15" rx="2.1" ry="0.8" transform="rotate(155.1 245.75 417.15)" fill="#d0d2c2"/><ellipse cx="250.43" cy="412.74" rx="2.1" ry="0.8" transform="rotate(55.1 250.43 412.74)" fill="#d0d2c2"/><ellipse cx="247.18" cy="411.86" rx="2.1" ry="0.8" transform="rotate(155.1 247.18 411.86)" fill="#d0d2c2"/><ellipse cx="251.86" cy="407.45" rx="2.1" ry="0.8" transform="rotate(55.1 251.86 407.45)" fill="#d0d2c2"/><ellipse cx="248.60" cy="406.58" rx="2.1" ry="0.8" transform="rotate(155.1 248.60 406.58)" fill="#d0d2c2"/><ellipse cx="253.28" cy="402.17" rx="2.1" ry="0.8" transform="rotate(55.1 253.28 402.17)" fill="#d0d2c2"/><ellipse cx="250.03" cy="401.29" rx="2.1" ry="0.8" transform="rotate(155.1 250.03 401.29)" fill="#d0d2c2"/><ellipse cx="254.71" cy="396.88" rx="2.1" ry="0.8" transform="rotate(55.1 254.71 396.88)" fill="#d0d2c2"/><ellipse cx="251.45" cy="396.00" rx="2.1" ry="0.8" transform="rotate(155.1 251.45 396.00)" fill="#d0d2c2"/><ellipse cx="256.13" cy="391.59" rx="2.1" ry="0.8" transform="rotate(55.1 256.13 391.59)" fill="#d0d2c2"/><ellipse cx="252.88" cy="390.71" rx="2.1" ry="0.8" transform="rotate(155.1 252.88 390.71)" fill="#d0d2c2"/><line x1="262.7" y1="403" x2="277.6" y2="389.7" stroke="#b4b6a6" stroke-width="0.9"/><ellipse cx="267.28" cy="401.17" rx="2.1" ry="0.8" transform="rotate(88.2 267.28 401.17)" fill="#d0d2c2"/><ellipse cx="265.04" cy="398.65" rx="2.1" ry="0.8" transform="rotate(188.2 265.04 398.65)" fill="#d0d2c2"/><ellipse cx="271.80" cy="397.14" rx="2.1" ry="0.8" transform="rotate(88.2 271.80 397.14)" fill="#d0d2c2"/><ellipse cx="269.55" cy="394.62" rx="2.1" ry="0.8" transform="rotate(188.2 269.55 394.62)" fill="#d0d2c2"/><ellipse cx="276.31" cy="393.11" rx="2.1" ry="0.8" transform="rotate(88.2 276.31 393.11)" fill="#d0d2c2"/><ellipse cx="274.07" cy="390.59" rx="2.1" ry="0.8" transform="rotate(188.2 274.07 390.59)" fill="#d0d2c2"/><line x1="282" y1="415" x2="300" y2="407.5" stroke="#b4b6a6" stroke-width="0.9"/><ellipse cx="286.80" cy="414.83" rx="2.1" ry="0.8" transform="rotate(107.4 286.80 414.83)" fill="#d0d2c2"/><ellipse cx="285.50" cy="411.72" rx="2.1" ry="0.8" transform="rotate(207.4 285.50 411.72)" fill="#d0d2c2"/><ellipse cx="292.25" cy="412.55" rx="2.1" ry="0.8" transform="rotate(107.4 292.25 412.55)" fill="#d0d2c2"/><ellipse cx="290.96" cy="409.44" rx="2.1" ry="0.8" transform="rotate(207.4 290.96 409.44)" fill="#d0d2c2"/><ellipse cx="297.71" cy="410.28" rx="2.1" ry="0.8" transform="rotate(107.4 297.71 410.28)" fill="#d0d2c2"/><ellipse cx="296.41" cy="407.17" rx="2.1" ry="0.8" transform="rotate(207.4 296.41 407.17)" fill="#d0d2c2"/><line x1="204.8" y1="368.9" x2="209.3" y2="360" stroke="#b4b6a6" stroke-width="0.9"/><ellipse cx="209.13" cy="364.08" rx="2.1" ry="0.8" transform="rotate(66.8 209.13 364.08)" fill="#d0d2c2"/><ellipse cx="206.12" cy="362.56" rx="2.1" ry="0.8" transform="rotate(166.8 206.12 362.56)" fill="#d0d2c2"/><line x1="296" y1="384.5" x2="330" y2="371.9" stroke="#b4b6a6" stroke-width="0.9"/><ellipse cx="300.66" cy="384.57" rx="2.1" ry="0.8" transform="rotate(109.7 300.66 384.57)" fill="#d0d2c2"/><ellipse cx="299.49" cy="381.41" rx="2.1" ry="0.8" transform="rotate(209.7 299.49 381.41)" fill="#d0d2c2"/><ellipse cx="306.05" cy="382.57" rx="2.1" ry="0.8" transform="rotate(109.7 306.05 382.57)" fill="#d0d2c2"/><ellipse cx="304.88" cy="379.41" rx="2.1" ry="0.8" transform="rotate(209.7 304.88 379.41)" fill="#d0d2c2"/><ellipse cx="311.45" cy="380.57" rx="2.1" ry="0.8" transform="rotate(109.7 311.45 380.57)" fill="#d0d2c2"/><ellipse cx="310.28" cy="377.41" rx="2.1" ry="0.8" transform="rotate(209.7 310.28 377.41)" fill="#d0d2c2"/><ellipse cx="316.85" cy="378.57" rx="2.1" ry="0.8" transform="rotate(109.7 316.85 378.57)" fill="#d0d2c2"/><ellipse cx="315.68" cy="375.41" rx="2.1" ry="0.8" transform="rotate(209.7 315.68 375.41)" fill="#d0d2c2"/><ellipse cx="322.24" cy="376.57" rx="2.1" ry="0.8" transform="rotate(109.7 322.24 376.57)" fill="#d0d2c2"/><ellipse cx="321.07" cy="373.41" rx="2.1" ry="0.8" transform="rotate(209.7 321.07 373.41)" fill="#d0d2c2"/><ellipse cx="327.64" cy="374.57" rx="2.1" ry="0.8" transform="rotate(109.7 327.64 374.57)" fill="#d0d2c2"/><ellipse cx="326.47" cy="371.41" rx="2.1" ry="0.8" transform="rotate(209.7 326.47 371.41)" fill="#d0d2c2"/><line x1="313.7" y1="392.6" x2="341.9" y2="385.2" stroke="#b4b6a6" stroke-width="0.9"/><ellipse cx="318.08" cy="393.19" rx="2.1" ry="0.8" transform="rotate(115.3 318.08 393.19)" fill="#d0d2c2"/><ellipse cx="317.23" cy="389.93" rx="2.1" ry="0.8" transform="rotate(215.3 317.23 389.93)" fill="#d0d2c2"/><ellipse cx="323.40" cy="391.80" rx="2.1" ry="0.8" transform="rotate(115.3 323.40 391.80)" fill="#d0d2c2"/><ellipse cx="322.55" cy="388.54" rx="2.1" ry="0.8" transform="rotate(215.3 322.55 388.54)" fill="#d0d2c2"/><ellipse cx="328.72" cy="390.40" rx="2.1" ry="0.8" transform="rotate(115.3 328.72 390.40)" fill="#d0d2c2"/><ellipse cx="327.87" cy="387.14" rx="2.1" ry="0.8" transform="rotate(215.3 327.87 387.14)" fill="#d0d2c2"/><ellipse cx="334.04" cy="389.00" rx="2.1" ry="0.8" transform="rotate(115.3 334.04 389.00)" fill="#d0d2c2"/><ellipse cx="333.19" cy="385.74" rx="2.1" ry="0.8" transform="rotate(215.3 333.19 385.74)" fill="#d0d2c2"/><ellipse cx="339.36" cy="387.61" rx="2.1" ry="0.8" transform="rotate(115.3 339.36 387.61)" fill="#d0d2c2"/><ellipse cx="338.51" cy="384.35" rx="2.1" ry="0.8" transform="rotate(215.3 338.51 384.35)" fill="#d0d2c2"/><line x1="290" y1="413.4" x2="324.1" y2="404.5" stroke="#b4b6a6" stroke-width="0.9"/><ellipse cx="294.47" cy="413.98" rx="2.1" ry="0.8" transform="rotate(115.4 294.47 413.98)" fill="#d0d2c2"/><ellipse cx="293.62" cy="410.71" rx="2.1" ry="0.8" transform="rotate(215.4 293.62 410.71)" fill="#d0d2c2"/><ellipse cx="299.88" cy="412.56" rx="2.1" ry="0.8" transform="rotate(115.4 299.88 412.56)" fill="#d0d2c2"/><ellipse cx="299.03" cy="409.30" rx="2.1" ry="0.8" transform="rotate(215.4 299.03 409.30)" fill="#d0d2c2"/><ellipse cx="305.30" cy="411.15" rx="2.1" ry="0.8" transform="rotate(115.4 305.30 411.15)" fill="#d0d2c2"/><ellipse cx="304.44" cy="407.89" rx="2.1" ry="0.8" transform="rotate(215.4 304.44 407.89)" fill="#d0d2c2"/><ellipse cx="310.71" cy="409.74" rx="2.1" ry="0.8" transform="rotate(115.4 310.71 409.74)" fill="#d0d2c2"/><ellipse cx="309.86" cy="406.48" rx="2.1" ry="0.8" transform="rotate(215.4 309.86 406.48)" fill="#d0d2c2"/><ellipse cx="316.12" cy="408.32" rx="2.1" ry="0.8" transform="rotate(115.4 316.12 408.32)" fill="#d0d2c2"/><ellipse cx="315.27" cy="405.06" rx="2.1" ry="0.8" transform="rotate(215.4 315.27 405.06)" fill="#d0d2c2"/><ellipse cx="321.53" cy="406.91" rx="2.1" ry="0.8" transform="rotate(115.4 321.53 406.91)" fill="#d0d2c2"/><ellipse cx="320.68" cy="403.65" rx="2.1" ry="0.8" transform="rotate(215.4 320.68 403.65)" fill="#d0d2c2"/><line x1="339" y1="368.2" x2="350.8" y2="368.9" stroke="#b4b6a6" stroke-width="0.9"/><ellipse cx="342.62" cy="370.10" rx="2.1" ry="0.8" transform="rotate(133.4 342.62 370.10)" fill="#d0d2c2"/><ellipse cx="342.82" cy="366.74" rx="2.1" ry="0.8" transform="rotate(233.4 342.82 366.74)" fill="#d0d2c2"/><ellipse cx="347.75" cy="370.41" rx="2.1" ry="0.8" transform="rotate(133.4 347.75 370.41)" fill="#d0d2c2"/><ellipse cx="347.95" cy="367.04" rx="2.1" ry="0.8" transform="rotate(233.4 347.95 367.04)" fill="#d0d2c2"/><line x1="211" y1="378.6" x2="222.5" y2="351.2" stroke="#b4b6a6" stroke-width="0.9"/><ellipse cx="214.18" cy="375.39" rx="2.1" ry="0.8" transform="rotate(62.8 214.18 375.39)" fill="#d0d2c2"/><ellipse cx="211.07" cy="374.08" rx="2.1" ry="0.8" transform="rotate(162.8 211.07 374.08)" fill="#d0d2c2"/><ellipse cx="216.35" cy="370.22" rx="2.1" ry="0.8" transform="rotate(62.8 216.35 370.22)" fill="#d0d2c2"/><ellipse cx="213.24" cy="368.91" rx="2.1" ry="0.8" transform="rotate(162.8 213.24 368.91)" fill="#d0d2c2"/><ellipse cx="218.52" cy="365.05" rx="2.1" ry="0.8" transform="rotate(62.8 218.52 365.05)" fill="#d0d2c2"/><ellipse cx="215.41" cy="363.74" rx="2.1" ry="0.8" transform="rotate(162.8 215.41 363.74)" fill="#d0d2c2"/><ellipse cx="220.69" cy="359.88" rx="2.1" ry="0.8" transform="rotate(62.8 220.69 359.88)" fill="#d0d2c2"/><ellipse cx="217.58" cy="358.57" rx="2.1" ry="0.8" transform="rotate(162.8 217.58 358.57)" fill="#d0d2c2"/><ellipse cx="222.86" cy="354.71" rx="2.1" ry="0.8" transform="rotate(62.8 222.86 354.71)" fill="#d0d2c2"/><ellipse cx="219.75" cy="353.40" rx="2.1" ry="0.8" transform="rotate(162.8 219.75 353.40)" fill="#d0d2c2"/><line x1="232.6" y1="334" x2="239.8" y2="322.4" stroke="#b4b6a6" stroke-width="0.9"/><ellipse cx="236.42" cy="331.05" rx="2.1" ry="0.8" transform="rotate(71.8 236.42 331.05)" fill="#d0d2c2"/><ellipse cx="233.55" cy="329.27" rx="2.1" ry="0.8" transform="rotate(171.8 233.55 329.27)" fill="#d0d2c2"/><ellipse cx="239.55" cy="326.00" rx="2.1" ry="0.8" transform="rotate(71.8 239.55 326.00)" fill="#d0d2c2"/><ellipse cx="236.68" cy="324.23" rx="2.1" ry="0.8" transform="rotate(171.8 236.68 324.23)" fill="#d0d2c2"/><line x1="305" y1="309" x2="322" y2="317" stroke="#b4b6a6" stroke-width="0.9"/><ellipse cx="308.15" cy="312.35" rx="2.1" ry="0.8" transform="rotate(155.2 308.15 312.35)" fill="#d0d2c2"/><ellipse cx="309.59" cy="309.30" rx="2.1" ry="0.8" transform="rotate(255.2 309.59 309.30)" fill="#d0d2c2"/><ellipse cx="313.31" cy="314.77" rx="2.1" ry="0.8" transform="rotate(155.2 313.31 314.77)" fill="#d0d2c2"/><ellipse cx="314.74" cy="311.72" rx="2.1" ry="0.8" transform="rotate(255.2 314.74 311.72)" fill="#d0d2c2"/><ellipse cx="318.46" cy="317.20" rx="2.1" ry="0.8" transform="rotate(155.2 318.46 317.20)" fill="#d0d2c2"/><ellipse cx="319.89" cy="314.15" rx="2.1" ry="0.8" transform="rotate(255.2 319.89 314.15)" fill="#d0d2c2"/><g opacity="0.45"><line x1="216.7" y1="409" x2="219.7" y2="377.8" stroke="#b4b6a6" stroke-width="0.9"/><ellipse cx="218.72" cy="405.62" rx="2.1" ry="0.8" transform="rotate(45.5 218.72 405.62)" fill="#d0d2c2"/><ellipse cx="215.36" cy="405.29" rx="2.1" ry="0.8" transform="rotate(145.5 215.36 405.29)" fill="#d0d2c2"/><ellipse cx="219.19" cy="400.66" rx="2.1" ry="0.8" transform="rotate(45.5 219.19 400.66)" fill="#d0d2c2"/><ellipse cx="215.84" cy="400.34" rx="2.1" ry="0.8" transform="rotate(145.5 215.84 400.34)" fill="#d0d2c2"/><ellipse cx="219.67" cy="395.71" rx="2.1" ry="0.8" transform="rotate(45.5 219.67 395.71)" fill="#d0d2c2"/><ellipse cx="216.32" cy="395.39" rx="2.1" ry="0.8" transform="rotate(145.5 216.32 395.39)" fill="#d0d2c2"/><ellipse cx="220.15" cy="390.76" rx="2.1" ry="0.8" transform="rotate(45.5 220.15 390.76)" fill="#d0d2c2"/><ellipse cx="216.79" cy="390.44" rx="2.1" ry="0.8" transform="rotate(145.5 216.79 390.44)" fill="#d0d2c2"/><ellipse cx="220.62" cy="385.81" rx="2.1" ry="0.8" transform="rotate(45.5 220.62 385.81)" fill="#d0d2c2"/><ellipse cx="217.27" cy="385.48" rx="2.1" ry="0.8" transform="rotate(145.5 217.27 385.48)" fill="#d0d2c2"/><ellipse cx="221.10" cy="380.85" rx="2.1" ry="0.8" transform="rotate(45.5 221.10 380.85)" fill="#d0d2c2"/><ellipse cx="217.74" cy="380.53" rx="2.1" ry="0.8" transform="rotate(145.5 217.74 380.53)" fill="#d0d2c2"/></g><path d="M260.04 329.50 L251.21 334.60 A15 15 0 0 1 259.07 313.00 L262.56 322.59 A4.8 4.8 0 0 0 260.04 329.50Z" fill="#dcd9a0"/><line x1="257.81" y1="329.29" x2="250.43" y2="331.81" stroke="#b8b488" stroke-width="0.4"/><line x1="257.51" y1="328.01" x2="249.78" y2="329.07" stroke="#b8b488" stroke-width="0.4"/><line x1="257.46" y1="326.71" x2="249.67" y2="326.25" stroke="#b8b488" stroke-width="0.4"/><line x1="257.66" y1="325.42" x2="250.11" y2="323.47" stroke="#b8b488" stroke-width="0.4"/><line x1="258.11" y1="324.19" x2="251.07" y2="320.82" stroke="#b8b488" stroke-width="0.4"/><line x1="258.79" y1="323.07" x2="252.53" y2="318.41" stroke="#b8b488" stroke-width="0.4"/><line x1="259.66" y1="322.10" x2="254.42" y2="316.33" stroke="#b8b488" stroke-width="0.4"/><line x1="260.71" y1="321.32" x2="256.68" y2="314.64" stroke="#b8b488" stroke-width="0.4"/><path d="M264.20 327.10 L260.04 329.50 A4.8 4.8 0 0 1 262.56 322.59Z" fill="#6a7088"/><path d="M294.41 314.46 L304.00 310.97 A15 15 0 0 1 292.50 330.87 L290.73 320.83 A4.8 4.8 0 0 0 294.41 314.46Z" fill="#dcd9a0"/><line x1="296.57" y1="315.06" x2="304.28" y2="313.85" stroke="#b8b488" stroke-width="0.4"/><line x1="296.64" y1="316.36" x2="304.44" y2="316.66" stroke="#b8b488" stroke-width="0.4"/><line x1="296.47" y1="317.66" x2="304.06" y2="319.46" stroke="#b8b488" stroke-width="0.4"/><line x1="296.04" y1="318.89" x2="303.15" y2="322.12" stroke="#b8b488" stroke-width="0.4"/><line x1="295.39" y1="320.03" x2="301.74" y2="324.56" stroke="#b8b488" stroke-width="0.4"/><line x1="294.53" y1="321.01" x2="299.88" y2="326.68" stroke="#b8b488" stroke-width="0.4"/><line x1="293.50" y1="321.81" x2="297.66" y2="328.41" stroke="#b8b488" stroke-width="0.4"/><line x1="292.33" y1="322.40" x2="295.14" y2="329.67" stroke="#b8b488" stroke-width="0.4"/><path d="M289.90 316.10 L294.41 314.46 A4.8 4.8 0 0 1 290.73 320.83Z" fill="#6a7088"/><path d="M272.80 337.87 L280.23 346.72 A17 17 0 0 1 254.58 342.20 L264.59 336.42 A5.44 5.44 0 0 0 272.80 337.87Z" fill="#dcd9a0"/><line x1="273.00" y1="340.40" x2="277.27" y2="348.14" stroke="#b8b488" stroke-width="0.4"/><line x1="271.64" y1="340.98" x2="274.33" y2="349.40" stroke="#b8b488" stroke-width="0.4"/><line x1="270.19" y1="341.30" x2="271.21" y2="350.08" stroke="#b8b488" stroke-width="0.4"/><line x1="268.71" y1="341.33" x2="268.02" y2="350.14" stroke="#b8b488" stroke-width="0.4"/><line x1="267.25" y1="341.07" x2="264.88" y2="349.59" stroke="#b8b488" stroke-width="0.4"/><line x1="265.87" y1="340.54" x2="261.90" y2="348.44" stroke="#b8b488" stroke-width="0.4"/><line x1="264.61" y1="339.75" x2="259.20" y2="346.73" stroke="#b8b488" stroke-width="0.4"/><line x1="263.54" y1="338.73" x2="256.88" y2="344.54" stroke="#b8b488" stroke-width="0.4"/><path d="M269.30 333.70 L272.80 337.87 A5.44 5.44 0 0 1 264.59 336.42Z" fill="#6a7088"/><path d="M317.52 350.21 L323.30 360.22 A17 17 0 0 1 298.83 351.31 L309.69 347.36 A5.44 5.44 0 0 0 317.52 350.21Z" fill="#dcd9a0"/><line x1="317.28" y1="352.74" x2="320.14" y2="361.10" stroke="#b8b488" stroke-width="0.4"/><line x1="315.84" y1="353.08" x2="317.03" y2="361.84" stroke="#b8b488" stroke-width="0.4"/><line x1="314.36" y1="353.14" x2="313.84" y2="361.96" stroke="#b8b488" stroke-width="0.4"/><line x1="312.89" y1="352.91" x2="310.69" y2="361.47" stroke="#b8b488" stroke-width="0.4"/><line x1="311.50" y1="352.40" x2="307.69" y2="360.38" stroke="#b8b488" stroke-width="0.4"/><line x1="310.23" y1="351.64" x2="304.95" y2="358.73" stroke="#b8b488" stroke-width="0.4"/><line x1="309.13" y1="350.64" x2="302.59" y2="356.58" stroke="#b8b488" stroke-width="0.4"/><line x1="308.25" y1="349.45" x2="300.68" y2="354.02" stroke="#b8b488" stroke-width="0.4"/><path d="M314.80 345.50 L317.52 350.21 A5.44 5.44 0 0 1 309.69 347.36Z" fill="#6a7088"/><path d="M340.53 352.18 L339.12 360.22 A12 12 0 0 1 329.92 344.30 L337.59 347.09 A3.84 3.84 0 0 0 340.53 352.18Z" fill="#dcd9a0"/><line x1="339.26" y1="353.44" x2="337.01" y2="359.26" stroke="#b8b488" stroke-width="0.4"/><line x1="338.32" y1="352.97" x2="334.99" y2="358.25" stroke="#b8b488" stroke-width="0.4"/><line x1="337.49" y1="352.33" x2="333.21" y2="356.87" stroke="#b8b488" stroke-width="0.4"/><line x1="336.81" y1="351.54" x2="331.73" y2="355.17" stroke="#b8b488" stroke-width="0.4"/><line x1="336.28" y1="350.63" x2="330.60" y2="353.22" stroke="#b8b488" stroke-width="0.4"/><line x1="335.95" y1="349.65" x2="329.87" y2="351.08" stroke="#b8b488" stroke-width="0.4"/><line x1="335.80" y1="348.61" x2="329.57" y2="348.85" stroke="#b8b488" stroke-width="0.4"/><line x1="335.86" y1="347.57" x2="329.70" y2="346.60" stroke="#b8b488" stroke-width="0.4"/><path d="M341.20 348.40 L340.53 352.18 A3.84 3.84 0 0 1 337.59 347.09Z" fill="#6a7088"/><path d="M329.56 333.49 L326.50 338.79 A9 9 0 0 1 324.11 325.21 L328.79 329.15 A2.88 2.88 0 0 0 329.56 333.49Z" fill="#dcd9a0"/><line x1="328.34" y1="334.05" x2="325.26" y2="337.58" stroke="#b8b488" stroke-width="0.4"/><line x1="327.80" y1="333.48" x2="324.10" y2="336.35" stroke="#b8b488" stroke-width="0.4"/><line x1="327.38" y1="332.82" x2="323.20" y2="334.92" stroke="#b8b488" stroke-width="0.4"/><line x1="327.10" y1="332.09" x2="322.59" y2="333.34" stroke="#b8b488" stroke-width="0.4"/><line x1="326.96" y1="331.31" x2="322.30" y2="331.68" stroke="#b8b488" stroke-width="0.4"/><line x1="326.98" y1="330.53" x2="322.33" y2="329.99" stroke="#b8b488" stroke-width="0.4"/><line x1="327.14" y1="329.76" x2="322.69" y2="328.33" stroke="#b8b488" stroke-width="0.4"/><line x1="327.45" y1="329.04" x2="323.36" y2="326.78" stroke="#b8b488" stroke-width="0.4"/><path d="M331.00 331.00 L329.56 333.49 A2.88 2.88 0 0 1 328.79 329.15Z" fill="#6a7088"/><path d="M333.90 372.72 L326.24 368.30 A13 13 0 0 1 345.86 364.84 L340.17 371.61 A4.16 4.16 0 0 0 333.90 372.72Z" fill="#dcd9a0"/><line x1="333.09" y1="370.95" x2="328.00" y2="366.51" stroke="#b8b488" stroke-width="0.4"/><line x1="333.92" y1="370.18" x2="329.78" y2="364.83" stroke="#b8b488" stroke-width="0.4"/><line x1="334.87" y1="369.57" x2="331.84" y2="363.53" stroke="#b8b488" stroke-width="0.4"/><line x1="335.93" y1="369.16" x2="334.12" y2="362.65" stroke="#b8b488" stroke-width="0.4"/><line x1="337.05" y1="368.97" x2="336.52" y2="362.23" stroke="#b8b488" stroke-width="0.4"/><line x1="338.18" y1="368.99" x2="338.96" y2="362.28" stroke="#b8b488" stroke-width="0.4"/><line x1="339.29" y1="369.23" x2="341.35" y2="362.79" stroke="#b8b488" stroke-width="0.4"/><line x1="340.33" y1="369.68" x2="343.59" y2="363.76" stroke="#b8b488" stroke-width="0.4"/><path d="M337.50 374.80 L333.90 372.72 A4.16 4.16 0 0 1 340.17 371.61Z" fill="#6a7088"/><path d="M226.77 342.51 L223.51 351.46 A14 14 0 0 1 216.18 331.30 L224.42 336.06 A4.48 4.48 0 0 0 226.77 342.51Z" fill="#dcd9a0"/><line x1="225.04" y1="343.69" x2="221.28" y2="349.93" stroke="#b8b488" stroke-width="0.4"/><line x1="224.07" y1="342.97" x2="219.17" y2="348.36" stroke="#b8b488" stroke-width="0.4"/><line x1="223.25" y1="342.06" x2="217.41" y2="346.41" stroke="#b8b488" stroke-width="0.4"/><line x1="222.62" y1="341.02" x2="216.05" y2="344.16" stroke="#b8b488" stroke-width="0.4"/><line x1="222.20" y1="339.87" x2="215.15" y2="341.69" stroke="#b8b488" stroke-width="0.4"/><line x1="222.01" y1="338.67" x2="214.74" y2="339.09" stroke="#b8b488" stroke-width="0.4"/><line x1="222.06" y1="337.45" x2="214.84" y2="336.46" stroke="#b8b488" stroke-width="0.4"/><line x1="222.34" y1="336.26" x2="215.45" y2="333.90" stroke="#b8b488" stroke-width="0.4"/><path d="M228.30 338.30 L226.77 342.51 A4.48 4.48 0 0 1 224.42 336.06Z" fill="#6a7088"/><path d="M234.62 370.73 L226.58 369.32 A12 12 0 0 1 242.50 360.12 L239.71 367.79 A3.84 3.84 0 0 0 234.62 370.73Z" fill="#dcd9a0"/><line x1="233.36" y1="369.46" x2="227.54" y2="367.21" stroke="#b8b488" stroke-width="0.4"/><line x1="233.83" y1="368.52" x2="228.55" y2="365.19" stroke="#b8b488" stroke-width="0.4"/><line x1="234.47" y1="367.69" x2="229.93" y2="363.41" stroke="#b8b488" stroke-width="0.4"/><line x1="235.26" y1="367.01" x2="231.63" y2="361.93" stroke="#b8b488" stroke-width="0.4"/><line x1="236.17" y1="366.48" x2="233.58" y2="360.80" stroke="#b8b488" stroke-width="0.4"/><line x1="237.15" y1="366.15" x2="235.72" y2="360.07" stroke="#b8b488" stroke-width="0.4"/><line x1="238.19" y1="366.00" x2="237.95" y2="359.77" stroke="#b8b488" stroke-width="0.4"/><line x1="239.23" y1="366.06" x2="240.20" y2="359.90" stroke="#b8b488" stroke-width="0.4"/><path d="M238.40 371.40 L234.62 370.73 A3.84 3.84 0 0 1 239.71 367.79Z" fill="#6a7088"/><path d="M208.01 374.18 L216.32 371.15 A13 13 0 0 1 206.36 388.40 L204.82 379.70 A4.16 4.16 0 0 0 208.01 374.18Z" fill="#dcd9a0"/><line x1="209.88" y1="374.70" x2="216.56" y2="373.65" stroke="#b8b488" stroke-width="0.4"/><line x1="209.95" y1="375.83" x2="216.70" y2="376.09" stroke="#b8b488" stroke-width="0.4"/><line x1="209.79" y1="376.95" x2="216.37" y2="378.51" stroke="#b8b488" stroke-width="0.4"/><line x1="209.43" y1="378.02" x2="215.58" y2="380.82" stroke="#b8b488" stroke-width="0.4"/><line x1="208.86" y1="379.00" x2="214.36" y2="382.93" stroke="#b8b488" stroke-width="0.4"/><line x1="208.11" y1="379.86" x2="212.75" y2="384.77" stroke="#b8b488" stroke-width="0.4"/><line x1="207.22" y1="380.55" x2="210.82" y2="386.27" stroke="#b8b488" stroke-width="0.4"/><line x1="206.21" y1="381.06" x2="208.64" y2="387.36" stroke="#b8b488" stroke-width="0.4"/><path d="M204.10 375.60 L208.01 374.18 A4.16 4.16 0 0 1 204.82 379.70Z" fill="#6a7088"/><path d="M237.05 404.40 L236.11 415.24 A16 16 0 0 1 222.05 395.16 L232.55 397.97 A5.12 5.12 0 0 0 237.05 404.40Z" fill="#dcd9a0"/><line x1="235.50" y1="406.22" x2="233.19" y2="414.21" stroke="#b8b488" stroke-width="0.4"/><line x1="234.21" y1="405.70" x2="230.40" y2="413.10" stroke="#b8b488" stroke-width="0.4"/><line x1="233.03" y1="404.95" x2="227.87" y2="411.47" stroke="#b8b488" stroke-width="0.4"/><line x1="232.03" y1="403.98" x2="225.71" y2="409.39" stroke="#b8b488" stroke-width="0.4"/><line x1="231.23" y1="402.84" x2="223.98" y2="406.93" stroke="#b8b488" stroke-width="0.4"/><line x1="230.67" y1="401.56" x2="222.77" y2="404.18" stroke="#b8b488" stroke-width="0.4"/><line x1="230.36" y1="400.21" x2="222.10" y2="401.25" stroke="#b8b488" stroke-width="0.4"/><line x1="230.32" y1="398.81" x2="222.02" y2="398.25" stroke="#b8b488" stroke-width="0.4"/><path d="M237.50 399.30 L237.05 404.40 A5.12 5.12 0 0 1 232.55 397.97Z" fill="#6a7088"/><path d="M261.25 413.37 L261.78 419.47 A9 9 0 0 1 252.03 409.72 L258.13 410.25 A2.88 2.88 0 0 0 261.25 413.37Z" fill="#dcd9a0"/><line x1="260.57" y1="414.53" x2="260.07" y2="419.18" stroke="#b8b488" stroke-width="0.4"/><line x1="259.80" y1="414.37" x2="258.42" y2="418.84" stroke="#b8b488" stroke-width="0.4"/><line x1="259.08" y1="414.06" x2="256.86" y2="418.18" stroke="#b8b488" stroke-width="0.4"/><line x1="258.43" y1="413.63" x2="255.45" y2="417.24" stroke="#b8b488" stroke-width="0.4"/><line x1="257.87" y1="413.07" x2="254.26" y2="416.05" stroke="#b8b488" stroke-width="0.4"/><line x1="257.44" y1="412.42" x2="253.32" y2="414.64" stroke="#b8b488" stroke-width="0.4"/><line x1="257.13" y1="411.70" x2="252.66" y2="413.08" stroke="#b8b488" stroke-width="0.4"/><line x1="256.97" y1="410.93" x2="252.32" y2="411.43" stroke="#b8b488" stroke-width="0.4"/><path d="M261.00 410.50 L261.25 413.37 A2.88 2.88 0 0 1 258.13 410.25Z" fill="#6a7088"/><path d="M293.67 386.21 L297.86 397.71 A18 18 0 0 1 273.97 383.93 L286.03 381.80 A5.76 5.76 0 0 0 293.67 386.21Z" fill="#dcd9a0"/><line x1="292.95" y1="388.80" x2="294.40" y2="398.05" stroke="#b8b488" stroke-width="0.4"/><line x1="291.39" y1="388.89" x2="291.02" y2="398.25" stroke="#b8b488" stroke-width="0.4"/><line x1="289.83" y1="388.68" x2="287.67" y2="397.79" stroke="#b8b488" stroke-width="0.4"/><line x1="288.35" y1="388.17" x2="284.47" y2="396.69" stroke="#b8b488" stroke-width="0.4"/><line x1="286.99" y1="387.39" x2="281.55" y2="395.00" stroke="#b8b488" stroke-width="0.4"/><line x1="285.81" y1="386.36" x2="279.00" y2="392.78" stroke="#b8b488" stroke-width="0.4"/><line x1="284.85" y1="385.12" x2="276.93" y2="390.11" stroke="#b8b488" stroke-width="0.4"/><line x1="284.14" y1="383.72" x2="275.41" y2="387.09" stroke="#b8b488" stroke-width="0.4"/><path d="M291.70 380.80 L293.67 386.21 A5.76 5.76 0 0 1 286.03 381.80Z" fill="#6a7088"/><path d="M336.08 406.91 L333.05 415.22 A13 13 0 0 1 326.24 396.50 L333.90 400.92 A4.16 4.16 0 0 0 336.08 406.91Z" fill="#dcd9a0"/><line x1="334.48" y1="408.01" x2="330.98" y2="413.80" stroke="#b8b488" stroke-width="0.4"/><line x1="333.57" y1="407.33" x2="329.03" y2="412.34" stroke="#b8b488" stroke-width="0.4"/><line x1="332.81" y1="406.49" x2="327.39" y2="410.53" stroke="#b8b488" stroke-width="0.4"/><line x1="332.22" y1="405.52" x2="326.12" y2="408.44" stroke="#b8b488" stroke-width="0.4"/><line x1="331.83" y1="404.46" x2="325.29" y2="406.15" stroke="#b8b488" stroke-width="0.4"/><line x1="331.66" y1="403.34" x2="324.91" y2="403.73" stroke="#b8b488" stroke-width="0.4"/><line x1="331.70" y1="402.21" x2="325.01" y2="401.29" stroke="#b8b488" stroke-width="0.4"/><line x1="331.97" y1="401.11" x2="325.57" y2="398.92" stroke="#b8b488" stroke-width="0.4"/><path d="M337.50 403.00 L336.08 406.91 A4.16 4.16 0 0 1 333.90 400.92Z" fill="#6a7088"/><path d="M311.06 386.45 L315.43 391.66 A10 10 0 0 1 300.34 389.00 L306.23 385.60 A3.2 3.2 0 0 0 311.06 386.45Z" fill="#dcd9a0"/><line x1="311.17" y1="387.94" x2="313.69" y2="392.49" stroke="#b8b488" stroke-width="0.4"/><line x1="310.37" y1="388.29" x2="311.96" y2="393.24" stroke="#b8b488" stroke-width="0.4"/><line x1="309.52" y1="388.47" x2="310.13" y2="393.63" stroke="#b8b488" stroke-width="0.4"/><line x1="308.65" y1="388.49" x2="308.25" y2="393.67" stroke="#b8b488" stroke-width="0.4"/><line x1="307.79" y1="388.34" x2="306.40" y2="393.34" stroke="#b8b488" stroke-width="0.4"/><line x1="306.98" y1="388.02" x2="304.65" y2="392.67" stroke="#b8b488" stroke-width="0.4"/><line x1="306.24" y1="387.56" x2="303.06" y2="391.67" stroke="#b8b488" stroke-width="0.4"/><line x1="305.61" y1="386.96" x2="301.69" y2="390.38" stroke="#b8b488" stroke-width="0.4"/><path d="M309.00 384.00 L311.06 386.45 A3.2 3.2 0 0 1 306.23 385.60Z" fill="#6a7088"/><path d="M308.52 309.44 L313.88 310.39 A8 8 0 0 1 303.26 316.52 L305.12 311.41 A2.56 2.56 0 0 0 308.52 309.44Z" fill="#dcd9a0"/><line x1="309.36" y1="310.30" x2="313.24" y2="311.79" stroke="#b8b488" stroke-width="0.4"/><line x1="309.05" y1="310.92" x2="312.56" y2="313.14" stroke="#b8b488" stroke-width="0.4"/><line x1="308.62" y1="311.47" x2="311.64" y2="314.33" stroke="#b8b488" stroke-width="0.4"/><line x1="308.09" y1="311.93" x2="310.51" y2="315.31" stroke="#b8b488" stroke-width="0.4"/><line x1="307.49" y1="312.28" x2="309.21" y2="316.06" stroke="#b8b488" stroke-width="0.4"/><line x1="306.83" y1="312.50" x2="307.79" y2="316.55" stroke="#b8b488" stroke-width="0.4"/><line x1="306.14" y1="312.60" x2="306.30" y2="316.75" stroke="#b8b488" stroke-width="0.4"/><line x1="305.44" y1="312.56" x2="304.80" y2="316.67" stroke="#b8b488" stroke-width="0.4"/><path d="M306.00 309.00 L308.52 309.44 A2.56 2.56 0 0 1 305.12 311.41Z" fill="#6a7088"/></g></svg>
<div class="a" style="left:388.2px;top:262px;width:207.3px;height:9px;background:#2c2c2c;"></div>
<svg style="left:389.5px;top:264px" width="6" height="6"><rect x="0" y="0" width="6" height="6" fill="#ddd"/><rect x="0" y="0" width="3" height="3" fill="#444"/><rect x="3" y="3" width="3" height="3" fill="#444"/></svg>
<div class="t" style="left:398.2px;top:264.87px;font-size:5.4px;color:#cfcfcf;font-weight:bold;transform-origin:0 0;transform:scaleX(0.937);">Multi_switch_grayscale - 2D VIEW</div>
<svg style="left:558.5px;top:264.5px" width="5" height="5"><path d="M4.5 0.5 L2 3 L0.5 4.5" stroke="#ccc" stroke-width="1"/><path d="M2.5 0.8 L4.2 2.5 L2.5 3.2 L1.8 2.5Z" fill="#ccc"/></svg>
<svg style="left:568.0px;top:264.5px" width="5" height="5"><rect x="0.4" y="0.4" width="4.2" height="4.2" fill="none" stroke="#bbb" stroke-width="0.6"/><rect x="0.6" y="2.2" width="2.2" height="2.2" fill="#ddd"/><path d="M2.5 2.5 L4.2 0.8" stroke="#ddd" stroke-width="0.6"/></svg>
<svg style="left:577px;top:264px" width="6" height="6"><path d="M0.5 0.5L5.5 5.5M5.5 0.5L0.5 5.5" stroke="#ccc" stroke-width="0.8"/><circle cx="3" cy="3" r="1.1" fill="#eee"/></svg>
<svg style="left:587.8px;top:264.8px" width="5" height="5"><path d="M0.4 0.4L4 4M4 0.4L0.4 4" stroke="#aaa" stroke-width="0.8"/></svg>
<div class="a" style="left:388.2px;top:271px;width:207.3px;height:10.5px;background:#2f2f2f;"></div>
<svg style="left:389px;top:273px" width="8" height="8"><rect x="0.5" y="0.5" width="4.5" height="4.5" fill="none" stroke="#ccc" stroke-width="0.7"/><rect x="2.8" y="2.8" width="4.5" height="4.5" fill="#d0d0d0"/></svg>
<svg style="left:400px;top:273px" width="7" height="7"><path d="M0.3 0.3 H5.3 L6.6 1.6 V6.6 H0.3Z" fill="#d8d8d8"/><rect x="1.5" y="0.3" width="3.2" height="2" fill="#333"/></svg>
<svg style="left:411.3px;top:273px" width="7" height="7"><rect x="0.3" y="0.3" width="4.4" height="4.4" fill="#aaa"/><rect x="1.6" y="1.6" width="4.4" height="4.4" fill="#bbb" stroke="#2f2f2f" stroke-width="0.4"/><rect x="2.5" y="2.5" width="4.2" height="4.2" fill="#ccc" stroke="#2f2f2f" stroke-width="0.4"/></svg>
<svg style="left:422.3px;top:273px" width="7" height="7"><path d="M0.5 1 H6.5 L4 4 V6.5 L3 5.8 V4Z" fill="#4a4a4a"/></svg>
<svg style="left:432.5px;top:273.5px" width="8" height="6"><path d="M0.5 3 H7.5" stroke="#4a4a4a" stroke-width="0.8"/><circle cx="4" cy="3" r="1.4" fill="#4a4a4a"/></svg>
<svg style="left:448.5px;top:273px" width="5" height="7"><circle cx="3.3" cy="0.9" r="0.8" fill="#ccc"/><path d="M2.6 2.4 L1.2 6.6" stroke="#ccc" stroke-width="1.3"/></svg>
<svg style="left:459px;top:273.5px" width="6" height="6"><path d="M0.5 0 V5.5 H6" stroke="#ccc" stroke-width="0.8" fill="none"/><rect x="1.8" y="2" width="1" height="3" fill="#ccc"/><rect x="3.4" y="3" width="1" height="2" fill="#ccc"/></svg>
<div class="a" style="left:388.2px;top:281.5px;width:207.3px;height:158px;background:#1f1f1f;"></div>
<svg style="left:0;top:0" width="750" height="485"><defs><clipPath id="img2"><rect x="411.5" y="281.5" width="157.8" height="157.8"/></clipPath></defs><rect x="411.5" y="281.5" width="157.8" height="157.8" fill="#000"/><g clip-path="url(#img2)"><line x1="411.50" y1="281.5" x2="411.50" y2="287" stroke="#8a8a8a" stroke-width="0.9"/><ellipse cx="409.20" cy="282.20" rx="0.95" ry="2.2" transform="rotate(-40 409.20 282.20)" fill="#d4d4d4"/><ellipse cx="413.80" cy="282.20" rx="0.95" ry="2.2" transform="rotate(40 413.80 282.20)" fill="#d4d4d4"/><line x1="411.50" y1="312.5" x2="411.50" y2="367" stroke="#8a8a8a" stroke-width="0.9"/><ellipse cx="409.20" cy="313.20" rx="0.95" ry="2.2" transform="rotate(-40 409.20 313.20)" fill="#d4d4d4"/><ellipse cx="413.80" cy="313.20" rx="0.95" ry="2.2" transform="rotate(40 413.80 313.20)" fill="#d4d4d4"/><ellipse cx="409.20" cy="320.20" rx="0.95" ry="2.2" transform="rotate(-40 409.20 320.20)" fill="#d4d4d4"/><ellipse cx="413.80" cy="320.20" rx="0.95" ry="2.2" transform="rotate(40 413.80 320.20)" fill="#d4d4d4"/><ellipse cx="409.20" cy="327.20" rx="0.95" ry="2.2" transform="rotate(-40 409.20 327.20)" fill="#d4d4d4"/><ellipse cx="413.80" cy="327.20" rx="0.95" ry="2.2" transform="rotate(40 413.80 327.20)" fill="#d4d4d4"/><ellipse cx="409.20" cy="334.20" rx="0.95" ry="2.2" transform="rotate(-40 409.20 334.20)" fill="#d4d4d4"/><ellipse cx="413.80" cy="334.20" rx="0.95" ry="2.2" transform="rotate(40 413.80 334.20)" fill="#d4d4d4"/><ellipse cx="409.20" cy="341.20" rx="0.95" ry="2.2" transform="rotate(-40 409.20 341.20)" fill="#d4d4d4"/><ellipse cx="413.80" cy="341.20" rx="0.95" ry="2.2" transform="rotate(40 413.80 341.20)" fill="#d4d4d4"/><ellipse cx="409.20" cy="348.20" rx="0.95" ry="2.2" transform="rotate(-40 409.20 348.20)" fill="#d4d4d4"/><ellipse cx="413.80" cy="348.20" rx="0.95" ry="2.2" transform="rotate(40 413.80 348.20)" fill="#d4d4d4"/><ellipse cx="409.20" cy="355.20" rx="0.95" ry="2.2" transform="rotate(-40 409.20 355.20)" fill="#d4d4d4"/><ellipse cx="413.80" cy="355.20" rx="0.95" ry="2.2" transform="rotate(40 413.80 355.20)" fill="#d4d4d4"/><ellipse cx="409.20" cy="362.20" rx="0.95" ry="2.2" transform="rotate(-40 409.20 362.20)" fill="#d4d4d4"/><ellipse cx="413.80" cy="362.20" rx="0.95" ry="2.2" transform="rotate(40 413.80 362.20)" fill="#d4d4d4"/><line x1="411.50" y1="391" x2="411.50" y2="440" stroke="#8a8a8a" stroke-width="0.9"/><ellipse cx="409.20" cy="391.70" rx="0.95" ry="2.2" transform="rotate(-40 409.20 391.70)" fill="#d4d4d4"/><ellipse cx="413.80" cy="391.70" rx="0.95" ry="2.2" transform="rotate(40 413.80 391.70)" fill="#d4d4d4"/><ellipse cx="409.20" cy="398.70" rx="0.95" ry="2.2" transform="rotate(-40 409.20 398.70)" fill="#d4d4d4"/><ellipse cx="413.80" cy="398.70" rx="0.95" ry="2.2" transform="rotate(40 413.80 398.70)" fill="#d4d4d4"/><ellipse cx="409.20" cy="405.70" rx="0.95" ry="2.2" transform="rotate(-40 409.20 405.70)" fill="#d4d4d4"/><ellipse cx="413.80" cy="405.70" rx="0.95" ry="2.2" transform="rotate(40 413.80 405.70)" fill="#d4d4d4"/><ellipse cx="409.20" cy="412.70" rx="0.95" ry="2.2" transform="rotate(-40 409.20 412.70)" fill="#d4d4d4"/><ellipse cx="413.80" cy="412.70" rx="0.95" ry="2.2" transform="rotate(40 413.80 412.70)" fill="#d4d4d4"/><ellipse cx="409.20" cy="419.70" rx="0.95" ry="2.2" transform="rotate(-40 409.20 419.70)" fill="#d4d4d4"/><ellipse cx="413.80" cy="419.70" rx="0.95" ry="2.2" transform="rotate(40 413.80 419.70)" fill="#d4d4d4"/><ellipse cx="409.20" cy="426.70" rx="0.95" ry="2.2" transform="rotate(-40 409.20 426.70)" fill="#d4d4d4"/><ellipse cx="413.80" cy="426.70" rx="0.95" ry="2.2" transform="rotate(40 413.80 426.70)" fill="#d4d4d4"/><ellipse cx="409.20" cy="433.70" rx="0.95" ry="2.2" transform="rotate(-40 409.20 433.70)" fill="#d4d4d4"/><ellipse cx="413.80" cy="433.70" rx="0.95" ry="2.2" transform="rotate(40 413.80 433.70)" fill="#d4d4d4"/><line x1="431.12" y1="281.5" x2="431.12" y2="328.5" stroke="#8a8a8a" stroke-width="0.9"/><ellipse cx="428.82" cy="282.20" rx="0.95" ry="2.2" transform="rotate(-40 428.82 282.20)" fill="#d4d4d4"/><ellipse cx="433.43" cy="282.20" rx="0.95" ry="2.2" transform="rotate(40 433.43 282.20)" fill="#d4d4d4"/><ellipse cx="428.82" cy="289.20" rx="0.95" ry="2.2" transform="rotate(-40 428.82 289.20)" fill="#d4d4d4"/><ellipse cx="433.43" cy="289.20" rx="0.95" ry="2.2" transform="rotate(40 433.43 289.20)" fill="#d4d4d4"/><ellipse cx="428.82" cy="296.20" rx="0.95" ry="2.2" transform="rotate(-40 428.82 296.20)" fill="#d4d4d4"/><ellipse cx="433.43" cy="296.20" rx="0.95" ry="2.2" transform="rotate(40 433.43 296.20)" fill="#d4d4d4"/><ellipse cx="428.82" cy="303.20" rx="0.95" ry="2.2" transform="rotate(-40 428.82 303.20)" fill="#d4d4d4"/><ellipse cx="433.43" cy="303.20" rx="0.95" ry="2.2" transform="rotate(40 433.43 303.20)" fill="#d4d4d4"/><ellipse cx="428.82" cy="310.20" rx="0.95" ry="2.2" transform="rotate(-40 428.82 310.20)" fill="#d4d4d4"/><ellipse cx="433.43" cy="310.20" rx="0.95" ry="2.2" transform="rotate(40 433.43 310.20)" fill="#d4d4d4"/><ellipse cx="428.82" cy="317.20" rx="0.95" ry="2.2" transform="rotate(-40 428.82 317.20)" fill="#d4d4d4"/><ellipse cx="433.43" cy="317.20" rx="0.95" ry="2.2" transform="rotate(40 433.43 317.20)" fill="#d4d4d4"/><ellipse cx="428.82" cy="324.20" rx="0.95" ry="2.2" transform="rotate(-40 428.82 324.20)" fill="#d4d4d4"/><ellipse cx="433.43" cy="324.20" rx="0.95" ry="2.2" transform="rotate(40 433.43 324.20)" fill="#d4d4d4"/><line x1="431.12" y1="351.5" x2="431.12" y2="405" stroke="#8a8a8a" stroke-width="0.9"/><ellipse cx="428.82" cy="352.20" rx="0.95" ry="2.2" transform="rotate(-40 428.82 352.20)" fill="#d4d4d4"/><ellipse cx="433.43" cy="352.20" rx="0.95" ry="2.2" transform="rotate(40 433.43 352.20)" fill="#d4d4d4"/><ellipse cx="428.82" cy="359.20" rx="0.95" ry="2.2" transform="rotate(-40 428.82 359.20)" fill="#d4d4d4"/><ellipse cx="433.43" cy="359.20" rx="0.95" ry="2.2" transform="rotate(40 433.43 359.20)" fill="#d4d4d4"/><ellipse cx="428.82" cy="366.20" rx="0.95" ry="2.2" transform="rotate(-40 428.82 366.20)" fill="#d4d4d4"/><ellipse cx="433.43" cy="366.20" rx="0.95" ry="2.2" transform="rotate(40 433.43 366.20)" fill="#d4d4d4"/><ellipse cx="428.82" cy="373.20" rx="0.95" ry="2.2" transform="rotate(-40 428.82 373.20)" fill="#d4d4d4"/><ellipse cx="433.43" cy="373.20" rx="0.95" ry="2.2" transform="rotate(40 433.43 373.20)" fill="#d4d4d4"/><ellipse cx="428.82" cy="380.20" rx="0.95" ry="2.2" transform="rotate(-40 428.82 380.20)" fill="#d4d4d4"/><ellipse cx="433.43" cy="380.20" rx="0.95" ry="2.2" transform="rotate(40 433.43 380.20)" fill="#d4d4d4"/><ellipse cx="428.82" cy="387.20" rx="0.95" ry="2.2" transform="rotate(-40 428.82 387.20)" fill="#d4d4d4"/><ellipse cx="433.43" cy="387.20" rx="0.95" ry="2.2" transform="rotate(40 433.43 387.20)" fill="#d4d4d4"/><ellipse cx="428.82" cy="394.20" rx="0.95" ry="2.2" transform="rotate(-40 428.82 394.20)" fill="#d4d4d4"/><ellipse cx="433.43" cy="394.20" rx="0.95" ry="2.2" transform="rotate(40 433.43 394.20)" fill="#d4d4d4"/><ellipse cx="428.82" cy="401.20" rx="0.95" ry="2.2" transform="rotate(-40 428.82 401.20)" fill="#d4d4d4"/><ellipse cx="433.43" cy="401.20" rx="0.95" ry="2.2" transform="rotate(40 433.43 401.20)" fill="#d4d4d4"/><line x1="431.12" y1="430" x2="431.12" y2="440" stroke="#8a8a8a" stroke-width="0.9"/><ellipse cx="428.82" cy="430.70" rx="0.95" ry="2.2" transform="rotate(-40 428.82 430.70)" fill="#d4d4d4"/><ellipse cx="433.43" cy="430.70" rx="0.95" ry="2.2" transform="rotate(40 433.43 430.70)" fill="#d4d4d4"/><line x1="450.75" y1="281.5" x2="450.75" y2="287" stroke="#8a8a8a" stroke-width="0.9"/><ellipse cx="448.45" cy="282.20" rx="0.95" ry="2.2" transform="rotate(-40 448.45 282.20)" fill="#d4d4d4"/><ellipse cx="453.05" cy="282.20" rx="0.95" ry="2.2" transform="rotate(40 453.05 282.20)" fill="#d4d4d4"/><line x1="450.75" y1="312.5" x2="450.75" y2="367" stroke="#8a8a8a" stroke-width="0.9"/><ellipse cx="448.45" cy="313.20" rx="0.95" ry="2.2" transform="rotate(-40 448.45 313.20)" fill="#d4d4d4"/><ellipse cx="453.05" cy="313.20" rx="0.95" ry="2.2" transform="rotate(40 453.05 313.20)" fill="#d4d4d4"/><ellipse cx="448.45" cy="320.20" rx="0.95" ry="2.2" transform="rotate(-40 448.45 320.20)" fill="#d4d4d4"/><ellipse cx="453.05" cy="320.20" rx="0.95" ry="2.2" transform="rotate(40 453.05 320.20)" fill="#d4d4d4"/><ellipse cx="448.45" cy="327.20" rx="0.95" ry="2.2" transform="rotate(-40 448.45 327.20)" fill="#d4d4d4"/><ellipse cx="453.05" cy="327.20" rx="0.95" ry="2.2" transform="rotate(40 453.05 327.20)" fill="#d4d4d4"/><ellipse cx="448.45" cy="334.20" rx="0.95" ry="2.2" transform="rotate(-40 448.45 334.20)" fill="#d4d4d4"/><ellipse cx="453.05" cy="334.20" rx="0.95" ry="2.2" transform="rotate(40 453.05 334.20)" fill="#d4d4d4"/><ellipse cx="448.45" cy="341.20" rx="0.95" ry="2.2" transform="rotate(-40 448.45 341.20)" fill="#d4d4d4"/><ellipse cx="453.05" cy="341.20" rx="0.95" ry="2.2" transform="rotate(40 453.05 341.20)" fill="#d4d4d4"/><ellipse cx="448.45" cy="348.20" rx="0.95" ry="2.2" transform="rotate(-40 448.45 348.20)" fill="#d4d4d4"/><ellipse cx="453.05" cy="348.20" rx="0.95" ry="2.2" transform="rotate(40 453.05 348.20)" fill="#d4d4d4"/><ellipse cx="448.45" cy="355.20" rx="0.95" ry="2.2" transform="rotate(-40 448.45 355.20)" fill="#d4d4d4"/><ellipse cx="453.05" cy="355.20" rx="0.95" ry="2.2" transform="rotate(40 453.05 355.20)" fill="#d4d4d4"/><ellipse cx="448.45" cy="362.20" rx="0.95" ry="2.2" transform="rotate(-40 448.45 362.20)" fill="#d4d4d4"/><ellipse cx="453.05" cy="362.20" rx="0.95" ry="2.2" transform="rotate(40 453.05 362.20)" fill="#d4d4d4"/><line x1="450.75" y1="391" x2="450.75" y2="440" stroke="#8a8a8a" stroke-width="0.9"/><ellipse cx="448.45" cy="391.70" rx="0.95" ry="2.2" transform="rotate(-40 448.45 391.70)" fill="#d4d4d4"/><ellipse cx="453.05" cy="391.70" rx="0.95" ry="2.2" transform="rotate(40 453.05 391.70)" fill="#d4d4d4"/><ellipse cx="448.45" cy="398.70" rx="0.95" ry="2.2" transform="rotate(-40 448.45 398.70)" fill="#d4d4d4"/><ellipse cx="453.05" cy="398.70" rx="0.95" ry="2.2" transform="rotate(40 453.05 398.70)" fill="#d4d4d4"/><ellipse cx="448.45" cy="405.70" rx="0.95" ry="2.2" transform="rotate(-40 448.45 405.70)" fill="#d4d4d4"/><ellipse cx="453.05" cy="405.70" rx="0.95" ry="2.2" transform="rotate(40 453.05 405.70)" fill="#d4d4d4"/><ellipse cx="448.45" cy="412.70" rx="0.95" ry="2.2" transform="rotate(-40 448.45 412.70)" fill="#d4d4d4"/><ellipse cx="453.05" cy="412.70" rx="0.95" ry="2.2" transform="rotate(40 453.05 412.70)" fill="#d4d4d4"/><ellipse cx="448.45" cy="419.70" rx="0.95" ry="2.2" transform="rotate(-40 448.45 419.70)" fill="#d4d4d4"/><ellipse cx="453.05" cy="419.70" rx="0.95" ry="2.2" transform="rotate(40 453.05 419.70)" fill="#d4d4d4"/><ellipse cx="448.45" cy="426.70" rx="0.95" ry="2.2" transform="rotate(-40 448.45 426.70)" fill="#d4d4d4"/><ellipse cx="453.05" cy="426.70" rx="0.95" ry="2.2" transform="rotate(40 453.05 426.70)" fill="#d4d4d4"/><ellipse cx="448.45" cy="433.70" rx="0.95" ry="2.2" transform="rotate(-40 448.45 433.70)" fill="#d4d4d4"/><ellipse cx="453.05" cy="433.70" rx="0.95" ry="2.2" transform="rotate(40 453.05 433.70)" fill="#d4d4d4"/><line x1="470.38" y1="281.5" x2="470.38" y2="328.5" stroke="#8a8a8a" stroke-width="0.9"/><ellipse cx="468.07" cy="282.20" rx="0.95" ry="2.2" transform="rotate(-40 468.07 282.20)" fill="#d4d4d4"/><ellipse cx="472.68" cy="282.20" rx="0.95" ry="2.2" transform="rotate(40 472.68 282.20)" fill="#d4d4d4"/><ellipse cx="468.07" cy="289.20" rx="0.95" ry="2.2" transform="rotate(-40 468.07 289.20)" fill="#d4d4d4"/><ellipse cx="472.68" cy="289.20" rx="0.95" ry="2.2" transform="rotate(40 472.68 289.20)" fill="#d4d4d4"/><ellipse cx="468.07" cy="296.20" rx="0.95" ry="2.2" transform="rotate(-40 468.07 296.20)" fill="#d4d4d4"/><ellipse cx="472.68" cy="296.20" rx="0.95" ry="2.2" transform="rotate(40 472.68 296.20)" fill="#d4d4d4"/><ellipse cx="468.07" cy="303.20" rx="0.95" ry="2.2" transform="rotate(-40 468.07 303.20)" fill="#d4d4d4"/><ellipse cx="472.68" cy="303.20" rx="0.95" ry="2.2" transform="rotate(40 472.68 303.20)" fill="#d4d4d4"/><ellipse cx="468.07" cy="310.20" rx="0.95" ry="2.2" transform="rotate(-40 468.07 310.20)" fill="#d4d4d4"/><ellipse cx="472.68" cy="310.20" rx="0.95" ry="2.2" transform="rotate(40 472.68 310.20)" fill="#d4d4d4"/><ellipse cx="468.07" cy="317.20" rx="0.95" ry="2.2" transform="rotate(-40 468.07 317.20)" fill="#d4d4d4"/><ellipse cx="472.68" cy="317.20" rx="0.95" ry="2.2" transform="rotate(40 472.68 317.20)" fill="#d4d4d4"/><ellipse cx="468.07" cy="324.20" rx="0.95" ry="2.2" transform="rotate(-40 468.07 324.20)" fill="#d4d4d4"/><ellipse cx="472.68" cy="324.20" rx="0.95" ry="2.2" transform="rotate(40 472.68 324.20)" fill="#d4d4d4"/><line x1="470.38" y1="351.5" x2="470.38" y2="405" stroke="#8a8a8a" stroke-width="0.9"/><ellipse cx="468.07" cy="352.20" rx="0.95" ry="2.2" transform="rotate(-40 468.07 352.20)" fill="#d4d4d4"/><ellipse cx="472.68" cy="352.20" rx="0.95" ry="2.2" transform="rotate(40 472.68 352.20)" fill="#d4d4d4"/><ellipse cx="468.07" cy="359.20" rx="0.95" ry="2.2" transform="rotate(-40 468.07 359.20)" fill="#d4d4d4"/><ellipse cx="472.68" cy="359.20" rx="0.95" ry="2.2" transform="rotate(40 472.68 359.20)" fill="#d4d4d4"/><ellipse cx="468.07" cy="366.20" rx="0.95" ry="2.2" transform="rotate(-40 468.07 366.20)" fill="#d4d4d4"/><ellipse cx="472.68" cy="366.20" rx="0.95" ry="2.2" transform="rotate(40 472.68 366.20)" fill="#d4d4d4"/><ellipse cx="468.07" cy="373.20" rx="0.95" ry="2.2" transform="rotate(-40 468.07 373.20)" fill="#d4d4d4"/><ellipse cx="472.68" cy="373.20" rx="0.95" ry="2.2" transform="rotate(40 472.68 373.20)" fill="#d4d4d4"/><ellipse cx="468.07" cy="380.20" rx="0.95" ry="2.2" transform="rotate(-40 468.07 380.20)" fill="#d4d4d4"/><ellipse cx="472.68" cy="380.20" rx="0.95" ry="2.2" transform="rotate(40 472.68 380.20)" fill="#d4d4d4"/><ellipse cx="468.07" cy="387.20" rx="0.95" ry="2.2" transform="rotate(-40 468.07 387.20)" fill="#d4d4d4"/><ellipse cx="472.68" cy="387.20" rx="0.95" ry="2.2" transform="rotate(40 472.68 387.20)" fill="#d4d4d4"/><ellipse cx="468.07" cy="394.20" rx="0.95" ry="2.2" transform="rotate(-40 468.07 394.20)" fill="#d4d4d4"/><ellipse cx="472.68" cy="394.20" rx="0.95" ry="2.2" transform="rotate(40 472.68 394.20)" fill="#d4d4d4"/><ellipse cx="468.07" cy="401.20" rx="0.95" ry="2.2" transform="rotate(-40 468.07 401.20)" fill="#d4d4d4"/><ellipse cx="472.68" cy="401.20" rx="0.95" ry="2.2" transform="rotate(40 472.68 401.20)" fill="#d4d4d4"/><line x1="470.38" y1="430" x2="470.38" y2="440" stroke="#8a8a8a" stroke-width="0.9"/><ellipse cx="468.07" cy="430.70" rx="0.95" ry="2.2" transform="rotate(-40 468.07 430.70)" fill="#d4d4d4"/><ellipse cx="472.68" cy="430.70" rx="0.95" ry="2.2" transform="rotate(40 472.68 430.70)" fill="#d4d4d4"/><line x1="490.00" y1="281.5" x2="490.00" y2="287" stroke="#8a8a8a" stroke-width="0.9"/><ellipse cx="487.70" cy="282.20" rx="0.95" ry="2.2" transform="rotate(-40 487.70 282.20)" fill="#d4d4d4"/><ellipse cx="492.30" cy="282.20" rx="0.95" ry="2.2" transform="rotate(40 492.30 282.20)" fill="#d4d4d4"/><line x1="490.00" y1="312.5" x2="490.00" y2="367" stroke="#8a8a8a" stroke-width="0.9"/><ellipse cx="487.70" cy="313.20" rx="0.95" ry="2.2" transform="rotate(-40 487.70 313.20)" fill="#d4d4d4"/><ellipse cx="492.30" cy="313.20" rx="0.95" ry="2.2" transform="rotate(40 492.30 313.20)" fill="#d4d4d4"/><ellipse cx="487.70" cy="320.20" rx="0.95" ry="2.2" transform="rotate(-40 487.70 320.20)" fill="#d4d4d4"/><ellipse cx="492.30" cy="320.20" rx="0.95" ry="2.2" transform="rotate(40 492.30 320.20)" fill="#d4d4d4"/><ellipse cx="487.70" cy="327.20" rx="0.95" ry="2.2" transform="rotate(-40 487.70 327.20)" fill="#d4d4d4"/><ellipse cx="492.30" cy="327.20" rx="0.95" ry="2.2" transform="rotate(40 492.30 327.20)" fill="#d4d4d4"/><ellipse cx="487.70" cy="334.20" rx="0.95" ry="2.2" transform="rotate(-40 487.70 334.20)" fill="#d4d4d4"/><ellipse cx="492.30" cy="334.20" rx="0.95" ry="2.2" transform="rotate(40 492.30 334.20)" fill="#d4d4d4"/><ellipse cx="487.70" cy="341.20" rx="0.95" ry="2.2" transform="rotate(-40 487.70 341.20)" fill="#d4d4d4"/><ellipse cx="492.30" cy="341.20" rx="0.95" ry="2.2" transform="rotate(40 492.30 341.20)" fill="#d4d4d4"/><ellipse cx="487.70" cy="348.20" rx="0.95" ry="2.2" transform="rotate(-40 487.70 348.20)" fill="#d4d4d4"/><ellipse cx="492.30" cy="348.20" rx="0.95" ry="2.2" transform="rotate(40 492.30 348.20)" fill="#d4d4d4"/><ellipse cx="487.70" cy="355.20" rx="0.95" ry="2.2" transform="rotate(-40 487.70 355.20)" fill="#d4d4d4"/><ellipse cx="492.30" cy="355.20" rx="0.95" ry="2.2" transform="rotate(40 492.30 355.20)" fill="#d4d4d4"/><ellipse cx="487.70" cy="362.20" rx="0.95" ry="2.2" transform="rotate(-40 487.70 362.20)" fill="#d4d4d4"/><ellipse cx="492.30" cy="362.20" rx="0.95" ry="2.2" transform="rotate(40 492.30 362.20)" fill="#d4d4d4"/><line x1="490.00" y1="391" x2="490.00" y2="440" stroke="#8a8a8a" stroke-width="0.9"/><ellipse cx="487.70" cy="391.70" rx="0.95" ry="2.2" transform="rotate(-40 487.70 391.70)" fill="#d4d4d4"/><ellipse cx="492.30" cy="391.70" rx="0.95" ry="2.2" transform="rotate(40 492.30 391.70)" fill="#d4d4d4"/><ellipse cx="487.70" cy="398.70" rx="0.95" ry="2.2" transform="rotate(-40 487.70 398.70)" fill="#d4d4d4"/><ellipse cx="492.30" cy="398.70" rx="0.95" ry="2.2" transform="rotate(40 492.30 398.70)" fill="#d4d4d4"/><ellipse cx="487.70" cy="405.70" rx="0.95" ry="2.2" transform="rotate(-40 487.70 405.70)" fill="#d4d4d4"/><ellipse cx="492.30" cy="405.70" rx="0.95" ry="2.2" transform="rotate(40 492.30 405.70)" fill="#d4d4d4"/><ellipse cx="487.70" cy="412.70" rx="0.95" ry="2.2" transform="rotate(-40 487.70 412.70)" fill="#d4d4d4"/><ellipse cx="492.30" cy="412.70" rx="0.95" ry="2.2" transform="rotate(40 492.30 412.70)" fill="#d4d4d4"/><ellipse cx="487.70" cy="419.70" rx="0.95" ry="2.2" transform="rotate(-40 487.70 419.70)" fill="#d4d4d4"/><ellipse cx="492.30" cy="419.70" rx="0.95" ry="2.2" transform="rotate(40 492.30 419.70)" fill="#d4d4d4"/><ellipse cx="487.70" cy="426.70" rx="0.95" ry="2.2" transform="rotate(-40 487.70 426.70)" fill="#d4d4d4"/><ellipse cx="492.30" cy="426.70" rx="0.95" ry="2.2" transform="rotate(40 492.30 426.70)" fill="#d4d4d4"/><ellipse cx="487.70" cy="433.70" rx="0.95" ry="2.2" transform="rotate(-40 487.70 433.70)" fill="#d4d4d4"/><ellipse cx="492.30" cy="433.70" rx="0.95" ry="2.2" transform="rotate(40 492.30 433.70)" fill="#d4d4d4"/><line x1="509.62" y1="281.5" x2="509.62" y2="328.5" stroke="#8a8a8a" stroke-width="0.9"/><ellipse cx="507.32" cy="282.20" rx="0.95" ry="2.2" transform="rotate(-40 507.32 282.20)" fill="#d4d4d4"/><ellipse cx="511.93" cy="282.20" rx="0.95" ry="2.2" transform="rotate(40 511.93 282.20)" fill="#d4d4d4"/><ellipse cx="507.32" cy="289.20" rx="0.95" ry="2.2" transform="rotate(-40 507.32 289.20)" fill="#d4d4d4"/><ellipse cx="511.93" cy="289.20" rx="0.95" ry="2.2" transform="rotate(40 511.93 289.20)" fill="#d4d4d4"/><ellipse cx="507.32" cy="296.20" rx="0.95" ry="2.2" transform="rotate(-40 507.32 296.20)" fill="#d4d4d4"/><ellipse cx="511.93" cy="296.20" rx="0.95" ry="2.2" transform="rotate(40 511.93 296.20)" fill="#d4d4d4"/><ellipse cx="507.32" cy="303.20" rx="0.95" ry="2.2" transform="rotate(-40 507.32 303.20)" fill="#d4d4d4"/><ellipse cx="511.93" cy="303.20" rx="0.95" ry="2.2" transform="rotate(40 511.93 303.20)" fill="#d4d4d4"/><ellipse cx="507.32" cy="310.20" rx="0.95" ry="2.2" transform="rotate(-40 507.32 310.20)" fill="#d4d4d4"/><ellipse cx="511.93" cy="310.20" rx="0.95" ry="2.2" transform="rotate(40 511.93 310.20)" fill="#d4d4d4"/><ellipse cx="507.32" cy="317.20" rx="0.95" ry="2.2" transform="rotate(-40 507.32 317.20)" fill="#d4d4d4"/><ellipse cx="511.93" cy="317.20" rx="0.95" ry="2.2" transform="rotate(40 511.93 317.20)" fill="#d4d4d4"/><ellipse cx="507.32" cy="324.20" rx="0.95" ry="2.2" transform="rotate(-40 507.32 324.20)" fill="#d4d4d4"/><ellipse cx="511.93" cy="324.20" rx="0.95" ry="2.2" transform="rotate(40 511.93 324.20)" fill="#d4d4d4"/><line x1="509.62" y1="351.5" x2="509.62" y2="405" stroke="#8a8a8a" stroke-width="0.9"/><ellipse cx="507.32" cy="352.20" rx="0.95" ry="2.2" transform="rotate(-40 507.32 352.20)" fill="#d4d4d4"/><ellipse cx="511.93" cy="352.20" rx="0.95" ry="2.2" transform="rotate(40 511.93 352.20)" fill="#d4d4d4"/><ellipse cx="507.32" cy="359.20" rx="0.95" ry="2.2" transform="rotate(-40 507.32 359.20)" fill="#d4d4d4"/><ellipse cx="511.93" cy="359.20" rx="0.95" ry="2.2" transform="rotate(40 511.93 359.20)" fill="#d4d4d4"/><ellipse cx="507.32" cy="366.20" rx="0.95" ry="2.2" transform="rotate(-40 507.32 366.20)" fill="#d4d4d4"/><ellipse cx="511.93" cy="366.20" rx="0.95" ry="2.2" transform="rotate(40 511.93 366.20)" fill="#d4d4d4"/><ellipse cx="507.32" cy="373.20" rx="0.95" ry="2.2" transform="rotate(-40 507.32 373.20)" fill="#d4d4d4"/><ellipse cx="511.93" cy="373.20" rx="0.95" ry="2.2" transform="rotate(40 511.93 373.20)" fill="#d4d4d4"/><ellipse cx="507.32" cy="380.20" rx="0.95" ry="2.2" transform="rotate(-40 507.32 380.20)" fill="#d4d4d4"/><ellipse cx="511.93" cy="380.20" rx="0.95" ry="2.2" transform="rotate(40 511.93 380.20)" fill="#d4d4d4"/><ellipse cx="507.32" cy="387.20" rx="0.95" ry="2.2" transform="rotate(-40 507.32 387.20)" fill="#d4d4d4"/><ellipse cx="511.93" cy="387.20" rx="0.95" ry="2.2" transform="rotate(40 511.93 387.20)" fill="#d4d4d4"/><ellipse cx="507.32" cy="394.20" rx="0.95" ry="2.2" transform="rotate(-40 507.32 394.20)" fill="#d4d4d4"/><ellipse cx="511.93" cy="394.20" rx="0.95" ry="2.2" transform="rotate(40 511.93 394.20)" fill="#d4d4d4"/><ellipse cx="507.32" cy="401.20" rx="0.95" ry="2.2" transform="rotate(-40 507.32 401.20)" fill="#d4d4d4"/><ellipse cx="511.93" cy="401.20" rx="0.95" ry="2.2" transform="rotate(40 511.93 401.20)" fill="#d4d4d4"/><line x1="509.62" y1="430" x2="509.62" y2="440" stroke="#8a8a8a" stroke-width="0.9"/><ellipse cx="507.32" cy="430.70" rx="0.95" ry="2.2" transform="rotate(-40 507.32 430.70)" fill="#d4d4d4"/><ellipse cx="511.93" cy="430.70" rx="0.95" ry="2.2" transform="rotate(40 511.93 430.70)" fill="#d4d4d4"/><line x1="529.25" y1="281.5" x2="529.25" y2="287" stroke="#8a8a8a" stroke-width="0.9"/><ellipse cx="526.95" cy="282.20" rx="0.95" ry="2.2" transform="rotate(-40 526.95 282.20)" fill="#d4d4d4"/><ellipse cx="531.55" cy="282.20" rx="0.95" ry="2.2" transform="rotate(40 531.55 282.20)" fill="#d4d4d4"/><line x1="529.25" y1="312.5" x2="529.25" y2="367" stroke="#8a8a8a" stroke-width="0.9"/><ellipse cx="526.95" cy="313.20" rx="0.95" ry="2.2" transform="rotate(-40 526.95 313.20)" fill="#d4d4d4"/><ellipse cx="531.55" cy="313.20" rx="0.95" ry="2.2" transform="rotate(40 531.55 313.20)" fill="#d4d4d4"/><ellipse cx="526.95" cy="320.20" rx="0.95" ry="2.2" transform="rotate(-40 526.95 320.20)" fill="#d4d4d4"/><ellipse cx="531.55" cy="320.20" rx="0.95" ry="2.2" transform="rotate(40 531.55 320.20)" fill="#d4d4d4"/><ellipse cx="526.95" cy="327.20" rx="0.95" ry="2.2" transform="rotate(-40 526.95 327.20)" fill="#d4d4d4"/><ellipse cx="531.55" cy="327.20" rx="0.95" ry="2.2" transform="rotate(40 531.55 327.20)" fill="#d4d4d4"/><ellipse cx="526.95" cy="334.20" rx="0.95" ry="2.2" transform="rotate(-40 526.95 334.20)" fill="#d4d4d4"/><ellipse cx="531.55" cy="334.20" rx="0.95" ry="2.2" transform="rotate(40 531.55 334.20)" fill="#d4d4d4"/><ellipse cx="526.95" cy="341.20" rx="0.95" ry="2.2" transform="rotate(-40 526.95 341.20)" fill="#d4d4d4"/><ellipse cx="531.55" cy="341.20" rx="0.95" ry="2.2" transform="rotate(40 531.55 341.20)" fill="#d4d4d4"/><ellipse cx="526.95" cy="348.20" rx="0.95" ry="2.2" transform="rotate(-40 526.95 348.20)" fill="#d4d4d4"/><ellipse cx="531.55" cy="348.20" rx="0.95" ry="2.2" transform="rotate(40 531.55 348.20)" fill="#d4d4d4"/><ellipse cx="526.95" cy="355.20" rx="0.95" ry="2.2" transform="rotate(-40 526.95 355.20)" fill="#d4d4d4"/><ellipse cx="531.55" cy="355.20" rx="0.95" ry="2.2" transform="rotate(40 531.55 355.20)" fill="#d4d4d4"/><ellipse cx="526.95" cy="362.20" rx="0.95" ry="2.2" transform="rotate(-40 526.95 362.20)" fill="#d4d4d4"/><ellipse cx="531.55" cy="362.20" rx="0.95" ry="2.2" transform="rotate(40 531.55 362.20)" fill="#d4d4d4"/><line x1="529.25" y1="391" x2="529.25" y2="440" stroke="#8a8a8a" stroke-width="0.9"/><ellipse cx="526.95" cy="391.70" rx="0.95" ry="2.2" transform="rotate(-40 526.95 391.70)" fill="#d4d4d4"/><ellipse cx="531.55" cy="391.70" rx="0.95" ry="2.2" transform="rotate(40 531.55 391.70)" fill="#d4d4d4"/><ellipse cx="526.95" cy="398.70" rx="0.95" ry="2.2" transform="rotate(-40 526.95 398.70)" fill="#d4d4d4"/><ellipse cx="531.55" cy="398.70" rx="0.95" ry="2.2" transform="rotate(40 531.55 398.70)" fill="#d4d4d4"/><ellipse cx="526.95" cy="405.70" rx="0.95" ry="2.2" transform="rotate(-40 526.95 405.70)" fill="#d4d4d4"/><ellipse cx="531.55" cy="405.70" rx="0.95" ry="2.2" transform="rotate(40 531.55 405.70)" fill="#d4d4d4"/><ellipse cx="526.95" cy="412.70" rx="0.95" ry="2.2" transform="rotate(-40 526.95 412.70)" fill="#d4d4d4"/><ellipse cx="531.55" cy="412.70" rx="0.95" ry="2.2" transform="rotate(40 531.55 412.70)" fill="#d4d4d4"/><ellipse cx="526.95" cy="419.70" rx="0.95" ry="2.2" transform="rotate(-40 526.95 419.70)" fill="#d4d4d4"/><ellipse cx="531.55" cy="419.70" rx="0.95" ry="2.2" transform="rotate(40 531.55 419.70)" fill="#d4d4d4"/><ellipse cx="526.95" cy="426.70" rx="0.95" ry="2.2" transform="rotate(-40 526.95 426.70)" fill="#d4d4d4"/><ellipse cx="531.55" cy="426.70" rx="0.95" ry="2.2" transform="rotate(40 531.55 426.70)" fill="#d4d4d4"/><ellipse cx="526.95" cy="433.70" rx="0.95" ry="2.2" transform="rotate(-40 526.95 433.70)" fill="#d4d4d4"/><ellipse cx="531.55" cy="433.70" rx="0.95" ry="2.2" transform="rotate(40 531.55 433.70)" fill="#d4d4d4"/><line x1="548.88" y1="281.5" x2="548.88" y2="328.5" stroke="#8a8a8a" stroke-width="0.9"/><ellipse cx="546.58" cy="282.20" rx="0.95" ry="2.2" transform="rotate(-40 546.58 282.20)" fill="#d4d4d4"/><ellipse cx="551.17" cy="282.20" rx="0.95" ry="2.2" transform="rotate(40 551.17 282.20)" fill="#d4d4d4"/><ellipse cx="546.58" cy="289.20" rx="0.95" ry="2.2" transform="rotate(-40 546.58 289.20)" fill="#d4d4d4"/><ellipse cx="551.17" cy="289.20" rx="0.95" ry="2.2" transform="rotate(40 551.17 289.20)" fill="#d4d4d4"/><ellipse cx="546.58" cy="296.20" rx="0.95" ry="2.2" transform="rotate(-40 546.58 296.20)" fill="#d4d4d4"/><ellipse cx="551.17" cy="296.20" rx="0.95" ry="2.2" transform="rotate(40 551.17 296.20)" fill="#d4d4d4"/><ellipse cx="546.58" cy="303.20" rx="0.95" ry="2.2" transform="rotate(-40 546.58 303.20)" fill="#d4d4d4"/><ellipse cx="551.17" cy="303.20" rx="0.95" ry="2.2" transform="rotate(40 551.17 303.20)" fill="#d4d4d4"/><ellipse cx="546.58" cy="310.20" rx="0.95" ry="2.2" transform="rotate(-40 546.58 310.20)" fill="#d4d4d4"/><ellipse cx="551.17" cy="310.20" rx="0.95" ry="2.2" transform="rotate(40 551.17 310.20)" fill="#d4d4d4"/><ellipse cx="546.58" cy="317.20" rx="0.95" ry="2.2" transform="rotate(-40 546.58 317.20)" fill="#d4d4d4"/><ellipse cx="551.17" cy="317.20" rx="0.95" ry="2.2" transform="rotate(40 551.17 317.20)" fill="#d4d4d4"/><ellipse cx="546.58" cy="324.20" rx="0.95" ry="2.2" transform="rotate(-40 546.58 324.20)" fill="#d4d4d4"/><ellipse cx="551.17" cy="324.20" rx="0.95" ry="2.2" transform="rotate(40 551.17 324.20)" fill="#d4d4d4"/><line x1="548.88" y1="351.5" x2="548.88" y2="405" stroke="#8a8a8a" stroke-width="0.9"/><ellipse cx="546.58" cy="352.20" rx="0.95" ry="2.2" transform="rotate(-40 546.58 352.20)" fill="#d4d4d4"/><ellipse cx="551.17" cy="352.20" rx="0.95" ry="2.2" transform="rotate(40 551.17 352.20)" fill="#d4d4d4"/><ellipse cx="546.58" cy="359.20" rx="0.95" ry="2.2" transform="rotate(-40 546.58 359.20)" fill="#d4d4d4"/><ellipse cx="551.17" cy="359.20" rx="0.95" ry="2.2" transform="rotate(40 551.17 359.20)" fill="#d4d4d4"/><ellipse cx="546.58" cy="366.20" rx="0.95" ry="2.2" transform="rotate(-40 546.58 366.20)" fill="#d4d4d4"/><ellipse cx="551.17" cy="366.20" rx="0.95" ry="2.2" transform="rotate(40 551.17 366.20)" fill="#d4d4d4"/><ellipse cx="546.58" cy="373.20" rx="0.95" ry="2.2" transform="rotate(-40 546.58 373.20)" fill="#d4d4d4"/><ellipse cx="551.17" cy="373.20" rx="0.95" ry="2.2" transform="rotate(40 551.17 373.20)" fill="#d4d4d4"/><ellipse cx="546.58" cy="380.20" rx="0.95" ry="2.2" transform="rotate(-40 546.58 380.20)" fill="#d4d4d4"/><ellipse cx="551.17" cy="380.20" rx="0.95" ry="2.2" transform="rotate(40 551.17 380.20)" fill="#d4d4d4"/><ellipse cx="546.58" cy="387.20" rx="0.95" ry="2.2" transform="rotate(-40 546.58 387.20)" fill="#d4d4d4"/><ellipse cx="551.17" cy="387.20" rx="0.95" ry="2.2" transform="rotate(40 551.17 387.20)" fill="#d4d4d4"/><ellipse cx="546.58" cy="394.20" rx="0.95" ry="2.2" transform="rotate(-40 546.58 394.20)" fill="#d4d4d4"/><ellipse cx="551.17" cy="394.20" rx="0.95" ry="2.2" transform="rotate(40 551.17 394.20)" fill="#d4d4d4"/><ellipse cx="546.58" cy="401.20" rx="0.95" ry="2.2" transform="rotate(-40 546.58 401.20)" fill="#d4d4d4"/><ellipse cx="551.17" cy="401.20" rx="0.95" ry="2.2" transform="rotate(40 551.17 401.20)" fill="#d4d4d4"/><line x1="548.88" y1="430" x2="548.88" y2="440" stroke="#8a8a8a" stroke-width="0.9"/><ellipse cx="546.58" cy="430.70" rx="0.95" ry="2.2" transform="rotate(-40 546.58 430.70)" fill="#d4d4d4"/><ellipse cx="551.17" cy="430.70" rx="0.95" ry="2.2" transform="rotate(40 551.17 430.70)" fill="#d4d4d4"/><line x1="568.50" y1="281.5" x2="568.50" y2="287" stroke="#8a8a8a" stroke-width="0.9"/><ellipse cx="566.20" cy="282.20" rx="0.95" ry="2.2" transform="rotate(-40 566.20 282.20)" fill="#d4d4d4"/><ellipse cx="570.80" cy="282.20" rx="0.95" ry="2.2" transform="rotate(40 570.80 282.20)" fill="#d4d4d4"/><line x1="568.50" y1="312.5" x2="568.50" y2="367" stroke="#8a8a8a" stroke-width="0.9"/><ellipse cx="566.20" cy="313.20" rx="0.95" ry="2.2" transform="rotate(-40 566.20 313.20)" fill="#d4d4d4"/><ellipse cx="570.80" cy="313.20" rx="0.95" ry="2.2" transform="rotate(40 570.80 313.20)" fill="#d4d4d4"/><ellipse cx="566.20" cy="320.20" rx="0.95" ry="2.2" transform="rotate(-40 566.20 320.20)" fill="#d4d4d4"/><ellipse cx="570.80" cy="320.20" rx="0.95" ry="2.2" transform="rotate(40 570.80 320.20)" fill="#d4d4d4"/><ellipse cx="566.20" cy="327.20" rx="0.95" ry="2.2" transform="rotate(-40 566.20 327.20)" fill="#d4d4d4"/><ellipse cx="570.80" cy="327.20" rx="0.95" ry="2.2" transform="rotate(40 570.80 327.20)" fill="#d4d4d4"/><ellipse cx="566.20" cy="334.20" rx="0.95" ry="2.2" transform="rotate(-40 566.20 334.20)" fill="#d4d4d4"/><ellipse cx="570.80" cy="334.20" rx="0.95" ry="2.2" transform="rotate(40 570.80 334.20)" fill="#d4d4d4"/><ellipse cx="566.20" cy="341.20" rx="0.95" ry="2.2" transform="rotate(-40 566.20 341.20)" fill="#d4d4d4"/><ellipse cx="570.80" cy="341.20" rx="0.95" ry="2.2" transform="rotate(40 570.80 341.20)" fill="#d4d4d4"/><ellipse cx="566.20" cy="348.20" rx="0.95" ry="2.2" transform="rotate(-40 566.20 348.20)" fill="#d4d4d4"/><ellipse cx="570.80" cy="348.20" rx="0.95" ry="2.2" transform="rotate(40 570.80 348.20)" fill="#d4d4d4"/><ellipse cx="566.20" cy="355.20" rx="0.95" ry="2.2" transform="rotate(-40 566.20 355.20)" fill="#d4d4d4"/><ellipse cx="570.80" cy="355.20" rx="0.95" ry="2.2" transform="rotate(40 570.80 355.20)" fill="#d4d4d4"/><ellipse cx="566.20" cy="362.20" rx="0.95" ry="2.2" transform="rotate(-40 566.20 362.20)" fill="#d4d4d4"/><ellipse cx="570.80" cy="362.20" rx="0.95" ry="2.2" transform="rotate(40 570.80 362.20)" fill="#d4d4d4"/><line x1="568.50" y1="391" x2="568.50" y2="440" stroke="#8a8a8a" stroke-width="0.9"/><ellipse cx="566.20" cy="391.70" rx="0.95" ry="2.2" transform="rotate(-40 566.20 391.70)" fill="#d4d4d4"/><ellipse cx="570.80" cy="391.70" rx="0.95" ry="2.2" transform="rotate(40 570.80 391.70)" fill="#d4d4d4"/><ellipse cx="566.20" cy="398.70" rx="0.95" ry="2.2" transform="rotate(-40 566.20 398.70)" fill="#d4d4d4"/><ellipse cx="570.80" cy="398.70" rx="0.95" ry="2.2" transform="rotate(40 570.80 398.70)" fill="#d4d4d4"/><ellipse cx="566.20" cy="405.70" rx="0.95" ry="2.2" transform="rotate(-40 566.20 405.70)" fill="#d4d4d4"/><ellipse cx="570.80" cy="405.70" rx="0.95" ry="2.2" transform="rotate(40 570.80 405.70)" fill="#d4d4d4"/><ellipse cx="566.20" cy="412.70" rx="0.95" ry="2.2" transform="rotate(-40 566.20 412.70)" fill="#d4d4d4"/><ellipse cx="570.80" cy="412.70" rx="0.95" ry="2.2" transform="rotate(40 570.80 412.70)" fill="#d4d4d4"/><ellipse cx="566.20" cy="419.70" rx="0.95" ry="2.2" transform="rotate(-40 566.20 419.70)" fill="#d4d4d4"/><ellipse cx="570.80" cy="419.70" rx="0.95" ry="2.2" transform="rotate(40 570.80 419.70)" fill="#d4d4d4"/><ellipse cx="566.20" cy="426.70" rx="0.95" ry="2.2" transform="rotate(-40 566.20 426.70)" fill="#d4d4d4"/><ellipse cx="570.80" cy="426.70" rx="0.95" ry="2.2" transform="rotate(40 570.80 426.70)" fill="#d4d4d4"/><ellipse cx="566.20" cy="433.70" rx="0.95" ry="2.2" transform="rotate(-40 566.20 433.70)" fill="#d4d4d4"/><ellipse cx="570.80" cy="433.70" rx="0.95" ry="2.2" transform="rotate(40 570.80 433.70)" fill="#d4d4d4"/><path d="M565.58 294.33 L575.50 290.32 A16.5 16.5 0 0 1 565.30 312.19 L561.99 302.02 A5.8 5.8 0 0 0 565.58 294.33Z" fill="#f4f4f4"/><line x1="566.49" y1="294.84" x2="575.67" y2="292.42" stroke="#a8a8a8" stroke-width="0.5"/><line x1="566.64" y1="295.65" x2="576.06" y2="294.40" stroke="#a8a8a8" stroke-width="0.5"/><line x1="566.70" y1="296.47" x2="576.20" y2="296.41" stroke="#a8a8a8" stroke-width="0.5"/><line x1="566.65" y1="297.28" x2="576.08" y2="298.43" stroke="#a8a8a8" stroke-width="0.5"/><line x1="566.50" y1="298.09" x2="575.71" y2="300.41" stroke="#a8a8a8" stroke-width="0.5"/><line x1="566.25" y1="298.87" x2="575.10" y2="302.33" stroke="#a8a8a8" stroke-width="0.5"/><line x1="565.91" y1="299.61" x2="574.25" y2="304.16" stroke="#a8a8a8" stroke-width="0.5"/><line x1="565.47" y1="300.31" x2="573.17" y2="305.87" stroke="#a8a8a8" stroke-width="0.5"/><line x1="564.95" y1="300.94" x2="571.89" y2="307.43" stroke="#a8a8a8" stroke-width="0.5"/><line x1="564.35" y1="301.50" x2="570.42" y2="308.81" stroke="#a8a8a8" stroke-width="0.5"/><line x1="563.69" y1="301.98" x2="568.79" y2="310.00" stroke="#a8a8a8" stroke-width="0.5"/><line x1="562.97" y1="302.38" x2="567.02" y2="310.97" stroke="#a8a8a8" stroke-width="0.5"/><path d="M560.20 296.50 L565.58 294.33 A5.8 5.8 0 0 1 561.99 302.02Z" fill="#2a2a2a"/><path d="M565.58 294.33 A5.8 5.8 0 0 1 561.99 302.02" stroke="#777" stroke-width="1" fill="none"/><line x1="560.20" y1="296.50" x2="555.22" y2="294.18" stroke="#a0a0a0" stroke-width="1"/><circle cx="560.20" cy="296.50" r="1" fill="#bbb"/><path d="M408.58 294.33 L418.50 290.32 A16.5 16.5 0 0 1 408.30 312.19 L404.99 302.02 A5.8 5.8 0 0 0 408.58 294.33Z" fill="#f4f4f4"/><line x1="409.49" y1="294.84" x2="418.67" y2="292.42" stroke="#a8a8a8" stroke-width="0.5"/><line x1="409.64" y1="295.65" x2="419.06" y2="294.40" stroke="#a8a8a8" stroke-width="0.5"/><line x1="409.70" y1="296.47" x2="419.20" y2="296.41" stroke="#a8a8a8" stroke-width="0.5"/><line x1="409.65" y1="297.28" x2="419.08" y2="298.43" stroke="#a8a8a8" stroke-width="0.5"/><line x1="409.50" y1="298.09" x2="418.71" y2="300.41" stroke="#a8a8a8" stroke-width="0.5"/><line x1="409.25" y1="298.87" x2="418.10" y2="302.33" stroke="#a8a8a8" stroke-width="0.5"/><line x1="408.91" y1="299.61" x2="417.25" y2="304.16" stroke="#a8a8a8" stroke-width="0.5"/><line x1="408.47" y1="300.31" x2="416.17" y2="305.87" stroke="#a8a8a8" stroke-width="0.5"/><line x1="407.95" y1="300.94" x2="414.89" y2="307.43" stroke="#a8a8a8" stroke-width="0.5"/><line x1="407.35" y1="301.50" x2="413.42" y2="308.81" stroke="#a8a8a8" stroke-width="0.5"/><line x1="406.69" y1="301.98" x2="411.79" y2="310.00" stroke="#a8a8a8" stroke-width="0.5"/><line x1="405.97" y1="302.38" x2="410.02" y2="310.97" stroke="#a8a8a8" stroke-width="0.5"/><path d="M403.20 296.50 L408.58 294.33 A5.8 5.8 0 0 1 404.99 302.02Z" fill="#2a2a2a"/><path d="M408.58 294.33 A5.8 5.8 0 0 1 404.99 302.02" stroke="#777" stroke-width="1" fill="none"/><line x1="403.20" y1="296.50" x2="398.22" y2="294.18" stroke="#a0a0a0" stroke-width="1"/><circle cx="403.20" cy="296.50" r="1" fill="#bbb"/><path d="M455.65 300.21 L462.38 308.52 A16.5 16.5 0 0 1 438.48 305.16 L447.25 299.03 A5.8 5.8 0 0 0 455.65 300.21Z" fill="#f4f4f4"/><line x1="455.42" y1="301.23" x2="460.42" y2="309.30" stroke="#a8a8a8" stroke-width="0.5"/><line x1="454.70" y1="301.61" x2="458.64" y2="310.25" stroke="#a8a8a8" stroke-width="0.5"/><line x1="453.93" y1="301.91" x2="456.76" y2="310.98" stroke="#a8a8a8" stroke-width="0.5"/><line x1="453.14" y1="302.10" x2="454.80" y2="311.45" stroke="#a8a8a8" stroke-width="0.5"/><line x1="452.32" y1="302.19" x2="452.79" y2="311.68" stroke="#a8a8a8" stroke-width="0.5"/><line x1="451.50" y1="302.18" x2="450.78" y2="311.65" stroke="#a8a8a8" stroke-width="0.5"/><line x1="450.69" y1="302.07" x2="448.78" y2="311.37" stroke="#a8a8a8" stroke-width="0.5"/><line x1="449.90" y1="301.85" x2="446.83" y2="310.84" stroke="#a8a8a8" stroke-width="0.5"/><line x1="449.14" y1="301.54" x2="444.97" y2="310.07" stroke="#a8a8a8" stroke-width="0.5"/><line x1="448.43" y1="301.13" x2="443.21" y2="309.07" stroke="#a8a8a8" stroke-width="0.5"/><line x1="447.78" y1="300.64" x2="441.60" y2="307.86" stroke="#a8a8a8" stroke-width="0.5"/><line x1="447.19" y1="300.07" x2="440.15" y2="306.45" stroke="#a8a8a8" stroke-width="0.5"/><path d="M452.00 295.70 L455.65 300.21 A5.8 5.8 0 0 1 447.25 299.03Z" fill="#2a2a2a"/><path d="M455.65 300.21 A5.8 5.8 0 0 1 447.25 299.03" stroke="#777" stroke-width="1" fill="none"/><line x1="452.00" y1="295.70" x2="452.77" y2="290.25" stroke="#a0a0a0" stroke-width="1"/><circle cx="452.00" cy="295.70" r="1" fill="#bbb"/><path d="M484.40 301.05 L481.99 290.62 A16.5 16.5 0 0 1 502.00 304.12 L491.43 305.79 A5.8 5.8 0 0 0 484.40 301.05Z" fill="#f4f4f4"/><line x1="485.05" y1="300.23" x2="484.09" y2="290.78" stroke="#a8a8a8" stroke-width="0.5"/><line x1="485.87" y1="300.20" x2="486.11" y2="290.71" stroke="#a8a8a8" stroke-width="0.5"/><line x1="486.68" y1="300.27" x2="488.12" y2="290.88" stroke="#a8a8a8" stroke-width="0.5"/><line x1="487.48" y1="300.45" x2="490.09" y2="291.31" stroke="#a8a8a8" stroke-width="0.5"/><line x1="488.26" y1="300.72" x2="491.99" y2="291.99" stroke="#a8a8a8" stroke-width="0.5"/><line x1="488.99" y1="301.09" x2="493.79" y2="292.90" stroke="#a8a8a8" stroke-width="0.5"/><line x1="489.67" y1="301.55" x2="495.47" y2="294.03" stroke="#a8a8a8" stroke-width="0.5"/><line x1="490.28" y1="302.09" x2="496.98" y2="295.36" stroke="#a8a8a8" stroke-width="0.5"/><line x1="490.83" y1="302.71" x2="498.32" y2="296.87" stroke="#a8a8a8" stroke-width="0.5"/><line x1="491.29" y1="303.38" x2="499.46" y2="298.53" stroke="#a8a8a8" stroke-width="0.5"/><line x1="491.66" y1="304.11" x2="500.38" y2="300.33" stroke="#a8a8a8" stroke-width="0.5"/><line x1="491.94" y1="304.88" x2="501.06" y2="302.23" stroke="#a8a8a8" stroke-width="0.5"/><path d="M485.70 306.70 L484.40 301.05 A5.8 5.8 0 0 1 491.43 305.79Z" fill="#2a2a2a"/><path d="M484.40 301.05 A5.8 5.8 0 0 1 491.43 305.79" stroke="#777" stroke-width="1" fill="none"/><line x1="485.70" y1="306.70" x2="482.62" y2="311.26" stroke="#a0a0a0" stroke-width="1"/><circle cx="485.70" cy="306.70" r="1" fill="#bbb"/><path d="M524.49 301.71 L518.20 293.05 A16.5 16.5 0 0 1 541.89 297.66 L532.82 303.33 A5.8 5.8 0 0 0 524.49 301.71Z" fill="#f4f4f4"/><line x1="524.77" y1="300.70" x2="520.20" y2="292.37" stroke="#a8a8a8" stroke-width="0.5"/><line x1="525.51" y1="300.35" x2="522.03" y2="291.52" stroke="#a8a8a8" stroke-width="0.5"/><line x1="526.29" y1="300.10" x2="523.95" y2="290.90" stroke="#a8a8a8" stroke-width="0.5"/><line x1="527.10" y1="299.95" x2="525.93" y2="290.52" stroke="#a8a8a8" stroke-width="0.5"/><line x1="527.92" y1="299.90" x2="527.94" y2="290.40" stroke="#a8a8a8" stroke-width="0.5"/><line x1="528.74" y1="299.95" x2="529.96" y2="290.53" stroke="#a8a8a8" stroke-width="0.5"/><line x1="529.54" y1="300.11" x2="531.94" y2="290.92" stroke="#a8a8a8" stroke-width="0.5"/><line x1="530.32" y1="300.37" x2="533.85" y2="291.55" stroke="#a8a8a8" stroke-width="0.5"/><line x1="531.06" y1="300.72" x2="535.68" y2="292.42" stroke="#a8a8a8" stroke-width="0.5"/><line x1="531.75" y1="301.16" x2="537.37" y2="293.51" stroke="#a8a8a8" stroke-width="0.5"/><line x1="532.38" y1="301.69" x2="538.92" y2="294.80" stroke="#a8a8a8" stroke-width="0.5"/><line x1="532.93" y1="302.29" x2="540.29" y2="296.28" stroke="#a8a8a8" stroke-width="0.5"/><path d="M527.90 306.40 L524.49 301.71 A5.8 5.8 0 0 1 532.82 303.33Z" fill="#2a2a2a"/><path d="M524.49 301.71 A5.8 5.8 0 0 1 532.82 303.33" stroke="#777" stroke-width="1" fill="none"/><line x1="527.90" y1="306.40" x2="526.85" y2="311.80" stroke="#a0a0a0" stroke-width="1"/><circle cx="527.90" cy="306.40" r="1" fill="#bbb"/><path d="M432.08 333.60 L442.36 336.55 A16.5 16.5 0 0 1 420.86 347.50 L424.52 337.45 A5.8 5.8 0 0 0 432.08 333.60Z" fill="#f4f4f4"/><line x1="432.47" y1="334.56" x2="441.20" y2="338.31" stroke="#a8a8a8" stroke-width="0.5"/><line x1="432.10" y1="335.30" x2="440.29" y2="340.11" stroke="#a8a8a8" stroke-width="0.5"/><line x1="431.64" y1="335.97" x2="439.16" y2="341.78" stroke="#a8a8a8" stroke-width="0.5"/><line x1="431.10" y1="336.59" x2="437.83" y2="343.30" stroke="#a8a8a8" stroke-width="0.5"/><line x1="430.49" y1="337.13" x2="436.32" y2="344.63" stroke="#a8a8a8" stroke-width="0.5"/><line x1="429.81" y1="337.59" x2="434.65" y2="345.77" stroke="#a8a8a8" stroke-width="0.5"/><line x1="429.08" y1="337.97" x2="432.85" y2="346.69" stroke="#a8a8a8" stroke-width="0.5"/><line x1="428.31" y1="338.24" x2="430.95" y2="347.37" stroke="#a8a8a8" stroke-width="0.5"/><line x1="427.51" y1="338.42" x2="428.98" y2="347.81" stroke="#a8a8a8" stroke-width="0.5"/><line x1="426.69" y1="338.50" x2="426.97" y2="347.99" stroke="#a8a8a8" stroke-width="0.5"/><line x1="425.87" y1="338.47" x2="424.96" y2="347.93" stroke="#a8a8a8" stroke-width="0.5"/><line x1="425.06" y1="338.34" x2="422.96" y2="347.60" stroke="#a8a8a8" stroke-width="0.5"/><path d="M426.50 332.00 L432.08 333.60 A5.8 5.8 0 0 1 424.52 337.45Z" fill="#2a2a2a"/><path d="M432.08 333.60 A5.8 5.8 0 0 1 424.52 337.45" stroke="#777" stroke-width="1" fill="none"/><line x1="426.50" y1="332.00" x2="424.00" y2="327.10" stroke="#a0a0a0" stroke-width="1"/><circle cx="426.50" cy="332.00" r="1" fill="#bbb"/><path d="M472.77 334.81 L482.13 340.00 A16.5 16.5 0 0 1 458.71 345.84 L464.54 336.86 A5.8 5.8 0 0 0 472.77 334.81Z" fill="#f4f4f4"/><line x1="472.94" y1="335.84" x2="480.61" y2="341.46" stroke="#a8a8a8" stroke-width="0.5"/><line x1="472.42" y1="336.47" x2="479.31" y2="343.01" stroke="#a8a8a8" stroke-width="0.5"/><line x1="471.82" y1="337.03" x2="477.84" y2="344.38" stroke="#a8a8a8" stroke-width="0.5"/><line x1="471.15" y1="337.51" x2="476.20" y2="345.56" stroke="#a8a8a8" stroke-width="0.5"/><line x1="470.43" y1="337.90" x2="474.42" y2="346.52" stroke="#a8a8a8" stroke-width="0.5"/><line x1="469.67" y1="338.20" x2="472.54" y2="347.25" stroke="#a8a8a8" stroke-width="0.5"/><line x1="468.87" y1="338.39" x2="470.58" y2="347.74" stroke="#a8a8a8" stroke-width="0.5"/><line x1="468.06" y1="338.49" x2="468.58" y2="347.98" stroke="#a8a8a8" stroke-width="0.5"/><line x1="467.24" y1="338.48" x2="466.56" y2="347.96" stroke="#a8a8a8" stroke-width="0.5"/><line x1="466.43" y1="338.37" x2="464.56" y2="347.69" stroke="#a8a8a8" stroke-width="0.5"/><line x1="465.63" y1="338.16" x2="462.61" y2="347.17" stroke="#a8a8a8" stroke-width="0.5"/><line x1="464.87" y1="337.85" x2="460.74" y2="346.41" stroke="#a8a8a8" stroke-width="0.5"/><path d="M467.70 332.00 L472.77 334.81 A5.8 5.8 0 0 1 464.54 336.86Z" fill="#2a2a2a"/><path d="M472.77 334.81 A5.8 5.8 0 0 1 464.54 336.86" stroke="#777" stroke-width="1" fill="none"/><line x1="467.70" y1="332.00" x2="466.37" y2="326.66" stroke="#a0a0a0" stroke-width="1"/><circle cx="467.70" cy="332.00" r="1" fill="#bbb"/><path d="M512.89 343.28 L504.94 350.44 A16.5 16.5 0 0 1 507.04 326.40 L513.63 334.83 A5.8 5.8 0 0 0 512.89 343.28Z" fill="#f4f4f4"/><line x1="511.86" y1="343.11" x2="504.06" y2="348.52" stroke="#a8a8a8" stroke-width="0.5"/><line x1="511.44" y1="342.41" x2="503.01" y2="346.80" stroke="#a8a8a8" stroke-width="0.5"/><line x1="511.10" y1="341.66" x2="502.19" y2="344.95" stroke="#a8a8a8" stroke-width="0.5"/><line x1="510.87" y1="340.87" x2="501.61" y2="343.02" stroke="#a8a8a8" stroke-width="0.5"/><line x1="510.73" y1="340.06" x2="501.28" y2="341.03" stroke="#a8a8a8" stroke-width="0.5"/><line x1="510.70" y1="339.24" x2="501.20" y2="339.01" stroke="#a8a8a8" stroke-width="0.5"/><line x1="510.77" y1="338.43" x2="501.38" y2="337.00" stroke="#a8a8a8" stroke-width="0.5"/><line x1="510.95" y1="337.63" x2="501.81" y2="335.03" stroke="#a8a8a8" stroke-width="0.5"/><line x1="511.22" y1="336.85" x2="502.48" y2="333.13" stroke="#a8a8a8" stroke-width="0.5"/><line x1="511.59" y1="336.12" x2="503.39" y2="331.33" stroke="#a8a8a8" stroke-width="0.5"/><line x1="512.05" y1="335.44" x2="504.51" y2="329.65" stroke="#a8a8a8" stroke-width="0.5"/><line x1="512.59" y1="334.82" x2="505.84" y2="328.13" stroke="#a8a8a8" stroke-width="0.5"/><path d="M517.20 339.40 L512.89 343.28 A5.8 5.8 0 0 1 513.63 334.83Z" fill="#2a2a2a"/><path d="M512.89 343.28 A5.8 5.8 0 0 1 513.63 334.83" stroke="#777" stroke-width="1" fill="none"/><line x1="517.20" y1="339.40" x2="522.68" y2="339.88" stroke="#a0a0a0" stroke-width="1"/><circle cx="517.20" cy="339.40" r="1" fill="#bbb"/><path d="M544.25 334.37 L553.02 328.24 A16.5 16.5 0 0 1 548.00 351.84 L542.49 342.67 A5.8 5.8 0 0 0 544.25 334.37Z" fill="#f4f4f4"/><line x1="545.25" y1="334.67" x2="553.66" y2="330.25" stroke="#a8a8a8" stroke-width="0.5"/><line x1="545.59" y1="335.42" x2="554.48" y2="332.09" stroke="#a8a8a8" stroke-width="0.5"/><line x1="545.83" y1="336.20" x2="555.07" y2="334.02" stroke="#a8a8a8" stroke-width="0.5"/><line x1="545.96" y1="337.01" x2="555.41" y2="336.01" stroke="#a8a8a8" stroke-width="0.5"/><line x1="546.00" y1="337.83" x2="555.50" y2="338.02" stroke="#a8a8a8" stroke-width="0.5"/><line x1="545.93" y1="338.65" x2="555.33" y2="340.03" stroke="#a8a8a8" stroke-width="0.5"/><line x1="545.76" y1="339.45" x2="554.91" y2="342.01" stroke="#a8a8a8" stroke-width="0.5"/><line x1="545.49" y1="340.22" x2="554.24" y2="343.91" stroke="#a8a8a8" stroke-width="0.5"/><line x1="545.12" y1="340.96" x2="553.35" y2="345.72" stroke="#a8a8a8" stroke-width="0.5"/><line x1="544.67" y1="341.64" x2="552.23" y2="347.40" stroke="#a8a8a8" stroke-width="0.5"/><line x1="544.13" y1="342.26" x2="550.90" y2="348.92" stroke="#a8a8a8" stroke-width="0.5"/><line x1="543.52" y1="342.81" x2="549.40" y2="350.27" stroke="#a8a8a8" stroke-width="0.5"/><path d="M539.50 337.70 L544.25 334.37 A5.8 5.8 0 0 1 542.49 342.67Z" fill="#2a2a2a"/><path d="M544.25 334.37 A5.8 5.8 0 0 1 542.49 342.67" stroke="#777" stroke-width="1" fill="none"/><line x1="539.50" y1="337.70" x2="534.12" y2="336.56" stroke="#a0a0a0" stroke-width="1"/><circle cx="539.50" cy="337.70" r="1" fill="#bbb"/><path d="M450.23 372.60 L460.61 370.01 A16.5 16.5 0 0 1 447.47 390.25 L445.61 379.71 A5.8 5.8 0 0 0 450.23 372.60Z" fill="#f4f4f4"/><line x1="451.05" y1="373.23" x2="460.49" y2="372.11" stroke="#a8a8a8" stroke-width="0.5"/><line x1="451.10" y1="374.05" x2="460.60" y2="374.13" stroke="#a8a8a8" stroke-width="0.5"/><line x1="451.04" y1="374.87" x2="460.46" y2="376.14" stroke="#a8a8a8" stroke-width="0.5"/><line x1="450.88" y1="375.67" x2="460.06" y2="378.12" stroke="#a8a8a8" stroke-width="0.5"/><line x1="450.62" y1="376.45" x2="459.42" y2="380.03" stroke="#a8a8a8" stroke-width="0.5"/><line x1="450.26" y1="377.19" x2="458.54" y2="381.85" stroke="#a8a8a8" stroke-width="0.5"/><line x1="449.82" y1="377.88" x2="457.44" y2="383.54" stroke="#a8a8a8" stroke-width="0.5"/><line x1="449.29" y1="378.50" x2="456.14" y2="385.08" stroke="#a8a8a8" stroke-width="0.5"/><line x1="448.68" y1="379.06" x2="454.65" y2="386.45" stroke="#a8a8a8" stroke-width="0.5"/><line x1="448.01" y1="379.53" x2="453.01" y2="387.61" stroke="#a8a8a8" stroke-width="0.5"/><line x1="447.29" y1="379.92" x2="451.23" y2="388.56" stroke="#a8a8a8" stroke-width="0.5"/><line x1="446.53" y1="380.21" x2="449.34" y2="389.28" stroke="#a8a8a8" stroke-width="0.5"/><path d="M444.60 374.00 L450.23 372.60 A5.8 5.8 0 0 1 445.61 379.71Z" fill="#2a2a2a"/><path d="M450.23 372.60 A5.8 5.8 0 0 1 445.61 379.71" stroke="#777" stroke-width="1" fill="none"/><line x1="444.60" y1="374.00" x2="439.99" y2="371.00" stroke="#a0a0a0" stroke-width="1"/><circle cx="444.60" cy="374.00" r="1" fill="#bbb"/><path d="M495.10 378.20 L495.29 388.90 A16.5 16.5 0 0 1 478.52 371.54 L489.21 372.10 A5.8 5.8 0 0 0 495.10 378.20Z" fill="#f4f4f4"/><line x1="494.29" y1="378.86" x2="493.26" y2="388.31" stroke="#a8a8a8" stroke-width="0.5"/><line x1="493.49" y1="378.72" x2="491.28" y2="387.96" stroke="#a8a8a8" stroke-width="0.5"/><line x1="492.70" y1="378.48" x2="489.35" y2="387.37" stroke="#a8a8a8" stroke-width="0.5"/><line x1="491.96" y1="378.14" x2="487.51" y2="386.54" stroke="#a8a8a8" stroke-width="0.5"/><line x1="491.26" y1="377.71" x2="485.79" y2="385.48" stroke="#a8a8a8" stroke-width="0.5"/><line x1="490.62" y1="377.20" x2="484.21" y2="384.22" stroke="#a8a8a8" stroke-width="0.5"/><line x1="490.05" y1="376.61" x2="482.81" y2="382.77" stroke="#a8a8a8" stroke-width="0.5"/><line x1="489.56" y1="375.95" x2="481.60" y2="381.15" stroke="#a8a8a8" stroke-width="0.5"/><line x1="489.15" y1="375.24" x2="480.61" y2="379.39" stroke="#a8a8a8" stroke-width="0.5"/><line x1="488.84" y1="374.48" x2="479.84" y2="377.53" stroke="#a8a8a8" stroke-width="0.5"/><line x1="488.63" y1="373.69" x2="479.32" y2="375.58" stroke="#a8a8a8" stroke-width="0.5"/><line x1="488.52" y1="372.88" x2="479.04" y2="373.58" stroke="#a8a8a8" stroke-width="0.5"/><path d="M495.00 372.40 L495.10 378.20 A5.8 5.8 0 0 1 489.21 372.10Z" fill="#2a2a2a"/><path d="M495.10 378.20 A5.8 5.8 0 0 1 489.21 372.10" stroke="#777" stroke-width="1" fill="none"/><line x1="495.00" y1="372.40" x2="498.96" y2="368.58" stroke="#a0a0a0" stroke-width="1"/><circle cx="495.00" cy="372.40" r="1" fill="#bbb"/><path d="M526.42 372.98 L535.87 367.95 A16.5 16.5 0 0 1 528.01 390.77 L523.66 381.00 A5.8 5.8 0 0 0 526.42 372.98Z" fill="#f4f4f4"/><line x1="527.38" y1="373.40" x2="536.26" y2="370.03" stroke="#a8a8a8" stroke-width="0.5"/><line x1="527.62" y1="374.18" x2="536.86" y2="371.95" stroke="#a8a8a8" stroke-width="0.5"/><line x1="527.76" y1="374.99" x2="537.20" y2="373.94" stroke="#a8a8a8" stroke-width="0.5"/><line x1="527.80" y1="375.80" x2="537.30" y2="375.96" stroke="#a8a8a8" stroke-width="0.5"/><line x1="527.73" y1="376.62" x2="537.14" y2="377.97" stroke="#a8a8a8" stroke-width="0.5"/><line x1="527.57" y1="377.42" x2="536.73" y2="379.94" stroke="#a8a8a8" stroke-width="0.5"/><line x1="527.30" y1="378.20" x2="536.07" y2="381.85" stroke="#a8a8a8" stroke-width="0.5"/><line x1="526.94" y1="378.93" x2="535.18" y2="383.66" stroke="#a8a8a8" stroke-width="0.5"/><line x1="526.49" y1="379.62" x2="534.07" y2="385.35" stroke="#a8a8a8" stroke-width="0.5"/><line x1="525.95" y1="380.24" x2="532.75" y2="386.88" stroke="#a8a8a8" stroke-width="0.5"/><line x1="525.34" y1="380.79" x2="531.25" y2="388.23" stroke="#a8a8a8" stroke-width="0.5"/><line x1="524.67" y1="381.26" x2="529.60" y2="389.38" stroke="#a8a8a8" stroke-width="0.5"/><path d="M521.30 375.70 L526.42 372.98 A5.8 5.8 0 0 1 523.66 381.00Z" fill="#2a2a2a"/><path d="M526.42 372.98 A5.8 5.8 0 0 1 523.66 381.00" stroke="#777" stroke-width="1" fill="none"/><line x1="521.30" y1="375.70" x2="516.10" y2="373.91" stroke="#a0a0a0" stroke-width="1"/><circle cx="521.30" cy="375.70" r="1" fill="#bbb"/><path d="M568.15 372.30 L578.38 369.18 A16.5 16.5 0 0 1 566.31 390.08 L563.90 379.65 A5.8 5.8 0 0 0 568.15 372.30Z" fill="#f4f4f4"/><line x1="569.01" y1="372.90" x2="578.37" y2="371.29" stroke="#a8a8a8" stroke-width="0.5"/><line x1="569.09" y1="373.71" x2="578.58" y2="373.29" stroke="#a8a8a8" stroke-width="0.5"/><line x1="569.08" y1="374.53" x2="578.55" y2="375.31" stroke="#a8a8a8" stroke-width="0.5"/><line x1="568.96" y1="375.34" x2="578.25" y2="377.31" stroke="#a8a8a8" stroke-width="0.5"/><line x1="568.74" y1="376.13" x2="577.71" y2="379.25" stroke="#a8a8a8" stroke-width="0.5"/><line x1="568.42" y1="376.89" x2="576.93" y2="381.11" stroke="#a8a8a8" stroke-width="0.5"/><line x1="568.01" y1="377.60" x2="575.92" y2="382.86" stroke="#a8a8a8" stroke-width="0.5"/><line x1="567.52" y1="378.25" x2="574.70" y2="384.46" stroke="#a8a8a8" stroke-width="0.5"/><line x1="566.94" y1="378.84" x2="573.29" y2="385.90" stroke="#a8a8a8" stroke-width="0.5"/><line x1="566.30" y1="379.34" x2="571.71" y2="387.16" stroke="#a8a8a8" stroke-width="0.5"/><line x1="565.60" y1="379.77" x2="569.98" y2="388.20" stroke="#a8a8a8" stroke-width="0.5"/><line x1="564.85" y1="380.10" x2="568.13" y2="389.01" stroke="#a8a8a8" stroke-width="0.5"/><path d="M562.60 374.00 L568.15 372.30 A5.8 5.8 0 0 1 563.90 379.65Z" fill="#2a2a2a"/><path d="M568.15 372.30 A5.8 5.8 0 0 1 563.90 379.65" stroke="#777" stroke-width="1" fill="none"/><line x1="562.60" y1="374.00" x2="557.84" y2="371.25" stroke="#a0a0a0" stroke-width="1"/><circle cx="562.60" cy="374.00" r="1" fill="#bbb"/><path d="M411.15 372.30 L421.38 369.18 A16.5 16.5 0 0 1 409.31 390.08 L406.90 379.65 A5.8 5.8 0 0 0 411.15 372.30Z" fill="#f4f4f4"/><line x1="412.01" y1="372.90" x2="421.37" y2="371.29" stroke="#a8a8a8" stroke-width="0.5"/><line x1="412.09" y1="373.71" x2="421.58" y2="373.29" stroke="#a8a8a8" stroke-width="0.5"/><line x1="412.08" y1="374.53" x2="421.55" y2="375.31" stroke="#a8a8a8" stroke-width="0.5"/><line x1="411.96" y1="375.34" x2="421.25" y2="377.31" stroke="#a8a8a8" stroke-width="0.5"/><line x1="411.74" y1="376.13" x2="420.71" y2="379.25" stroke="#a8a8a8" stroke-width="0.5"/><line x1="411.42" y1="376.89" x2="419.93" y2="381.11" stroke="#a8a8a8" stroke-width="0.5"/><line x1="411.01" y1="377.60" x2="418.92" y2="382.86" stroke="#a8a8a8" stroke-width="0.5"/><line x1="410.52" y1="378.25" x2="417.70" y2="384.46" stroke="#a8a8a8" stroke-width="0.5"/><line x1="409.94" y1="378.84" x2="416.29" y2="385.90" stroke="#a8a8a8" stroke-width="0.5"/><line x1="409.30" y1="379.34" x2="414.71" y2="387.16" stroke="#a8a8a8" stroke-width="0.5"/><line x1="408.60" y1="379.77" x2="412.98" y2="388.20" stroke="#a8a8a8" stroke-width="0.5"/><line x1="407.85" y1="380.10" x2="411.13" y2="389.01" stroke="#a8a8a8" stroke-width="0.5"/><path d="M405.60 374.00 L411.15 372.30 A5.8 5.8 0 0 1 406.90 379.65Z" fill="#2a2a2a"/><path d="M411.15 372.30 A5.8 5.8 0 0 1 406.90 379.65" stroke="#777" stroke-width="1" fill="none"/><line x1="405.60" y1="374.00" x2="400.84" y2="371.25" stroke="#a0a0a0" stroke-width="1"/><circle cx="405.60" cy="374.00" r="1" fill="#bbb"/><path d="M435.39 422.48 L427.44 429.64 A16.5 16.5 0 0 1 429.54 405.60 L436.13 414.03 A5.8 5.8 0 0 0 435.39 422.48Z" fill="#f4f4f4"/><line x1="434.36" y1="422.31" x2="426.56" y2="427.72" stroke="#a8a8a8" stroke-width="0.5"/><line x1="433.94" y1="421.61" x2="425.51" y2="426.00" stroke="#a8a8a8" stroke-width="0.5"/><line x1="433.60" y1="420.86" x2="424.69" y2="424.15" stroke="#a8a8a8" stroke-width="0.5"/><line x1="433.37" y1="420.07" x2="424.11" y2="422.22" stroke="#a8a8a8" stroke-width="0.5"/><line x1="433.23" y1="419.26" x2="423.78" y2="420.23" stroke="#a8a8a8" stroke-width="0.5"/><line x1="433.20" y1="418.44" x2="423.70" y2="418.21" stroke="#a8a8a8" stroke-width="0.5"/><line x1="433.27" y1="417.63" x2="423.88" y2="416.20" stroke="#a8a8a8" stroke-width="0.5"/><line x1="433.45" y1="416.83" x2="424.31" y2="414.23" stroke="#a8a8a8" stroke-width="0.5"/><line x1="433.72" y1="416.05" x2="424.98" y2="412.33" stroke="#a8a8a8" stroke-width="0.5"/><line x1="434.09" y1="415.32" x2="425.89" y2="410.53" stroke="#a8a8a8" stroke-width="0.5"/><line x1="434.55" y1="414.64" x2="427.01" y2="408.85" stroke="#a8a8a8" stroke-width="0.5"/><line x1="435.09" y1="414.02" x2="428.34" y2="407.33" stroke="#a8a8a8" stroke-width="0.5"/><path d="M439.70 418.60 L435.39 422.48 A5.8 5.8 0 0 1 436.13 414.03Z" fill="#2a2a2a"/><path d="M435.39 422.48 A5.8 5.8 0 0 1 436.13 414.03" stroke="#777" stroke-width="1" fill="none"/><line x1="439.70" y1="418.60" x2="445.18" y2="419.08" stroke="#a0a0a0" stroke-width="1"/><circle cx="439.70" cy="418.60" r="1" fill="#bbb"/><path d="M475.39 415.78 L478.87 425.90 A16.5 16.5 0 0 1 457.56 414.57 L467.90 411.80 A5.8 5.8 0 0 0 475.39 415.78Z" fill="#f4f4f4"/><line x1="474.83" y1="416.66" x2="476.76" y2="425.96" stroke="#a8a8a8" stroke-width="0.5"/><line x1="474.01" y1="416.78" x2="474.77" y2="426.25" stroke="#a8a8a8" stroke-width="0.5"/><line x1="473.19" y1="416.79" x2="472.75" y2="426.28" stroke="#a8a8a8" stroke-width="0.5"/><line x1="472.38" y1="416.70" x2="470.74" y2="426.06" stroke="#a8a8a8" stroke-width="0.5"/><line x1="471.58" y1="416.51" x2="468.78" y2="425.59" stroke="#a8a8a8" stroke-width="0.5"/><line x1="470.82" y1="416.22" x2="466.89" y2="424.87" stroke="#a8a8a8" stroke-width="0.5"/><line x1="470.09" y1="415.84" x2="465.11" y2="423.93" stroke="#a8a8a8" stroke-width="0.5"/><line x1="469.42" y1="415.36" x2="463.46" y2="422.76" stroke="#a8a8a8" stroke-width="0.5"/><line x1="468.82" y1="414.81" x2="461.98" y2="421.40" stroke="#a8a8a8" stroke-width="0.5"/><line x1="468.29" y1="414.18" x2="460.67" y2="419.86" stroke="#a8a8a8" stroke-width="0.5"/><line x1="467.84" y1="413.50" x2="459.57" y2="418.17" stroke="#a8a8a8" stroke-width="0.5"/><line x1="467.48" y1="412.76" x2="458.69" y2="416.35" stroke="#a8a8a8" stroke-width="0.5"/><path d="M473.50 410.30 L475.39 415.78 A5.8 5.8 0 0 1 467.90 411.80Z" fill="#2a2a2a"/><path d="M475.39 415.78 A5.8 5.8 0 0 1 467.90 411.80" stroke="#777" stroke-width="1" fill="none"/><line x1="473.50" y1="410.30" x2="476.08" y2="405.44" stroke="#a0a0a0" stroke-width="1"/><circle cx="473.50" cy="410.30" r="1" fill="#bbb"/><path d="M503.67 415.62 L507.68 405.70 A16.5 16.5 0 0 1 516.33 428.23 L506.71 423.54 A5.8 5.8 0 0 0 503.67 415.62Z" fill="#f4f4f4"/><line x1="504.67" y1="415.33" x2="509.31" y2="407.04" stroke="#a8a8a8" stroke-width="0.5"/><line x1="505.36" y1="415.77" x2="511.01" y2="408.13" stroke="#a8a8a8" stroke-width="0.5"/><line x1="505.99" y1="416.30" x2="512.55" y2="409.43" stroke="#a8a8a8" stroke-width="0.5"/><line x1="506.55" y1="416.90" x2="513.92" y2="410.91" stroke="#a8a8a8" stroke-width="0.5"/><line x1="507.02" y1="417.57" x2="515.09" y2="412.56" stroke="#a8a8a8" stroke-width="0.5"/><line x1="507.41" y1="418.29" x2="516.05" y2="414.34" stroke="#a8a8a8" stroke-width="0.5"/><line x1="507.70" y1="419.06" x2="516.77" y2="416.22" stroke="#a8a8a8" stroke-width="0.5"/><line x1="507.90" y1="419.85" x2="517.25" y2="418.18" stroke="#a8a8a8" stroke-width="0.5"/><line x1="507.99" y1="420.67" x2="517.48" y2="420.18" stroke="#a8a8a8" stroke-width="0.5"/><line x1="507.98" y1="421.49" x2="517.45" y2="422.20" stroke="#a8a8a8" stroke-width="0.5"/><line x1="507.87" y1="422.30" x2="517.18" y2="424.20" stroke="#a8a8a8" stroke-width="0.5"/><line x1="507.65" y1="423.09" x2="516.65" y2="426.15" stroke="#a8a8a8" stroke-width="0.5"/><path d="M501.50 421.00 L503.67 415.62 A5.8 5.8 0 0 1 506.71 423.54Z" fill="#2a2a2a"/><path d="M503.67 415.62 A5.8 5.8 0 0 1 506.71 423.54" stroke="#777" stroke-width="1" fill="none"/><line x1="501.50" y1="421.00" x2="496.37" y2="422.97" stroke="#a0a0a0" stroke-width="1"/><circle cx="501.50" cy="421.00" r="1" fill="#bbb"/><path d="M552.49 421.58 L544.54 428.74 A16.5 16.5 0 0 1 546.64 404.70 L553.23 413.13 A5.8 5.8 0 0 0 552.49 421.58Z" fill="#f4f4f4"/><line x1="551.46" y1="421.41" x2="543.66" y2="426.82" stroke="#a8a8a8" stroke-width="0.5"/><line x1="551.04" y1="420.71" x2="542.61" y2="425.10" stroke="#a8a8a8" stroke-width="0.5"/><line x1="550.70" y1="419.96" x2="541.79" y2="423.25" stroke="#a8a8a8" stroke-width="0.5"/><line x1="550.47" y1="419.17" x2="541.21" y2="421.32" stroke="#a8a8a8" stroke-width="0.5"/><line x1="550.33" y1="418.36" x2="540.88" y2="419.33" stroke="#a8a8a8" stroke-width="0.5"/><line x1="550.30" y1="417.54" x2="540.80" y2="417.31" stroke="#a8a8a8" stroke-width="0.5"/><line x1="550.37" y1="416.73" x2="540.98" y2="415.30" stroke="#a8a8a8" stroke-width="0.5"/><line x1="550.55" y1="415.93" x2="541.41" y2="413.33" stroke="#a8a8a8" stroke-width="0.5"/><line x1="550.82" y1="415.15" x2="542.08" y2="411.43" stroke="#a8a8a8" stroke-width="0.5"/><line x1="551.19" y1="414.42" x2="542.99" y2="409.63" stroke="#a8a8a8" stroke-width="0.5"/><line x1="551.65" y1="413.74" x2="544.11" y2="407.95" stroke="#a8a8a8" stroke-width="0.5"/><line x1="552.19" y1="413.12" x2="545.44" y2="406.43" stroke="#a8a8a8" stroke-width="0.5"/><path d="M556.80 417.70 L552.49 421.58 A5.8 5.8 0 0 1 553.23 413.13Z" fill="#2a2a2a"/><path d="M552.49 421.58 A5.8 5.8 0 0 1 553.23 413.13" stroke="#777" stroke-width="1" fill="none"/><line x1="556.80" y1="417.70" x2="562.28" y2="418.18" stroke="#a0a0a0" stroke-width="1"/><circle cx="556.80" cy="417.70" r="1" fill="#bbb"/></g></svg>
<div class="t" style="left:388.4px;top:435.02px;font-size:4.4px;color:#c8c8c8;transform-origin:0 0;transform:scaleX(0.930);">2048 x 2048 (Grayscale, 16bpc)</div>
<div class="a" style="left:388.2px;top:439.5px;width:207.3px;height:11px;background:#303030;"></div>
<svg style="left:393.5px;top:442.3px" width="6" height="6"><rect x="0.2" y="0" width="5.4" height="1.5" fill="#d85050"/><rect x="0.2" y="1.5" width="5.4" height="1.5" fill="#e0a040"/><rect x="0.2" y="3" width="5.4" height="1.5" fill="#50a050"/><rect x="0.2" y="4.5" width="5.4" height="1.5" fill="#4070c0"/></svg>
<div class="a" style="left:403.7px;top:442.3px;width:5.8px;height:5.8px;background:#000;"></div>
<div class="a" style="left:413.2px;top:442.3px;width:5.8px;height:5.8px;background:#6a6a6a;"></div>
<div class="a" style="left:421.5px;top:440.5px;width:9px;height:9px;background:#555;"></div>
<div class="a" style="left:423.6px;top:442.5px;width:4.8px;height:4.8px;background:#9ac0c0;border-radius:0.5px"></div>
<svg style="left:508px;top:441.8px" width="7" height="7"><path d="M0.5 0.5 H6.5 V6.5 H0.5Z M2.5 0.5 V6.5 M4.5 0.5 V6.5 M0.5 2.5 H6.5 M0.5 4.5 H6.5" stroke="#ccc" stroke-width="0.6" fill="none"/></svg>
<svg style="left:519px;top:441.8px" width="7" height="7"><path d="M0.5 1 H4.5 M2.5 1 V6.5" stroke="#ccc" stroke-width="0.9" fill="none"/><circle cx="5" cy="4.5" r="0.6" fill="#ccc"/><circle cx="6" cy="6" r="0.6" fill="#ccc"/></svg>
<svg style="left:528.8px;top:441.8px" width="7" height="7"><rect x="1.5" y="1.5" width="4" height="4" fill="#ccc"/><path d="M0.3 0.3 H2 M0.3 0.3 V2 M6.7 0.3 H5 M6.7 0.3 V2 M0.3 6.7 H2 M0.3 6.7 V5 M6.7 6.7 H5 M6.7 6.7 V5" stroke="#ccc" stroke-width="0.6"/></svg>
<svg style="left:536.8px;top:441.8px" width="7" height="7"><circle cx="3.5" cy="3.5" r="1.8" fill="none" stroke="#aaa" stroke-width="0.6"/><path d="M3.5 0 V7 M0 3.5 H7" stroke="#aaa" stroke-width="0.5"/></svg>
<svg style="left:546px;top:444.2px" width="4" height="3"><path d="M0.3 0.5 L2 2.3 L3.7 0.5" stroke="#aaa" stroke-width="0.7" fill="none"/></svg>
<div class="a" style="left:552.7px;top:441.3px;width:25.8px;height:8px;background:#262626;border:0.5px solid #3a3a3a"></div>
<div class="t" style="left:562px;top:442.55px;font-size:5px;color:#bbb;transform-origin:0 0;transform:scaleX(0.855);">79.58%</div>
<svg style="left:580.5px;top:444.2px" width="4" height="3"><path d="M0.3 0.5 L2 2.3 L3.7 0.5" stroke="#aaa" stroke-width="0.7" fill="none"/></svg>
<div class="a" style="left:587px;top:441px;width:6px;height:8.5px;background:#555;"></div>
<div class="a" style="left:588.7px;top:444px;width:2.6px;height:3px;background:#ccc;"></div>
<div class="a" style="left:597.5px;top:72.7px;width:152.5px;height:8.3px;background:#2c2c2c;"></div>
<svg style="left:600.5px;top:73.7px" width="5" height="6"><path d="M0.3 0.3 H3.3 L4.7 1.7 V5.7 H0.3Z" fill="#ccc"/></svg>
<div class="t" style="left:607px;top:73.97px;font-size:5.4px;color:#cfcfcf;font-weight:bold;transform-origin:0 0;transform:scaleX(0.911);">Dot - PROPERTIES</div>
<svg style="left:713.4px;top:74.1px" width="5" height="5"><path d="M4.5 0.5 L2 3 L0.5 4.5" stroke="#ccc" stroke-width="1"/><path d="M2.5 0.8 L4.2 2.5 L2.5 3.2 L1.8 2.5Z" fill="#ccc"/></svg>
<svg style="left:722.6px;top:74.1px" width="5" height="5"><rect x="0.4" y="0.4" width="4.2" height="4.2" fill="none" stroke="#bbb" stroke-width="0.6"/><rect x="0.6" y="2.2" width="2.2" height="2.2" fill="#ddd"/><path d="M2.5 2.5 L4.2 0.8" stroke="#ddd" stroke-width="0.6"/></svg>
<svg style="left:732px;top:73.6px" width="6" height="6"><path d="M0.5 0.5L5.5 5.5M5.5 0.5L0.5 5.5" stroke="#ccc" stroke-width="0.8"/><circle cx="3" cy="3" r="1.1" fill="#eee"/></svg>
<svg style="left:742.0999999999999px;top:74.39999999999999px" width="5" height="5"><path d="M0.4 0.4L4 4M4 0.4L0.4 4" stroke="#aaa" stroke-width="0.8"/></svg>
<div class="a" style="left:597.5px;top:81px;width:152.5px;height:369.5px;background:#3a3a3a;"></div>
<div class="a" style="left:745.6px;top:91px;width:0.7px;height:359px;background:#333;"></div>
<div class="a" style="left:749.1px;top:51.5px;width:0.9px;height:409px;background:#5a5a5a;"></div>
<div class="a" style="left:597.5px;top:81.5px;width:148.5px;height:9px;background:#545454;"></div>
<svg style="left:600.5px;top:84.5px" width="5" height="4"><path d="M0.5 0.8 L2.3 2.8 L4.1 0.8" stroke="#aaa" stroke-width="0.7" fill="none"/></svg>
<div class="t" style="left:607px;top:83.68px;font-size:5.6px;color:#dcdcdc;font-weight:bold;transform-origin:0 0;transform:scaleX(0.842);">SPECIFIC PARAMETERS</div>
<div class="t" style="left:602px;top:93.25px;font-size:5px;color:#cfcfcf;font-weight:bold;transform-origin:0 0;transform:scaleX(0.940);">Name</div>
<div class="a" style="left:603px;top:101px;width:140.5px;height:5.8px;background:#262626;"></div>
<div class="t" style="left:602.4px;top:113.35px;font-size:5px;color:#cfcfcf;font-weight:bold;transform-origin:0 0;transform:scaleX(0.965);">Input Portal</div>
<div class="a" style="left:603px;top:125px;width:128.8px;height:6.8px;background:#262626;"></div>
<div class="t" style="left:605px;top:126.45px;font-size:5px;color:#c4c4c4;transform-origin:0 0;transform:scaleX(0.829);">Motif_Switch</div>
<svg style="left:726px;top:127.5px" width="4" height="3"><path d="M0.3 0.5 L2 2.3 L3.7 0.5" stroke="#aaa" stroke-width="0.7" fill="none"/></svg>
<svg style="left:734.7px;top:126.3px" width="4" height="4"><path d="M0.3 0.3L3.7 3.7M3.7 0.3L0.3 3.7" stroke="#aaa" stroke-width="0.7"/></svg>
<div class="a" style="left:0px;top:449.8px;width:750px;height:11px;background:#313131;"></div>
<div class="a" style="left:563.8px;top:451.8px;width:49.4px;height:6.5px;background:#4a4a4a;"></div>
<div class="t" style="left:615.7px;top:454.34px;font-size:4.8px;color:#bdbdbd;transform-origin:0 0;transform:scaleX(0.882);">Substance Engine: Direct3D 11  Memory: 4%</div>
<div class="t" style="left:710.7px;top:454.34px;font-size:4.8px;color:#bdbdbd;transform-origin:0 0;transform:scaleX(0.915);">Version: 13.0.0</div>
<div class="a" style="left:145px;top:460.3px;width:605px;height:0.8px;background:#26344a;"></div>
</body></html>
